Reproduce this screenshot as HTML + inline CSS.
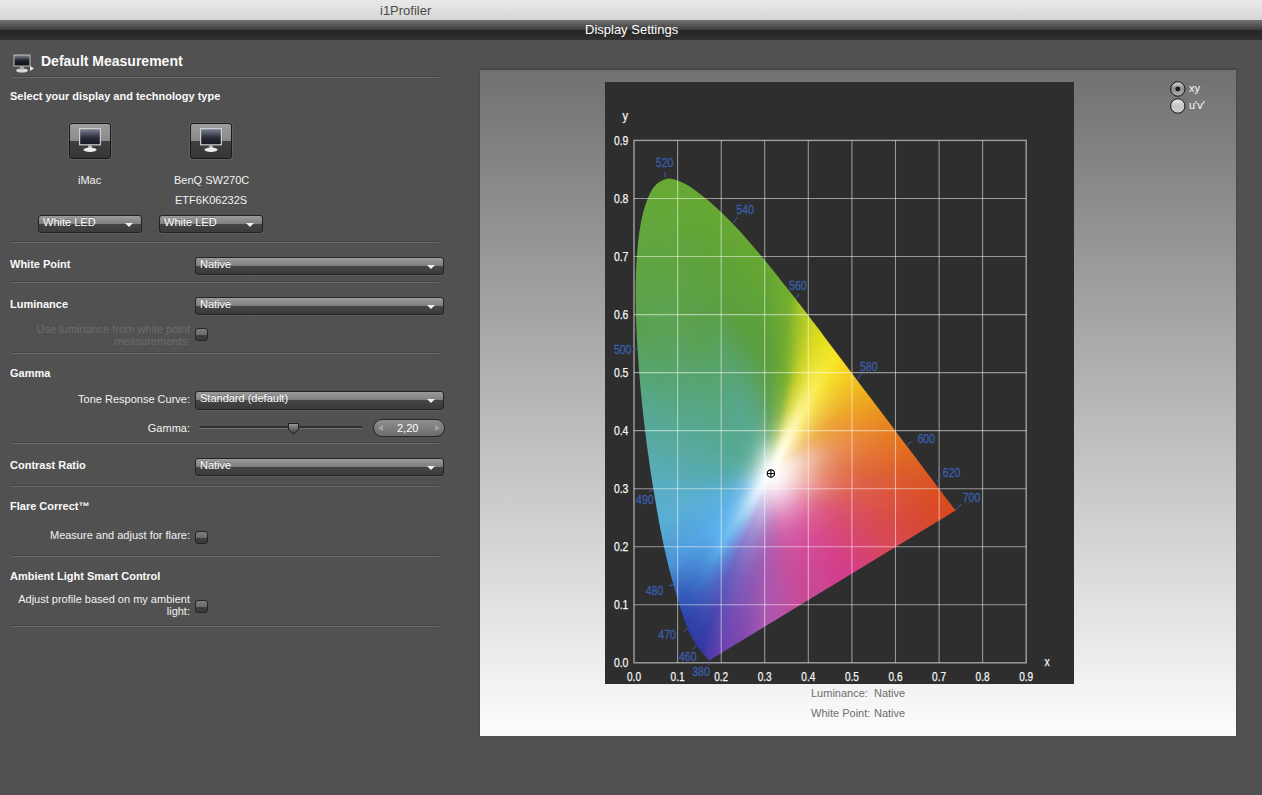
<!DOCTYPE html>
<html><head><meta charset="utf-8"><style>
*{margin:0;padding:0;box-sizing:border-box}
html,body{width:1262px;height:795px;overflow:hidden;background:#515151;font-family:"Liberation Sans",sans-serif;}
.abs{position:absolute}
#tb{position:absolute;left:0;top:0;width:1262px;height:20px;background:linear-gradient(#e9e9e9 0,#e6e6e6 20%,#d5d5d5 100%);}
#tb span{position:absolute;left:380px;top:3px;font-size:13px;line-height:15px;color:#4b4b4b}
#db{position:absolute;left:0;top:20px;width:1262px;height:20px;background:linear-gradient(#727272 0,#3e3e3e 48%,#262626 50%,#2a2a2a 75%,#323232 100%);}
#db span{position:absolute;left:585px;top:2px;font-size:13px;line-height:15px;color:#fff}
.lb,.bl,.dl{position:absolute;font-size:11px;line-height:12px;color:#f2f2f2;white-space:nowrap}
.bl{font-weight:bold;color:#fafafa}
.dl{color:#6c6c6c;text-align:right}
.r{text-align:right}
.sep{position:absolute;left:11px;width:428px;height:2px;margin-top:-1px;border-top:1px solid #444;border-bottom:1px solid #6a6a6a}
.dd{position:absolute;border:1px solid #232323;border-radius:3px;background:linear-gradient(#9c9c9c 0,#7e7e7e 48%,#454545 50%,#3b3b3b 100%);box-shadow:0 1px 0 rgba(255,255,255,0.08)}
.dd span{position:absolute;left:4px;top:0px;font-size:11px;line-height:12px;color:#fff;text-shadow:0 -1px 0 rgba(0,0,0,0.25)}
.dd i{position:absolute;right:8px;top:7px;width:0;height:0;border-left:4px solid transparent;border-right:4px solid transparent;border-top:4px solid #f0f0f0}
.cb{position:absolute;width:13px;height:13px;border:1px solid #242424;border-radius:3px;background:linear-gradient(#7e7e7e 0,#6a6a6a 50%,#404040 52%,#3a3a3a 100%)}
.mb{position:absolute;width:42px;height:36px;border:1px solid #1a1a1a;border-radius:3px;background:linear-gradient(#9c9c9c 0,#8a8a8a 49%,#404040 50%,#363636 100%);box-shadow:0 0 0 1px rgba(120,120,120,0.35)}
.mb svg{position:absolute;left:-1px;top:-1px}
</style></head>
<body>
<div id="tb"><span>i1Profiler</span></div>
<div id="db"><span>Display Settings</span></div>
<svg class="abs" style="left:12px;top:52px" width="24" height="22" viewBox="0 0 24 22">
<defs><linearGradient id="hs" x1="0" y1="0" x2="0" y2="1"><stop offset="0" stop-color="#7b8090"/><stop offset="0.5" stop-color="#22252e"/><stop offset="1" stop-color="#101116"/></linearGradient></defs>
<rect x="1.5" y="2.5" width="17" height="12" fill="#bdbdbd"/><rect x="2.5" y="3.5" width="15" height="10" fill="url(#hs)"/>
<ellipse cx="10" cy="18.5" rx="6" ry="2" fill="#d8d8d8"/><rect x="8" y="14.5" width="4" height="3" fill="#aaa"/>
<path d="M18 14 L22 16.5 L18 19 Z" fill="#e8e8e8"/></svg>
<div class="bl" style="left:41px;top:53px;font-size:14px;line-height:16px">Default Measurement</div>
<div class="sep" style="top:77px"></div>
<div class="bl" style="left:10px;top:90px">Select your display and technology type</div>
<div class="mb" style="left:69px;top:123px"><svg width="42" height="36" viewBox="0 0 42 36">
<defs><linearGradient id="scr69" x1="0" y1="0" x2="0" y2="1"><stop offset="0" stop-color="#7c8294"/><stop offset="0.55" stop-color="#2a2d3a"/><stop offset="1" stop-color="#161822"/></linearGradient></defs>
<rect x="10" y="5" width="22" height="17.4" fill="#cfcfcf"/>
<rect x="11.2" y="6.2" width="19.6" height="15" fill="url(#scr69)"/>
<rect x="19.2" y="22.4" width="3.6" height="3" fill="#c4c4c4"/>
<ellipse cx="21" cy="26.8" rx="6.6" ry="2.2" fill="#ececec"/>
</svg></div>
<div class="mb" style="left:190px;top:123px"><svg width="42" height="36" viewBox="0 0 42 36">
<defs><linearGradient id="scr190" x1="0" y1="0" x2="0" y2="1"><stop offset="0" stop-color="#7c8294"/><stop offset="0.55" stop-color="#2a2d3a"/><stop offset="1" stop-color="#161822"/></linearGradient></defs>
<rect x="10" y="5" width="22" height="17.4" fill="#cfcfcf"/>
<rect x="11.2" y="6.2" width="19.6" height="15" fill="url(#scr190)"/>
<rect x="19.2" y="22.4" width="3.6" height="3" fill="#c4c4c4"/>
<ellipse cx="21" cy="26.8" rx="6.6" ry="2.2" fill="#ececec"/>
</svg></div>
<div class="lb" style="left:78px;top:174px">iMac</div>
<div class="lb" style="left:174px;top:174px">BenQ SW270C</div>
<div class="lb" style="left:175px;top:194px">ETF6K06232S</div>
<div class="dd" style="left:38px;top:215px;width:104px;height:18px"><span>White LED</span><i></i></div>
<div class="dd" style="left:159px;top:215px;width:104px;height:18px"><span>White LED</span><i></i></div>
<div class="sep" style="top:242px"></div>
<div class="bl" style="left:10px;top:258px">White Point</div>
<div class="dd" style="left:195px;top:257px;width:249px;height:18px"><span>Native</span><i></i></div>
<div class="sep" style="top:282px"></div>
<div class="bl" style="left:10px;top:298px">Luminance</div>
<div class="dd" style="left:195px;top:297px;width:249px;height:18px"><span>Native</span><i></i></div>
<div class="dl" style="right:1072px;top:323px">Use luminance from white point<br>measurements:</div>
<div class="cb" style="left:195px;top:328px"></div>
<div class="sep" style="top:353px"></div>
<div class="bl" style="left:10px;top:367px">Gamma</div>
<div class="lb r" style="right:1072px;top:393px">Tone Response Curve:</div>
<div class="dd" style="left:195px;top:391px;width:249px;height:19px"><span>Standard (default)</span><i></i></div>
<div class="lb r" style="right:1072px;top:422px">Gamma:</div>
<div class="abs" style="left:199px;top:426px;width:164px;height:3px;border-radius:2px;background:#303030;border-bottom:1px solid #727272"></div>
<svg class="abs" style="left:287px;top:422px" width="13" height="13" viewBox="0 0 13 13"><defs><linearGradient id="th" x1="0" y1="0" x2="0" y2="1"><stop offset="0" stop-color="#9a9a9a"/><stop offset="1" stop-color="#3a3a3a"/></linearGradient></defs>
<path d="M1.5 1.5 H11.5 V7.5 L6.5 12 L1.5 7.5 Z" fill="url(#th)" stroke="#1f1f1f" stroke-width="1"/></svg>
<div class="abs" style="left:373px;top:419px;width:72px;height:18px;border:1px solid #262626;border-radius:9px;background:linear-gradient(#8f8f8f,#6c6c6c)"></div>
<div class="lb" style="left:397px;top:422px;color:#fff">2,20</div>
<div class="abs" style="left:378px;top:425px;width:0;height:0;border-top:3px solid transparent;border-bottom:3px solid transparent;border-right:5px solid #a4a4a4"></div>
<div class="abs" style="left:435px;top:425px;width:0;height:0;border-top:3px solid transparent;border-bottom:3px solid transparent;border-left:5px solid #a4a4a4"></div>
<div class="sep" style="top:443px"></div>
<div class="bl" style="left:10px;top:459px">Contrast Ratio</div>
<div class="dd" style="left:195px;top:458px;width:249px;height:18px"><span>Native</span><i></i></div>
<div class="sep" style="top:486px"></div>
<div class="bl" style="left:10px;top:500px">Flare Correct™</div>
<div class="lb r" style="right:1072px;top:529px">Measure and adjust for flare:</div>
<div class="cb" style="left:195px;top:531px"></div>
<div class="sep" style="top:556px"></div>
<div class="bl" style="left:10px;top:570px">Ambient Light Smart Control</div>
<div class="lb r" style="right:1072px;top:593px">Adjust profile based on my ambient<br>light:</div>
<div class="cb" style="left:195px;top:600px"></div>
<div class="sep" style="top:626px"></div>
<div class="abs" style="left:480px;top:70px;width:756px;height:666px;background:linear-gradient(#717171,#fdfdfd);box-shadow:0 -1px 2px rgba(0,0,0,0.25)"></div>
<div class="abs" style="left:605px;top:82px;width:469px;height:602px;background:#2e2e2e"></div>
<svg class="abs" style="left:605px;top:82px" width="469" height="602" viewBox="0 0 469 602"><defs><clipPath id="loc"><path d="M104.9 577.9 C104.9 577.9 104.9 577.9 104.8 577.9 C104.8 577.9 104.8 577.9 104.7 578.0 C104.7 578.0 104.7 577.9 104.7 578.0 C104.6 578.0 104.6 578.0 104.5 578.0 C104.5 578.0 104.4 578.0 104.4 578.0 C104.3 578.0 104.3 578.0 104.2 578.0 C104.2 578.0 104.1 578.0 104.0 578.0 C103.9 578.0 103.8 577.9 103.7 577.8 C103.6 577.7 103.4 577.6 103.2 577.4 C103.0 577.3 102.9 577.1 102.6 576.8 C102.4 576.5 102.1 576.2 101.7 575.8 C101.4 575.4 101.1 575.0 100.6 574.5 C100.2 574.0 99.8 573.4 99.2 572.8 C98.6 572.1 98.0 571.4 97.2 570.5 C96.5 569.7 95.7 568.8 94.8 567.6 C93.9 566.5 92.9 565.2 91.8 563.6 C90.6 561.9 89.5 560.4 88.1 557.6 C86.6 554.9 85.0 551.8 83.1 547.3 C81.2 542.7 79.1 537.7 76.8 530.4 C74.4 523.2 71.8 514.8 68.8 503.8 C65.8 492.8 62.3 480.0 58.9 464.3 C55.6 448.6 52.1 430.1 48.8 409.6 C45.5 389.1 41.9 364.8 39.2 341.3 C36.5 317.7 34.0 291.7 32.6 268.3 C31.1 244.9 30.3 221.2 30.7 200.8 C31.1 180.3 32.5 160.6 35.1 145.4 C37.6 130.2 41.6 117.6 46.0 109.5 C50.3 101.4 55.9 98.2 61.4 96.9 C66.8 95.5 72.9 98.6 78.8 101.3 C84.6 104.0 90.7 108.7 96.4 113.1 C102.1 117.4 107.6 122.2 113.1 127.2 C118.5 132.2 123.8 137.5 129.1 143.0 C134.4 148.5 139.6 154.4 144.8 160.4 C150.1 166.4 155.2 172.7 160.4 179.0 C165.6 185.3 170.8 191.8 176.0 198.4 C181.2 204.9 186.4 211.6 191.6 218.3 C196.8 225.0 202.0 231.8 207.1 238.6 C212.3 245.3 217.4 252.1 222.5 258.9 C227.6 265.6 232.7 272.3 237.7 278.9 C242.6 285.5 247.6 292.0 252.3 298.4 C257.1 304.7 261.9 311.0 266.4 317.1 C271.0 323.1 275.5 329.0 279.7 334.6 C283.9 340.2 288.0 345.7 291.7 350.7 C295.5 355.7 299.0 360.2 302.2 364.6 C305.5 369.0 308.7 373.1 311.5 376.8 C314.3 380.6 316.8 383.9 319.2 386.9 C321.5 390.0 323.5 392.8 325.4 395.2 C327.3 397.7 328.9 399.9 330.4 401.9 C331.8 403.8 333.1 405.5 334.3 407.1 C335.5 408.7 336.5 410.0 337.5 411.3 C338.5 412.6 339.4 413.8 340.2 414.9 C341.0 415.9 341.7 416.9 342.3 417.8 C343.0 418.6 343.6 419.4 344.1 420.0 C344.6 420.7 345.0 421.3 345.4 421.8 C345.8 422.3 346.1 422.7 346.4 423.1 C346.7 423.5 346.9 423.7 347.1 424.1 C347.4 424.4 347.8 424.9 348.0 425.3 C348.3 425.6 348.1 425.6 348.6 426.1 C349.1 426.6 350.6 428.0 351.0 428.3 Z"/></clipPath><filter id="bl" x="-5%" y="-5%" width="110%" height="110%"><feGaussianBlur stdDeviation="1.6"/></filter><linearGradient id="w0" gradientUnits="userSpaceOnUse" x1="165.4" y1="391.5" x2="165.4" y2="177.3"><stop offset="0.000" stop-color="#ffffff"/><stop offset="0.014" stop-color="#fefefe"/><stop offset="0.028" stop-color="#fafcf9"/><stop offset="0.047" stop-color="#f0f7ef"/><stop offset="0.070" stop-color="#e0edde"/><stop offset="0.098" stop-color="#c8dfc5"/><stop offset="0.131" stop-color="#abcea6"/><stop offset="0.168" stop-color="#8ebe87"/><stop offset="0.210" stop-color="#78b16f"/><stop offset="0.257" stop-color="#6aa85f"/><stop offset="0.308" stop-color="#62a454"/><stop offset="0.364" stop-color="#5fa24c"/><stop offset="0.430" stop-color="#5da046"/><stop offset="0.504" stop-color="#5b9f3e"/><stop offset="0.588" stop-color="#5c9f3b"/><stop offset="0.682" stop-color="#5ea238"/><stop offset="0.794" stop-color="#61a436"/><stop offset="0.934" stop-color="#65a733"/><stop offset="1.000" stop-color="#66a832"/></linearGradient><linearGradient id="w1" gradientUnits="userSpaceOnUse" x1="165.4" y1="391.5" x2="170.8" y2="183.7"><stop offset="0.000" stop-color="#ffffff"/><stop offset="0.014" stop-color="#fefefe"/><stop offset="0.029" stop-color="#fafcf9"/><stop offset="0.048" stop-color="#f2f7f0"/><stop offset="0.072" stop-color="#e2eedf"/><stop offset="0.101" stop-color="#cce1c6"/><stop offset="0.135" stop-color="#b1d1a7"/><stop offset="0.173" stop-color="#95c188"/><stop offset="0.216" stop-color="#7fb470"/><stop offset="0.265" stop-color="#71ac5e"/><stop offset="0.317" stop-color="#69a752"/><stop offset="0.375" stop-color="#65a44a"/><stop offset="0.442" stop-color="#62a343"/><stop offset="0.519" stop-color="#5fa13b"/><stop offset="0.606" stop-color="#60a239"/><stop offset="0.702" stop-color="#63a436"/><stop offset="0.818" stop-color="#66a634"/><stop offset="0.962" stop-color="#69a931"/><stop offset="1.000" stop-color="#69a931"/></linearGradient><linearGradient id="w2" gradientUnits="userSpaceOnUse" x1="165.4" y1="391.5" x2="176.0" y2="190.0"><stop offset="0.000" stop-color="#ffffff"/><stop offset="0.015" stop-color="#fefefe"/><stop offset="0.030" stop-color="#fafcfa"/><stop offset="0.050" stop-color="#f3f8f0"/><stop offset="0.074" stop-color="#e5efe0"/><stop offset="0.104" stop-color="#d0e3c7"/><stop offset="0.139" stop-color="#b6d4a9"/><stop offset="0.178" stop-color="#9cc48a"/><stop offset="0.223" stop-color="#87b871"/><stop offset="0.273" stop-color="#78af5d"/><stop offset="0.327" stop-color="#6faa50"/><stop offset="0.387" stop-color="#6aa747"/><stop offset="0.456" stop-color="#66a540"/><stop offset="0.535" stop-color="#63a438"/><stop offset="0.624" stop-color="#65a536"/><stop offset="0.724" stop-color="#67a734"/><stop offset="0.842" stop-color="#6aa932"/><stop offset="0.991" stop-color="#6cab2f"/><stop offset="1.000" stop-color="#6cab2f"/></linearGradient><linearGradient id="w3" gradientUnits="userSpaceOnUse" x1="165.4" y1="391.5" x2="180.8" y2="195.6"><stop offset="0.000" stop-color="#ffffff"/><stop offset="0.015" stop-color="#fefefe"/><stop offset="0.031" stop-color="#fbfcfa"/><stop offset="0.051" stop-color="#f4f8f1"/><stop offset="0.076" stop-color="#e7f0e1"/><stop offset="0.107" stop-color="#d3e5c8"/><stop offset="0.142" stop-color="#bbd6aa"/><stop offset="0.183" stop-color="#a3c78b"/><stop offset="0.229" stop-color="#8ebb71"/><stop offset="0.280" stop-color="#7eb25d"/><stop offset="0.336" stop-color="#75ad4e"/><stop offset="0.397" stop-color="#6faa45"/><stop offset="0.468" stop-color="#6ba83d"/><stop offset="0.550" stop-color="#68a636"/><stop offset="0.641" stop-color="#69a834"/><stop offset="0.743" stop-color="#6ba932"/><stop offset="0.865" stop-color="#6dab30"/><stop offset="1.000" stop-color="#6fac2e"/></linearGradient><linearGradient id="w4" gradientUnits="userSpaceOnUse" x1="165.4" y1="391.5" x2="185.4" y2="201.2"><stop offset="0.000" stop-color="#ffffff"/><stop offset="0.016" stop-color="#fefefe"/><stop offset="0.031" stop-color="#fbfdfa"/><stop offset="0.052" stop-color="#f5f9f1"/><stop offset="0.078" stop-color="#e9f1e1"/><stop offset="0.110" stop-color="#d7e6ca"/><stop offset="0.146" stop-color="#c0d9ac"/><stop offset="0.188" stop-color="#a9ca8d"/><stop offset="0.235" stop-color="#95be72"/><stop offset="0.287" stop-color="#85b55c"/><stop offset="0.345" stop-color="#7baf4d"/><stop offset="0.408" stop-color="#74ac43"/><stop offset="0.481" stop-color="#6faa3a"/><stop offset="0.564" stop-color="#6da934"/><stop offset="0.659" stop-color="#6eaa32"/><stop offset="0.763" stop-color="#6fab30"/><stop offset="0.889" stop-color="#71ac2e"/><stop offset="1.000" stop-color="#72ad2d"/></linearGradient><linearGradient id="w5" gradientUnits="userSpaceOnUse" x1="165.4" y1="391.5" x2="189.7" y2="206.8"><stop offset="0.000" stop-color="#ffffff"/><stop offset="0.016" stop-color="#fefefe"/><stop offset="0.032" stop-color="#fbfdfa"/><stop offset="0.054" stop-color="#f5f9f1"/><stop offset="0.081" stop-color="#eaf2e2"/><stop offset="0.113" stop-color="#dae8cb"/><stop offset="0.150" stop-color="#c5dbad"/><stop offset="0.193" stop-color="#afcd8e"/><stop offset="0.242" stop-color="#9cc273"/><stop offset="0.295" stop-color="#8bb85b"/><stop offset="0.354" stop-color="#80b24b"/><stop offset="0.419" stop-color="#79af40"/><stop offset="0.494" stop-color="#73ac37"/><stop offset="0.580" stop-color="#72ac32"/><stop offset="0.676" stop-color="#74ae30"/><stop offset="0.784" stop-color="#77af2f"/><stop offset="0.913" stop-color="#7ab12c"/><stop offset="1.000" stop-color="#7bb22c"/></linearGradient><linearGradient id="w6" gradientUnits="userSpaceOnUse" x1="165.4" y1="391.5" x2="193.9" y2="211.6"><stop offset="0.000" stop-color="#ffffff"/><stop offset="0.016" stop-color="#fefefe"/><stop offset="0.033" stop-color="#fcfdfa"/><stop offset="0.055" stop-color="#f6f9f2"/><stop offset="0.082" stop-color="#ecf3e3"/><stop offset="0.115" stop-color="#ddeacc"/><stop offset="0.154" stop-color="#caddaf"/><stop offset="0.198" stop-color="#b5d08f"/><stop offset="0.247" stop-color="#a2c573"/><stop offset="0.302" stop-color="#92bb5b"/><stop offset="0.362" stop-color="#86b549"/><stop offset="0.428" stop-color="#7eb13e"/><stop offset="0.505" stop-color="#77af34"/><stop offset="0.593" stop-color="#79b030"/><stop offset="0.692" stop-color="#80b42f"/><stop offset="0.802" stop-color="#87b72d"/><stop offset="0.934" stop-color="#90bc2b"/><stop offset="1.000" stop-color="#91bd2b"/></linearGradient><linearGradient id="w7" gradientUnits="userSpaceOnUse" x1="165.4" y1="391.5" x2="197.8" y2="216.8"><stop offset="0.000" stop-color="#ffffff"/><stop offset="0.017" stop-color="#fefffe"/><stop offset="0.034" stop-color="#fcfdfa"/><stop offset="0.056" stop-color="#f7faf2"/><stop offset="0.084" stop-color="#eef4e4"/><stop offset="0.118" stop-color="#e1ebcd"/><stop offset="0.158" stop-color="#cfe0b1"/><stop offset="0.203" stop-color="#bdd492"/><stop offset="0.253" stop-color="#abc975"/><stop offset="0.310" stop-color="#9bbf5b"/><stop offset="0.371" stop-color="#8fb949"/><stop offset="0.439" stop-color="#87b63c"/><stop offset="0.518" stop-color="#7fb331"/><stop offset="0.608" stop-color="#86b62f"/><stop offset="0.709" stop-color="#8ebb2d"/><stop offset="0.822" stop-color="#98c02b"/><stop offset="0.957" stop-color="#a3c529"/><stop offset="1.000" stop-color="#a3c529"/></linearGradient><linearGradient id="w8" gradientUnits="userSpaceOnUse" x1="165.4" y1="391.5" x2="201.6" y2="221.3"><stop offset="0.000" stop-color="#ffffff"/><stop offset="0.017" stop-color="#fefffe"/><stop offset="0.034" stop-color="#fdfdfb"/><stop offset="0.057" stop-color="#f9fbf3"/><stop offset="0.086" stop-color="#f1f6e5"/><stop offset="0.121" stop-color="#e6eed0"/><stop offset="0.161" stop-color="#d8e4b4"/><stop offset="0.207" stop-color="#c8d996"/><stop offset="0.259" stop-color="#b8cf79"/><stop offset="0.316" stop-color="#aac65e"/><stop offset="0.379" stop-color="#a0c14b"/><stop offset="0.448" stop-color="#99bd3c"/><stop offset="0.529" stop-color="#93bb30"/><stop offset="0.621" stop-color="#99be2e"/><stop offset="0.724" stop-color="#9fc12c"/><stop offset="0.839" stop-color="#a6c529"/><stop offset="0.977" stop-color="#adc926"/><stop offset="1.000" stop-color="#adc926"/></linearGradient><linearGradient id="w9" gradientUnits="userSpaceOnUse" x1="165.4" y1="391.5" x2="205.2" y2="225.7"><stop offset="0.000" stop-color="#ffffff"/><stop offset="0.018" stop-color="#fffffe"/><stop offset="0.035" stop-color="#fdfefb"/><stop offset="0.059" stop-color="#fafbf4"/><stop offset="0.088" stop-color="#f4f7e6"/><stop offset="0.123" stop-color="#ebf0d2"/><stop offset="0.164" stop-color="#dfe8b8"/><stop offset="0.211" stop-color="#d2de9b"/><stop offset="0.264" stop-color="#c6d57d"/><stop offset="0.323" stop-color="#bacd62"/><stop offset="0.387" stop-color="#b1c84c"/><stop offset="0.457" stop-color="#abc53c"/><stop offset="0.540" stop-color="#a7c330"/><stop offset="0.633" stop-color="#abc52d"/><stop offset="0.739" stop-color="#afc82a"/><stop offset="0.856" stop-color="#b4cb27"/><stop offset="0.997" stop-color="#b7cd24"/><stop offset="1.000" stop-color="#b7cd24"/></linearGradient><linearGradient id="w10" gradientUnits="userSpaceOnUse" x1="165.4" y1="391.5" x2="208.6" y2="230.1"><stop offset="0.000" stop-color="#ffffff"/><stop offset="0.018" stop-color="#fffffe"/><stop offset="0.036" stop-color="#fefefb"/><stop offset="0.060" stop-color="#fbfcf4"/><stop offset="0.090" stop-color="#f7f8e8"/><stop offset="0.126" stop-color="#f0f2d4"/><stop offset="0.168" stop-color="#e7ebbb"/><stop offset="0.215" stop-color="#dde39f"/><stop offset="0.269" stop-color="#d3db81"/><stop offset="0.329" stop-color="#c9d465"/><stop offset="0.395" stop-color="#c3cf4e"/><stop offset="0.467" stop-color="#becc3c"/><stop offset="0.551" stop-color="#bbcb30"/><stop offset="0.646" stop-color="#bdcd2c"/><stop offset="0.754" stop-color="#bece28"/><stop offset="0.874" stop-color="#c0d024"/><stop offset="1.000" stop-color="#c1d121"/></linearGradient><linearGradient id="w11" gradientUnits="userSpaceOnUse" x1="165.4" y1="391.5" x2="212.0" y2="234.2"><stop offset="0.000" stop-color="#ffffff"/><stop offset="0.018" stop-color="#fffffe"/><stop offset="0.037" stop-color="#fefefc"/><stop offset="0.061" stop-color="#fdfdf6"/><stop offset="0.091" stop-color="#fafaec"/><stop offset="0.128" stop-color="#f5f6dc"/><stop offset="0.171" stop-color="#eff0c6"/><stop offset="0.219" stop-color="#e8e9ac"/><stop offset="0.274" stop-color="#e0e28e"/><stop offset="0.335" stop-color="#d8dc6f"/><stop offset="0.402" stop-color="#d2d755"/><stop offset="0.475" stop-color="#ced440"/><stop offset="0.561" stop-color="#cbd232"/><stop offset="0.658" stop-color="#cbd32c"/><stop offset="0.768" stop-color="#cbd427"/><stop offset="0.890" stop-color="#cbd521"/><stop offset="1.000" stop-color="#cbd51e"/></linearGradient><linearGradient id="w12" gradientUnits="userSpaceOnUse" x1="165.4" y1="391.5" x2="215.2" y2="238.3"><stop offset="0.000" stop-color="#ffffff"/><stop offset="0.019" stop-color="#fffffe"/><stop offset="0.037" stop-color="#fefefc"/><stop offset="0.062" stop-color="#fdfdf7"/><stop offset="0.093" stop-color="#fbfbef"/><stop offset="0.130" stop-color="#f8f8e0"/><stop offset="0.174" stop-color="#f3f3cd"/><stop offset="0.223" stop-color="#eeeeb4"/><stop offset="0.279" stop-color="#e7e797"/><stop offset="0.341" stop-color="#e1e179"/><stop offset="0.410" stop-color="#dbdc5e"/><stop offset="0.484" stop-color="#d7d948"/><stop offset="0.571" stop-color="#d5d739"/><stop offset="0.670" stop-color="#d4d72f"/><stop offset="0.782" stop-color="#d5d827"/><stop offset="0.906" stop-color="#d5d91f"/><stop offset="1.000" stop-color="#d5d91c"/></linearGradient><linearGradient id="w13" gradientUnits="userSpaceOnUse" x1="165.4" y1="391.5" x2="218.2" y2="242.3"><stop offset="0.000" stop-color="#ffffff"/><stop offset="0.019" stop-color="#fffffe"/><stop offset="0.038" stop-color="#fffffd"/><stop offset="0.063" stop-color="#fefef8"/><stop offset="0.095" stop-color="#fcfcf1"/><stop offset="0.133" stop-color="#faf9e4"/><stop offset="0.177" stop-color="#f7f6d2"/><stop offset="0.227" stop-color="#f3f1bc"/><stop offset="0.284" stop-color="#eeeca0"/><stop offset="0.348" stop-color="#e8e683"/><stop offset="0.417" stop-color="#e4e268"/><stop offset="0.493" stop-color="#e0de51"/><stop offset="0.581" stop-color="#dddc40"/><stop offset="0.682" stop-color="#dddc32"/><stop offset="0.796" stop-color="#dddc27"/><stop offset="0.923" stop-color="#dddc1c"/><stop offset="1.000" stop-color="#dddc1a"/></linearGradient><linearGradient id="w14" gradientUnits="userSpaceOnUse" x1="165.4" y1="391.5" x2="221.2" y2="246.1"><stop offset="0.000" stop-color="#ffffff"/><stop offset="0.019" stop-color="#fffffe"/><stop offset="0.039" stop-color="#fffffd"/><stop offset="0.064" stop-color="#fefef9"/><stop offset="0.096" stop-color="#fdfdf2"/><stop offset="0.135" stop-color="#fcfbe7"/><stop offset="0.180" stop-color="#faf8d7"/><stop offset="0.231" stop-color="#f7f4c2"/><stop offset="0.289" stop-color="#f3f0a9"/><stop offset="0.353" stop-color="#efeb8d"/><stop offset="0.424" stop-color="#ebe773"/><stop offset="0.501" stop-color="#e8e35c"/><stop offset="0.591" stop-color="#e6e148"/><stop offset="0.693" stop-color="#e4df37"/><stop offset="0.809" stop-color="#e2de29"/><stop offset="0.937" stop-color="#e1de1c"/><stop offset="1.000" stop-color="#e1de1a"/></linearGradient><linearGradient id="w15" gradientUnits="userSpaceOnUse" x1="165.4" y1="391.5" x2="224.2" y2="249.5"><stop offset="0.000" stop-color="#ffffff"/><stop offset="0.020" stop-color="#ffffff"/><stop offset="0.039" stop-color="#fffffd"/><stop offset="0.065" stop-color="#fffefa"/><stop offset="0.098" stop-color="#fefdf4"/><stop offset="0.137" stop-color="#fdfcea"/><stop offset="0.182" stop-color="#fcf9db"/><stop offset="0.234" stop-color="#faf6c8"/><stop offset="0.293" stop-color="#f8f3b0"/><stop offset="0.358" stop-color="#f5ef97"/><stop offset="0.429" stop-color="#f3eb7e"/><stop offset="0.507" stop-color="#f0e868"/><stop offset="0.599" stop-color="#ede551"/><stop offset="0.703" stop-color="#eae33c"/><stop offset="0.820" stop-color="#e7e12b"/><stop offset="0.950" stop-color="#e4df1b"/><stop offset="1.000" stop-color="#e4df1b"/></linearGradient><linearGradient id="w16" gradientUnits="userSpaceOnUse" x1="165.4" y1="391.5" x2="227.0" y2="253.1"><stop offset="0.000" stop-color="#ffffff"/><stop offset="0.020" stop-color="#ffffff"/><stop offset="0.040" stop-color="#fffffd"/><stop offset="0.066" stop-color="#fffefb"/><stop offset="0.099" stop-color="#fefef5"/><stop offset="0.139" stop-color="#fefdec"/><stop offset="0.185" stop-color="#fdfbdf"/><stop offset="0.238" stop-color="#fcf8cd"/><stop offset="0.297" stop-color="#fbf6b7"/><stop offset="0.363" stop-color="#faf2a0"/><stop offset="0.436" stop-color="#f9ef88"/><stop offset="0.515" stop-color="#f8ed74"/><stop offset="0.607" stop-color="#f4e95a"/><stop offset="0.713" stop-color="#f0e642"/><stop offset="0.832" stop-color="#ece32d"/><stop offset="0.964" stop-color="#e8e11c"/><stop offset="1.000" stop-color="#e8e11b"/></linearGradient><linearGradient id="w17" gradientUnits="userSpaceOnUse" x1="165.4" y1="391.5" x2="229.8" y2="256.5"><stop offset="0.000" stop-color="#ffffff"/><stop offset="0.020" stop-color="#ffffff"/><stop offset="0.040" stop-color="#fffffe"/><stop offset="0.067" stop-color="#fffefb"/><stop offset="0.100" stop-color="#fffef6"/><stop offset="0.140" stop-color="#fefdee"/><stop offset="0.187" stop-color="#fefbe2"/><stop offset="0.241" stop-color="#fdf9d1"/><stop offset="0.301" stop-color="#fcf7bd"/><stop offset="0.368" stop-color="#fbf4a6"/><stop offset="0.441" stop-color="#faf08e"/><stop offset="0.522" stop-color="#f9ee78"/><stop offset="0.615" stop-color="#f6ea5c"/><stop offset="0.722" stop-color="#f2e742"/><stop offset="0.843" stop-color="#efe42d"/><stop offset="0.976" stop-color="#ece21d"/><stop offset="1.000" stop-color="#ece21d"/></linearGradient><linearGradient id="w18" gradientUnits="userSpaceOnUse" x1="165.4" y1="391.5" x2="232.4" y2="260.1"><stop offset="0.000" stop-color="#ffffff"/><stop offset="0.020" stop-color="#ffffff"/><stop offset="0.041" stop-color="#fffffe"/><stop offset="0.068" stop-color="#fffffb"/><stop offset="0.102" stop-color="#fffef7"/><stop offset="0.142" stop-color="#fefdf0"/><stop offset="0.190" stop-color="#fefce5"/><stop offset="0.244" stop-color="#fdfad5"/><stop offset="0.305" stop-color="#fcf7c2"/><stop offset="0.373" stop-color="#fbf4ab"/><stop offset="0.447" stop-color="#faf193"/><stop offset="0.529" stop-color="#f9ee7c"/><stop offset="0.624" stop-color="#f7eb5f"/><stop offset="0.732" stop-color="#f4e845"/><stop offset="0.854" stop-color="#f1e52e"/><stop offset="0.990" stop-color="#efe41f"/><stop offset="1.000" stop-color="#efe41f"/></linearGradient><linearGradient id="w19" gradientUnits="userSpaceOnUse" x1="165.4" y1="391.5" x2="235.0" y2="263.4"><stop offset="0.000" stop-color="#ffffff"/><stop offset="0.021" stop-color="#ffffff"/><stop offset="0.041" stop-color="#fffffe"/><stop offset="0.069" stop-color="#fffffb"/><stop offset="0.103" stop-color="#fffef7"/><stop offset="0.144" stop-color="#fefdf0"/><stop offset="0.192" stop-color="#fefce5"/><stop offset="0.247" stop-color="#fdfad5"/><stop offset="0.309" stop-color="#fdf7c2"/><stop offset="0.377" stop-color="#fcf5ab"/><stop offset="0.453" stop-color="#fbf292"/><stop offset="0.535" stop-color="#faef79"/><stop offset="0.631" stop-color="#f8eb5d"/><stop offset="0.741" stop-color="#f6e943"/><stop offset="0.864" stop-color="#f4e62e"/><stop offset="1.000" stop-color="#f3e521"/></linearGradient><linearGradient id="w20" gradientUnits="userSpaceOnUse" x1="165.4" y1="391.5" x2="237.6" y2="266.4"><stop offset="0.000" stop-color="#ffffff"/><stop offset="0.021" stop-color="#ffffff"/><stop offset="0.042" stop-color="#fffffd"/><stop offset="0.069" stop-color="#fffefb"/><stop offset="0.104" stop-color="#fffef5"/><stop offset="0.145" stop-color="#fefded"/><stop offset="0.194" stop-color="#fefbe0"/><stop offset="0.249" stop-color="#fdf9ce"/><stop offset="0.312" stop-color="#fdf6b7"/><stop offset="0.381" stop-color="#fcf39e"/><stop offset="0.457" stop-color="#fbf083"/><stop offset="0.540" stop-color="#faed69"/><stop offset="0.637" stop-color="#f9ea4e"/><stop offset="0.748" stop-color="#f8e838"/><stop offset="0.873" stop-color="#f7e727"/><stop offset="1.000" stop-color="#f6e61f"/></linearGradient><linearGradient id="w21" gradientUnits="userSpaceOnUse" x1="165.4" y1="391.5" x2="240.1" y2="269.7"><stop offset="0.000" stop-color="#ffffff"/><stop offset="0.021" stop-color="#ffffff"/><stop offset="0.042" stop-color="#fffffd"/><stop offset="0.070" stop-color="#fffefa"/><stop offset="0.105" stop-color="#fffdf4"/><stop offset="0.147" stop-color="#fefcea"/><stop offset="0.196" stop-color="#fefadb"/><stop offset="0.252" stop-color="#fdf7c7"/><stop offset="0.315" stop-color="#fcf3af"/><stop offset="0.385" stop-color="#fbf094"/><stop offset="0.462" stop-color="#faec78"/><stop offset="0.546" stop-color="#f9e85f"/><stop offset="0.644" stop-color="#f7e546"/><stop offset="0.756" stop-color="#f7e332"/><stop offset="0.882" stop-color="#f6e224"/><stop offset="1.000" stop-color="#f6e21e"/></linearGradient><linearGradient id="w22" gradientUnits="userSpaceOnUse" x1="165.4" y1="391.5" x2="242.4" y2="272.9"><stop offset="0.000" stop-color="#ffffff"/><stop offset="0.021" stop-color="#fffffe"/><stop offset="0.042" stop-color="#fffffd"/><stop offset="0.071" stop-color="#fffef9"/><stop offset="0.106" stop-color="#fefdf3"/><stop offset="0.148" stop-color="#fefbe8"/><stop offset="0.198" stop-color="#fdf8d7"/><stop offset="0.254" stop-color="#fcf5c1"/><stop offset="0.318" stop-color="#fbf0a7"/><stop offset="0.389" stop-color="#faec8b"/><stop offset="0.467" stop-color="#f8e770"/><stop offset="0.551" stop-color="#f7e358"/><stop offset="0.650" stop-color="#f6e041"/><stop offset="0.763" stop-color="#f6df2f"/><stop offset="0.891" stop-color="#f5de22"/><stop offset="1.000" stop-color="#f5de1d"/></linearGradient><linearGradient id="w23" gradientUnits="userSpaceOnUse" x1="165.4" y1="391.5" x2="244.9" y2="275.9"><stop offset="0.000" stop-color="#ffffff"/><stop offset="0.021" stop-color="#fffffe"/><stop offset="0.043" stop-color="#fffffd"/><stop offset="0.071" stop-color="#fffef9"/><stop offset="0.107" stop-color="#fefcf1"/><stop offset="0.150" stop-color="#fefae5"/><stop offset="0.200" stop-color="#fdf7d3"/><stop offset="0.257" stop-color="#fbf2bc"/><stop offset="0.321" stop-color="#faeda1"/><stop offset="0.392" stop-color="#f8e784"/><stop offset="0.470" stop-color="#f7e26a"/><stop offset="0.556" stop-color="#f6de53"/><stop offset="0.656" stop-color="#f5db3d"/><stop offset="0.770" stop-color="#f5da2d"/><stop offset="0.898" stop-color="#f5da21"/><stop offset="1.000" stop-color="#f5da1d"/></linearGradient><linearGradient id="w24" gradientUnits="userSpaceOnUse" x1="165.4" y1="391.5" x2="247.2" y2="278.9"><stop offset="0.000" stop-color="#ffffff"/><stop offset="0.022" stop-color="#fffffe"/><stop offset="0.043" stop-color="#fffefc"/><stop offset="0.072" stop-color="#fffdf8"/><stop offset="0.108" stop-color="#fefcf0"/><stop offset="0.151" stop-color="#fdf9e2"/><stop offset="0.201" stop-color="#fcf5cf"/><stop offset="0.259" stop-color="#fbefb6"/><stop offset="0.323" stop-color="#f9e99a"/><stop offset="0.395" stop-color="#f7e37d"/><stop offset="0.474" stop-color="#f6dd63"/><stop offset="0.560" stop-color="#f5d94e"/><stop offset="0.661" stop-color="#f4d73a"/><stop offset="0.776" stop-color="#f4d52b"/><stop offset="0.905" stop-color="#f4d520"/><stop offset="1.000" stop-color="#f4d51d"/></linearGradient><linearGradient id="w25" gradientUnits="userSpaceOnUse" x1="165.4" y1="391.5" x2="249.5" y2="281.8"><stop offset="0.000" stop-color="#ffffff"/><stop offset="0.022" stop-color="#fffffe"/><stop offset="0.043" stop-color="#fffefc"/><stop offset="0.072" stop-color="#fefdf7"/><stop offset="0.109" stop-color="#fefbee"/><stop offset="0.152" stop-color="#fdf7df"/><stop offset="0.203" stop-color="#fbf2ca"/><stop offset="0.260" stop-color="#faecaf"/><stop offset="0.326" stop-color="#f8e492"/><stop offset="0.398" stop-color="#f6dd75"/><stop offset="0.478" stop-color="#f4d85d"/><stop offset="0.564" stop-color="#f3d449"/><stop offset="0.666" stop-color="#f3d238"/><stop offset="0.781" stop-color="#f3d12b"/><stop offset="0.912" stop-color="#f3d11f"/><stop offset="1.000" stop-color="#f4d11d"/></linearGradient><linearGradient id="w26" gradientUnits="userSpaceOnUse" x1="165.4" y1="391.5" x2="251.8" y2="284.8"><stop offset="0.000" stop-color="#ffffff"/><stop offset="0.022" stop-color="#fffffe"/><stop offset="0.044" stop-color="#fffefc"/><stop offset="0.073" stop-color="#fefdf6"/><stop offset="0.109" stop-color="#fefaec"/><stop offset="0.153" stop-color="#fcf5db"/><stop offset="0.204" stop-color="#fbefc4"/><stop offset="0.262" stop-color="#f9e7a7"/><stop offset="0.328" stop-color="#f6df89"/><stop offset="0.401" stop-color="#f4d86d"/><stop offset="0.481" stop-color="#f3d258"/><stop offset="0.568" stop-color="#f2ce46"/><stop offset="0.670" stop-color="#f2cd36"/><stop offset="0.787" stop-color="#f2cc2a"/><stop offset="0.918" stop-color="#f3cd1f"/><stop offset="1.000" stop-color="#f3cd1d"/></linearGradient><linearGradient id="w27" gradientUnits="userSpaceOnUse" x1="165.4" y1="391.5" x2="254.0" y2="287.7"><stop offset="0.000" stop-color="#ffffff"/><stop offset="0.022" stop-color="#fffffe"/><stop offset="0.044" stop-color="#fffefb"/><stop offset="0.073" stop-color="#fefcf5"/><stop offset="0.110" stop-color="#fdf9ea"/><stop offset="0.154" stop-color="#fcf3d8"/><stop offset="0.205" stop-color="#faecbf"/><stop offset="0.264" stop-color="#f8e3a1"/><stop offset="0.330" stop-color="#f5da82"/><stop offset="0.403" stop-color="#f3d267"/><stop offset="0.484" stop-color="#f1cc53"/><stop offset="0.571" stop-color="#f1c943"/><stop offset="0.674" stop-color="#f1c835"/><stop offset="0.791" stop-color="#f2c82a"/><stop offset="0.923" stop-color="#f2c91f"/><stop offset="1.000" stop-color="#f3c91d"/></linearGradient><linearGradient id="w28" gradientUnits="userSpaceOnUse" x1="165.4" y1="391.5" x2="256.3" y2="290.5"><stop offset="0.000" stop-color="#ffffff"/><stop offset="0.022" stop-color="#fffffe"/><stop offset="0.044" stop-color="#fffefb"/><stop offset="0.074" stop-color="#fefcf5"/><stop offset="0.110" stop-color="#fdf8e9"/><stop offset="0.155" stop-color="#fcf2d7"/><stop offset="0.206" stop-color="#faeabe"/><stop offset="0.265" stop-color="#f7e0a0"/><stop offset="0.331" stop-color="#f5d680"/><stop offset="0.405" stop-color="#f2cd65"/><stop offset="0.486" stop-color="#f1c750"/><stop offset="0.574" stop-color="#f0c440"/><stop offset="0.677" stop-color="#f0c333"/><stop offset="0.795" stop-color="#f1c329"/><stop offset="0.927" stop-color="#f2c51e"/><stop offset="1.000" stop-color="#f2c51d"/></linearGradient><linearGradient id="w29" gradientUnits="userSpaceOnUse" x1="165.4" y1="391.5" x2="258.5" y2="293.4"><stop offset="0.000" stop-color="#ffffff"/><stop offset="0.022" stop-color="#fffffe"/><stop offset="0.044" stop-color="#fffefb"/><stop offset="0.074" stop-color="#fefbf5"/><stop offset="0.111" stop-color="#fdf7e9"/><stop offset="0.155" stop-color="#fbf1d6"/><stop offset="0.207" stop-color="#f9e8bd"/><stop offset="0.266" stop-color="#f7dd9e"/><stop offset="0.333" stop-color="#f4d27e"/><stop offset="0.407" stop-color="#f2c962"/><stop offset="0.488" stop-color="#f0c24d"/><stop offset="0.577" stop-color="#f0be3e"/><stop offset="0.680" stop-color="#f0be32"/><stop offset="0.799" stop-color="#f1bf28"/><stop offset="0.932" stop-color="#f1c01e"/><stop offset="1.000" stop-color="#f2c11e"/></linearGradient><linearGradient id="w30" gradientUnits="userSpaceOnUse" x1="165.4" y1="391.5" x2="260.6" y2="296.3"><stop offset="0.000" stop-color="#ffffff"/><stop offset="0.022" stop-color="#fffffe"/><stop offset="0.045" stop-color="#fffefb"/><stop offset="0.074" stop-color="#fefbf5"/><stop offset="0.111" stop-color="#fdf7e8"/><stop offset="0.156" stop-color="#fbefd5"/><stop offset="0.208" stop-color="#f9e6bb"/><stop offset="0.267" stop-color="#f6da9c"/><stop offset="0.334" stop-color="#f4ce7c"/><stop offset="0.408" stop-color="#f1c460"/><stop offset="0.490" stop-color="#f0bc4a"/><stop offset="0.579" stop-color="#efb93b"/><stop offset="0.683" stop-color="#efb930"/><stop offset="0.802" stop-color="#f0ba27"/><stop offset="0.935" stop-color="#f1bc1e"/><stop offset="1.000" stop-color="#f1bc1e"/></linearGradient><linearGradient id="w31" gradientUnits="userSpaceOnUse" x1="165.4" y1="391.5" x2="262.8" y2="299.1"><stop offset="0.000" stop-color="#ffffff"/><stop offset="0.022" stop-color="#fffffe"/><stop offset="0.045" stop-color="#fffdfb"/><stop offset="0.074" stop-color="#fefbf4"/><stop offset="0.112" stop-color="#fdf6e8"/><stop offset="0.156" stop-color="#fbeed4"/><stop offset="0.208" stop-color="#f9e3ba"/><stop offset="0.268" stop-color="#f6d79b"/><stop offset="0.335" stop-color="#f3ca7a"/><stop offset="0.410" stop-color="#f1bf5d"/><stop offset="0.491" stop-color="#efb747"/><stop offset="0.581" stop-color="#efb439"/><stop offset="0.685" stop-color="#efb42e"/><stop offset="0.804" stop-color="#f0b626"/><stop offset="0.938" stop-color="#f0b81e"/><stop offset="1.000" stop-color="#f1b81e"/></linearGradient><linearGradient id="w32" gradientUnits="userSpaceOnUse" x1="165.4" y1="391.5" x2="264.9" y2="301.9"><stop offset="0.000" stop-color="#ffffff"/><stop offset="0.022" stop-color="#fffffe"/><stop offset="0.045" stop-color="#fffdfb"/><stop offset="0.075" stop-color="#fefaf4"/><stop offset="0.112" stop-color="#fdf5e7"/><stop offset="0.157" stop-color="#fbecd4"/><stop offset="0.209" stop-color="#f8e1b9"/><stop offset="0.269" stop-color="#f5d499"/><stop offset="0.336" stop-color="#f2c678"/><stop offset="0.411" stop-color="#f0ba5a"/><stop offset="0.493" stop-color="#eeb144"/><stop offset="0.582" stop-color="#eeae36"/><stop offset="0.687" stop-color="#eeaf2d"/><stop offset="0.806" stop-color="#efb125"/><stop offset="0.941" stop-color="#f0b41e"/><stop offset="1.000" stop-color="#f0b41e"/></linearGradient><linearGradient id="w33" gradientUnits="userSpaceOnUse" x1="165.4" y1="391.5" x2="267.1" y2="304.7"><stop offset="0.000" stop-color="#ffffff"/><stop offset="0.022" stop-color="#fffffe"/><stop offset="0.045" stop-color="#fffdfb"/><stop offset="0.075" stop-color="#fefaf4"/><stop offset="0.112" stop-color="#fdf4e7"/><stop offset="0.157" stop-color="#fbebd3"/><stop offset="0.209" stop-color="#f8dfb8"/><stop offset="0.269" stop-color="#f5d097"/><stop offset="0.337" stop-color="#f2c175"/><stop offset="0.411" stop-color="#efb558"/><stop offset="0.494" stop-color="#eeac41"/><stop offset="0.583" stop-color="#eda934"/><stop offset="0.688" stop-color="#eeaa2b"/><stop offset="0.808" stop-color="#eead24"/><stop offset="0.942" stop-color="#efb01e"/><stop offset="1.000" stop-color="#efb01e"/></linearGradient><linearGradient id="w34" gradientUnits="userSpaceOnUse" x1="165.4" y1="391.5" x2="269.2" y2="307.5"><stop offset="0.000" stop-color="#ffffff"/><stop offset="0.022" stop-color="#fffffe"/><stop offset="0.045" stop-color="#fffdfb"/><stop offset="0.075" stop-color="#fefaf4"/><stop offset="0.112" stop-color="#fdf3e7"/><stop offset="0.157" stop-color="#faead3"/><stop offset="0.210" stop-color="#f8ddb8"/><stop offset="0.270" stop-color="#f5cd97"/><stop offset="0.337" stop-color="#f1be75"/><stop offset="0.412" stop-color="#efb057"/><stop offset="0.494" stop-color="#eda740"/><stop offset="0.584" stop-color="#eda432"/><stop offset="0.689" stop-color="#eda62a"/><stop offset="0.809" stop-color="#eea924"/><stop offset="0.943" stop-color="#efad1e"/><stop offset="1.000" stop-color="#efad1e"/></linearGradient><linearGradient id="w35" gradientUnits="userSpaceOnUse" x1="165.4" y1="391.5" x2="271.3" y2="310.2"><stop offset="0.000" stop-color="#ffffff"/><stop offset="0.022" stop-color="#fffffe"/><stop offset="0.045" stop-color="#fffdfb"/><stop offset="0.075" stop-color="#fefaf4"/><stop offset="0.112" stop-color="#fcf3e8"/><stop offset="0.157" stop-color="#faead4"/><stop offset="0.210" stop-color="#f8ddba"/><stop offset="0.270" stop-color="#f4cd9a"/><stop offset="0.337" stop-color="#f1bd78"/><stop offset="0.412" stop-color="#efaf5a"/><stop offset="0.494" stop-color="#eda542"/><stop offset="0.584" stop-color="#eca234"/><stop offset="0.689" stop-color="#eda32b"/><stop offset="0.809" stop-color="#eda624"/><stop offset="0.944" stop-color="#eea91e"/><stop offset="1.000" stop-color="#eea91e"/></linearGradient><linearGradient id="w36" gradientUnits="userSpaceOnUse" x1="165.4" y1="391.5" x2="273.4" y2="313.0"><stop offset="0.000" stop-color="#ffffff"/><stop offset="0.022" stop-color="#fffffe"/><stop offset="0.045" stop-color="#fffdfb"/><stop offset="0.075" stop-color="#fefaf5"/><stop offset="0.112" stop-color="#fcf3e9"/><stop offset="0.157" stop-color="#faead6"/><stop offset="0.210" stop-color="#f7ddbc"/><stop offset="0.270" stop-color="#f4cd9d"/><stop offset="0.337" stop-color="#f1bd7c"/><stop offset="0.412" stop-color="#eeae5d"/><stop offset="0.494" stop-color="#eda445"/><stop offset="0.584" stop-color="#eca036"/><stop offset="0.689" stop-color="#eca12c"/><stop offset="0.809" stop-color="#eda325"/><stop offset="0.944" stop-color="#eda51e"/><stop offset="1.000" stop-color="#eda51e"/></linearGradient><linearGradient id="w37" gradientUnits="userSpaceOnUse" x1="165.4" y1="391.5" x2="275.5" y2="315.8"><stop offset="0.000" stop-color="#ffffff"/><stop offset="0.022" stop-color="#fffffe"/><stop offset="0.045" stop-color="#fffdfb"/><stop offset="0.075" stop-color="#fefaf5"/><stop offset="0.112" stop-color="#fcf3e9"/><stop offset="0.157" stop-color="#faead7"/><stop offset="0.210" stop-color="#f7dcbe"/><stop offset="0.269" stop-color="#f4cda0"/><stop offset="0.337" stop-color="#f1bc7f"/><stop offset="0.412" stop-color="#eead60"/><stop offset="0.494" stop-color="#eca347"/><stop offset="0.584" stop-color="#ec9e38"/><stop offset="0.689" stop-color="#ec9e2e"/><stop offset="0.808" stop-color="#eca026"/><stop offset="0.943" stop-color="#eda21e"/><stop offset="1.000" stop-color="#eda21e"/></linearGradient><linearGradient id="w38" gradientUnits="userSpaceOnUse" x1="165.4" y1="391.5" x2="277.6" y2="318.6"><stop offset="0.000" stop-color="#ffffff"/><stop offset="0.022" stop-color="#fffffe"/><stop offset="0.045" stop-color="#fffdfb"/><stop offset="0.075" stop-color="#fefaf5"/><stop offset="0.112" stop-color="#fcf3ea"/><stop offset="0.157" stop-color="#faead8"/><stop offset="0.209" stop-color="#f7dcc1"/><stop offset="0.269" stop-color="#f4cca3"/><stop offset="0.336" stop-color="#f1bc82"/><stop offset="0.411" stop-color="#eead63"/><stop offset="0.493" stop-color="#eca14a"/><stop offset="0.583" stop-color="#eb9c3a"/><stop offset="0.688" stop-color="#eb9b2f"/><stop offset="0.807" stop-color="#ec9c26"/><stop offset="0.942" stop-color="#ec9e1e"/><stop offset="1.000" stop-color="#ec9e1e"/></linearGradient><linearGradient id="w39" gradientUnits="userSpaceOnUse" x1="165.4" y1="391.5" x2="279.7" y2="321.4"><stop offset="0.000" stop-color="#ffffff"/><stop offset="0.022" stop-color="#fffffe"/><stop offset="0.045" stop-color="#fffdfc"/><stop offset="0.075" stop-color="#fefaf6"/><stop offset="0.112" stop-color="#fcf3eb"/><stop offset="0.157" stop-color="#faeada"/><stop offset="0.209" stop-color="#f7dcc3"/><stop offset="0.269" stop-color="#f4cca6"/><stop offset="0.336" stop-color="#f0bb85"/><stop offset="0.410" stop-color="#eeac66"/><stop offset="0.492" stop-color="#eca04c"/><stop offset="0.582" stop-color="#eb9a3c"/><stop offset="0.686" stop-color="#eb9930"/><stop offset="0.806" stop-color="#eb9927"/><stop offset="0.940" stop-color="#eb9a1e"/><stop offset="1.000" stop-color="#eb9a1e"/></linearGradient><linearGradient id="w40" gradientUnits="userSpaceOnUse" x1="165.4" y1="391.5" x2="281.9" y2="324.3"><stop offset="0.000" stop-color="#ffffff"/><stop offset="0.022" stop-color="#fffffe"/><stop offset="0.045" stop-color="#fffdfc"/><stop offset="0.074" stop-color="#fefaf6"/><stop offset="0.112" stop-color="#fcf3ec"/><stop offset="0.156" stop-color="#fae9db"/><stop offset="0.208" stop-color="#f7dcc5"/><stop offset="0.268" stop-color="#f3cca9"/><stop offset="0.335" stop-color="#f0ba88"/><stop offset="0.409" stop-color="#edab69"/><stop offset="0.491" stop-color="#ec9e4f"/><stop offset="0.580" stop-color="#eb983e"/><stop offset="0.684" stop-color="#ea9632"/><stop offset="0.803" stop-color="#ea9628"/><stop offset="0.937" stop-color="#eb971e"/><stop offset="1.000" stop-color="#eb971e"/></linearGradient><linearGradient id="w41" gradientUnits="userSpaceOnUse" x1="165.4" y1="391.5" x2="283.9" y2="327.1"><stop offset="0.000" stop-color="#ffffff"/><stop offset="0.022" stop-color="#fffffe"/><stop offset="0.044" stop-color="#fffdfc"/><stop offset="0.074" stop-color="#fefaf6"/><stop offset="0.111" stop-color="#fcf3ec"/><stop offset="0.156" stop-color="#fae9dc"/><stop offset="0.208" stop-color="#f7dcc7"/><stop offset="0.267" stop-color="#f3ccac"/><stop offset="0.334" stop-color="#f0ba8c"/><stop offset="0.408" stop-color="#edaa6c"/><stop offset="0.489" stop-color="#eb9d52"/><stop offset="0.578" stop-color="#ea9740"/><stop offset="0.682" stop-color="#ea9433"/><stop offset="0.801" stop-color="#ea9329"/><stop offset="0.934" stop-color="#ea931f"/><stop offset="1.000" stop-color="#ea931e"/></linearGradient><linearGradient id="w42" gradientUnits="userSpaceOnUse" x1="165.4" y1="391.5" x2="286.1" y2="330.0"><stop offset="0.000" stop-color="#ffffff"/><stop offset="0.022" stop-color="#fffffe"/><stop offset="0.044" stop-color="#fffdfc"/><stop offset="0.074" stop-color="#fefaf7"/><stop offset="0.111" stop-color="#fcf3ed"/><stop offset="0.155" stop-color="#fae9de"/><stop offset="0.207" stop-color="#f7dcc9"/><stop offset="0.266" stop-color="#f3cbae"/><stop offset="0.332" stop-color="#f0b98f"/><stop offset="0.406" stop-color="#eda96f"/><stop offset="0.487" stop-color="#eb9c54"/><stop offset="0.576" stop-color="#ea9542"/><stop offset="0.679" stop-color="#ea9235"/><stop offset="0.797" stop-color="#e9902a"/><stop offset="0.930" stop-color="#e98f1f"/><stop offset="1.000" stop-color="#e98f1e"/></linearGradient><linearGradient id="w43" gradientUnits="userSpaceOnUse" x1="165.4" y1="391.5" x2="288.2" y2="332.9"><stop offset="0.000" stop-color="#ffffff"/><stop offset="0.022" stop-color="#fffffe"/><stop offset="0.044" stop-color="#fffdfc"/><stop offset="0.074" stop-color="#fefaf7"/><stop offset="0.110" stop-color="#fcf3ee"/><stop offset="0.154" stop-color="#fae9df"/><stop offset="0.206" stop-color="#f7dccb"/><stop offset="0.265" stop-color="#f3cbb1"/><stop offset="0.331" stop-color="#efb992"/><stop offset="0.404" stop-color="#eda873"/><stop offset="0.485" stop-color="#eb9b57"/><stop offset="0.573" stop-color="#ea9344"/><stop offset="0.676" stop-color="#e98f36"/><stop offset="0.794" stop-color="#e98d2b"/><stop offset="0.926" stop-color="#e98c1f"/><stop offset="1.000" stop-color="#e98c1e"/></linearGradient><linearGradient id="w44" gradientUnits="userSpaceOnUse" x1="165.4" y1="391.5" x2="290.3" y2="335.9"><stop offset="0.000" stop-color="#ffffff"/><stop offset="0.022" stop-color="#fffffe"/><stop offset="0.044" stop-color="#fffdfc"/><stop offset="0.073" stop-color="#fefaf7"/><stop offset="0.110" stop-color="#fcf3ee"/><stop offset="0.154" stop-color="#fae9e0"/><stop offset="0.205" stop-color="#f7dccd"/><stop offset="0.263" stop-color="#f3cbb4"/><stop offset="0.329" stop-color="#efb895"/><stop offset="0.402" stop-color="#eca776"/><stop offset="0.483" stop-color="#ea995a"/><stop offset="0.570" stop-color="#e99146"/><stop offset="0.673" stop-color="#e98d38"/><stop offset="0.790" stop-color="#e88a2c"/><stop offset="0.921" stop-color="#e88820"/><stop offset="1.000" stop-color="#e8881e"/></linearGradient><linearGradient id="w45" gradientUnits="userSpaceOnUse" x1="165.4" y1="391.5" x2="292.5" y2="338.8"><stop offset="0.000" stop-color="#ffffff"/><stop offset="0.022" stop-color="#fffffe"/><stop offset="0.044" stop-color="#fffdfc"/><stop offset="0.073" stop-color="#fefaf8"/><stop offset="0.109" stop-color="#fcf3ef"/><stop offset="0.153" stop-color="#fae9e1"/><stop offset="0.203" stop-color="#f6dccf"/><stop offset="0.262" stop-color="#f3cbb6"/><stop offset="0.327" stop-color="#efb898"/><stop offset="0.400" stop-color="#eca679"/><stop offset="0.480" stop-color="#ea985d"/><stop offset="0.567" stop-color="#e98f48"/><stop offset="0.669" stop-color="#e88b3a"/><stop offset="0.785" stop-color="#e8882d"/><stop offset="0.916" stop-color="#e78621"/><stop offset="1.000" stop-color="#e7851e"/></linearGradient><linearGradient id="w46" gradientUnits="userSpaceOnUse" x1="165.4" y1="391.5" x2="294.7" y2="341.9"><stop offset="0.000" stop-color="#ffffff"/><stop offset="0.022" stop-color="#fffefe"/><stop offset="0.043" stop-color="#fffdfc"/><stop offset="0.072" stop-color="#fefaf8"/><stop offset="0.108" stop-color="#fcf3f0"/><stop offset="0.152" stop-color="#fae9e2"/><stop offset="0.202" stop-color="#f6dbd0"/><stop offset="0.260" stop-color="#f2cab9"/><stop offset="0.325" stop-color="#efb89b"/><stop offset="0.397" stop-color="#eca67c"/><stop offset="0.476" stop-color="#ea9760"/><stop offset="0.563" stop-color="#e98e4b"/><stop offset="0.664" stop-color="#e8893c"/><stop offset="0.780" stop-color="#e7862e"/><stop offset="0.910" stop-color="#e78321"/><stop offset="1.000" stop-color="#e7821e"/></linearGradient><linearGradient id="w47" gradientUnits="userSpaceOnUse" x1="165.4" y1="391.5" x2="296.9" y2="344.9"><stop offset="0.000" stop-color="#ffffff"/><stop offset="0.022" stop-color="#fffefe"/><stop offset="0.043" stop-color="#fffdfc"/><stop offset="0.072" stop-color="#fef9f8"/><stop offset="0.108" stop-color="#fcf3ef"/><stop offset="0.151" stop-color="#fae9e2"/><stop offset="0.201" stop-color="#f6dbd0"/><stop offset="0.258" stop-color="#f2c9b8"/><stop offset="0.323" stop-color="#efb69a"/><stop offset="0.394" stop-color="#eba47c"/><stop offset="0.473" stop-color="#e99560"/><stop offset="0.559" stop-color="#e88b4b"/><stop offset="0.659" stop-color="#e7863c"/><stop offset="0.774" stop-color="#e7832f"/><stop offset="0.903" stop-color="#e68022"/><stop offset="1.000" stop-color="#e6801e"/></linearGradient><linearGradient id="w48" gradientUnits="userSpaceOnUse" x1="165.4" y1="391.5" x2="299.3" y2="348.0"><stop offset="0.000" stop-color="#ffffff"/><stop offset="0.021" stop-color="#fffefe"/><stop offset="0.043" stop-color="#fffdfc"/><stop offset="0.071" stop-color="#fef9f8"/><stop offset="0.107" stop-color="#fcf3ef"/><stop offset="0.149" stop-color="#fae8e2"/><stop offset="0.199" stop-color="#f6dacf"/><stop offset="0.256" stop-color="#f2c9b7"/><stop offset="0.320" stop-color="#eeb59a"/><stop offset="0.391" stop-color="#eba27b"/><stop offset="0.469" stop-color="#e99360"/><stop offset="0.554" stop-color="#e8894b"/><stop offset="0.654" stop-color="#e7843c"/><stop offset="0.767" stop-color="#e6802f"/><stop offset="0.895" stop-color="#e67e23"/><stop offset="1.000" stop-color="#e67d1e"/></linearGradient><linearGradient id="w49" gradientUnits="userSpaceOnUse" x1="165.4" y1="391.5" x2="301.5" y2="351.2"><stop offset="0.000" stop-color="#ffffff"/><stop offset="0.021" stop-color="#fffefe"/><stop offset="0.042" stop-color="#fffdfc"/><stop offset="0.070" stop-color="#fef9f8"/><stop offset="0.106" stop-color="#fcf3ef"/><stop offset="0.148" stop-color="#fae8e1"/><stop offset="0.197" stop-color="#f6d9ce"/><stop offset="0.254" stop-color="#f2c8b6"/><stop offset="0.317" stop-color="#eeb499"/><stop offset="0.387" stop-color="#eba17b"/><stop offset="0.465" stop-color="#e89160"/><stop offset="0.549" stop-color="#e7874b"/><stop offset="0.648" stop-color="#e6813c"/><stop offset="0.761" stop-color="#e67e30"/><stop offset="0.887" stop-color="#e57b23"/><stop offset="1.000" stop-color="#e57a1e"/></linearGradient><linearGradient id="w50" gradientUnits="userSpaceOnUse" x1="165.4" y1="391.5" x2="303.8" y2="354.4"><stop offset="0.000" stop-color="#ffffff"/><stop offset="0.021" stop-color="#fffefe"/><stop offset="0.042" stop-color="#fffdfc"/><stop offset="0.070" stop-color="#fef9f8"/><stop offset="0.105" stop-color="#fcf2ef"/><stop offset="0.147" stop-color="#f9e8e1"/><stop offset="0.195" stop-color="#f6d9ce"/><stop offset="0.251" stop-color="#f2c7b6"/><stop offset="0.314" stop-color="#eeb298"/><stop offset="0.384" stop-color="#ea9f7a"/><stop offset="0.461" stop-color="#e88f60"/><stop offset="0.544" stop-color="#e7854b"/><stop offset="0.642" stop-color="#e67f3c"/><stop offset="0.754" stop-color="#e57b30"/><stop offset="0.879" stop-color="#e57824"/><stop offset="1.000" stop-color="#e5771e"/></linearGradient><linearGradient id="w51" gradientUnits="userSpaceOnUse" x1="165.4" y1="391.5" x2="306.3" y2="357.7"><stop offset="0.000" stop-color="#ffffff"/><stop offset="0.021" stop-color="#fffefe"/><stop offset="0.041" stop-color="#fefdfc"/><stop offset="0.069" stop-color="#fef9f7"/><stop offset="0.104" stop-color="#fcf2ee"/><stop offset="0.145" stop-color="#f9e7e0"/><stop offset="0.193" stop-color="#f6d8cd"/><stop offset="0.248" stop-color="#f2c6b5"/><stop offset="0.311" stop-color="#edb197"/><stop offset="0.380" stop-color="#ea9d7a"/><stop offset="0.456" stop-color="#e78e60"/><stop offset="0.538" stop-color="#e6834b"/><stop offset="0.635" stop-color="#e57d3d"/><stop offset="0.745" stop-color="#e47931"/><stop offset="0.870" stop-color="#e47625"/><stop offset="1.000" stop-color="#e4741e"/></linearGradient><linearGradient id="w52" gradientUnits="userSpaceOnUse" x1="165.4" y1="391.5" x2="308.6" y2="361.1"><stop offset="0.000" stop-color="#ffffff"/><stop offset="0.020" stop-color="#fffefe"/><stop offset="0.041" stop-color="#fefdfc"/><stop offset="0.068" stop-color="#fef9f7"/><stop offset="0.102" stop-color="#fcf2ee"/><stop offset="0.143" stop-color="#f9e7e0"/><stop offset="0.191" stop-color="#f6d7cc"/><stop offset="0.246" stop-color="#f1c4b3"/><stop offset="0.307" stop-color="#edaf96"/><stop offset="0.376" stop-color="#e99b79"/><stop offset="0.451" stop-color="#e78b5f"/><stop offset="0.533" stop-color="#e5804b"/><stop offset="0.629" stop-color="#e47a3d"/><stop offset="0.738" stop-color="#e47631"/><stop offset="0.861" stop-color="#e47326"/><stop offset="0.998" stop-color="#e4721e"/><stop offset="1.000" stop-color="#e4721e"/></linearGradient><linearGradient id="w53" gradientUnits="userSpaceOnUse" x1="165.4" y1="391.5" x2="311.1" y2="364.5"><stop offset="0.000" stop-color="#ffffff"/><stop offset="0.020" stop-color="#fffefe"/><stop offset="0.041" stop-color="#fefdfc"/><stop offset="0.068" stop-color="#fef9f7"/><stop offset="0.101" stop-color="#fcf2ee"/><stop offset="0.142" stop-color="#f9e6df"/><stop offset="0.189" stop-color="#f6d6cb"/><stop offset="0.243" stop-color="#f1c3b2"/><stop offset="0.304" stop-color="#edad94"/><stop offset="0.371" stop-color="#e99977"/><stop offset="0.446" stop-color="#e6895e"/><stop offset="0.527" stop-color="#e57e4b"/><stop offset="0.621" stop-color="#e4783d"/><stop offset="0.729" stop-color="#e37432"/><stop offset="0.851" stop-color="#e37126"/><stop offset="0.986" stop-color="#e36f1e"/><stop offset="1.000" stop-color="#e36f1e"/></linearGradient><linearGradient id="w54" gradientUnits="userSpaceOnUse" x1="165.4" y1="391.5" x2="313.6" y2="368.0"><stop offset="0.000" stop-color="#ffffff"/><stop offset="0.020" stop-color="#fffefe"/><stop offset="0.040" stop-color="#fefdfc"/><stop offset="0.067" stop-color="#fef9f7"/><stop offset="0.100" stop-color="#fcf1ed"/><stop offset="0.140" stop-color="#f9e5de"/><stop offset="0.187" stop-color="#f5d5ca"/><stop offset="0.240" stop-color="#f1c2b1"/><stop offset="0.300" stop-color="#ecac93"/><stop offset="0.367" stop-color="#e99776"/><stop offset="0.440" stop-color="#e6875e"/><stop offset="0.520" stop-color="#e47c4b"/><stop offset="0.613" stop-color="#e3753d"/><stop offset="0.720" stop-color="#e37132"/><stop offset="0.840" stop-color="#e36e27"/><stop offset="0.973" stop-color="#e26c1e"/><stop offset="1.000" stop-color="#e26c1e"/></linearGradient><linearGradient id="w55" gradientUnits="userSpaceOnUse" x1="165.4" y1="391.5" x2="316.3" y2="371.6"><stop offset="0.000" stop-color="#ffffff"/><stop offset="0.020" stop-color="#fffefe"/><stop offset="0.039" stop-color="#fefdfc"/><stop offset="0.066" stop-color="#fef9f7"/><stop offset="0.099" stop-color="#fcf1ed"/><stop offset="0.138" stop-color="#f9e5de"/><stop offset="0.184" stop-color="#f5d4c9"/><stop offset="0.236" stop-color="#f1c0af"/><stop offset="0.296" stop-color="#ecaa92"/><stop offset="0.361" stop-color="#e89675"/><stop offset="0.434" stop-color="#e5855d"/><stop offset="0.512" stop-color="#e47a4b"/><stop offset="0.604" stop-color="#e3733e"/><stop offset="0.709" stop-color="#e26f33"/><stop offset="0.828" stop-color="#e26c28"/><stop offset="0.959" stop-color="#e2691e"/><stop offset="1.000" stop-color="#e2691e"/></linearGradient><linearGradient id="w56" gradientUnits="userSpaceOnUse" x1="165.4" y1="391.5" x2="318.8" y2="375.4"><stop offset="0.000" stop-color="#ffffff"/><stop offset="0.019" stop-color="#fffefe"/><stop offset="0.039" stop-color="#fefdfc"/><stop offset="0.065" stop-color="#fef8f7"/><stop offset="0.097" stop-color="#fcf1ed"/><stop offset="0.136" stop-color="#f9e4dd"/><stop offset="0.181" stop-color="#f5d3c8"/><stop offset="0.233" stop-color="#f0bfae"/><stop offset="0.292" stop-color="#eca890"/><stop offset="0.356" stop-color="#e89474"/><stop offset="0.428" stop-color="#e5835c"/><stop offset="0.506" stop-color="#e3774b"/><stop offset="0.596" stop-color="#e2713e"/><stop offset="0.700" stop-color="#e16d33"/><stop offset="0.817" stop-color="#e16929"/><stop offset="0.946" stop-color="#e0661e"/><stop offset="1.000" stop-color="#e0661e"/></linearGradient><linearGradient id="w57" gradientUnits="userSpaceOnUse" x1="165.4" y1="391.5" x2="321.6" y2="379.2"><stop offset="0.000" stop-color="#ffffff"/><stop offset="0.019" stop-color="#fffefe"/><stop offset="0.038" stop-color="#fefdfc"/><stop offset="0.064" stop-color="#fdf8f6"/><stop offset="0.096" stop-color="#fcf0ec"/><stop offset="0.134" stop-color="#f9e4dc"/><stop offset="0.179" stop-color="#f5d2c6"/><stop offset="0.230" stop-color="#f0bdac"/><stop offset="0.287" stop-color="#eba78f"/><stop offset="0.351" stop-color="#e79272"/><stop offset="0.421" stop-color="#e4815b"/><stop offset="0.498" stop-color="#e2754b"/><stop offset="0.587" stop-color="#e16e3e"/><stop offset="0.689" stop-color="#e06a34"/><stop offset="0.804" stop-color="#e0672a"/><stop offset="0.932" stop-color="#df6320"/><stop offset="1.000" stop-color="#df631f"/></linearGradient><linearGradient id="w58" gradientUnits="userSpaceOnUse" x1="165.4" y1="391.5" x2="324.7" y2="383.2"><stop offset="0.000" stop-color="#ffffff"/><stop offset="0.019" stop-color="#fffefe"/><stop offset="0.038" stop-color="#fefcfc"/><stop offset="0.063" stop-color="#fdf8f6"/><stop offset="0.094" stop-color="#fcf0ec"/><stop offset="0.132" stop-color="#f9e3dc"/><stop offset="0.176" stop-color="#f5d1c5"/><stop offset="0.226" stop-color="#f0bcab"/><stop offset="0.282" stop-color="#eba58d"/><stop offset="0.345" stop-color="#e79071"/><stop offset="0.414" stop-color="#e47f5b"/><stop offset="0.489" stop-color="#e2734b"/><stop offset="0.577" stop-color="#e16c3f"/><stop offset="0.677" stop-color="#e06835"/><stop offset="0.790" stop-color="#df642b"/><stop offset="0.915" stop-color="#de6121"/><stop offset="1.000" stop-color="#de601f"/></linearGradient><linearGradient id="w59" gradientUnits="userSpaceOnUse" x1="165.4" y1="391.5" x2="327.5" y2="387.3"><stop offset="0.000" stop-color="#ffffff"/><stop offset="0.019" stop-color="#fffefe"/><stop offset="0.037" stop-color="#fefcfc"/><stop offset="0.062" stop-color="#fdf8f6"/><stop offset="0.093" stop-color="#fcf0ec"/><stop offset="0.130" stop-color="#f9e3db"/><stop offset="0.173" stop-color="#f5d1c5"/><stop offset="0.222" stop-color="#f0bbaa"/><stop offset="0.278" stop-color="#eba48c"/><stop offset="0.339" stop-color="#e68e70"/><stop offset="0.407" stop-color="#e37d5a"/><stop offset="0.481" stop-color="#e1714b"/><stop offset="0.567" stop-color="#e06a3f"/><stop offset="0.666" stop-color="#df6636"/><stop offset="0.777" stop-color="#de622d"/><stop offset="0.901" stop-color="#dd5e23"/><stop offset="1.000" stop-color="#dd5d1f"/></linearGradient><linearGradient id="w60" gradientUnits="userSpaceOnUse" x1="165.4" y1="391.5" x2="330.6" y2="391.5"><stop offset="0.000" stop-color="#ffffff"/><stop offset="0.018" stop-color="#fffefe"/><stop offset="0.036" stop-color="#fefcfc"/><stop offset="0.061" stop-color="#fdf8f6"/><stop offset="0.091" stop-color="#fcf0ec"/><stop offset="0.127" stop-color="#f9e2dc"/><stop offset="0.170" stop-color="#f5d0c5"/><stop offset="0.218" stop-color="#f0baaa"/><stop offset="0.272" stop-color="#eba38d"/><stop offset="0.333" stop-color="#e68d71"/><stop offset="0.400" stop-color="#e37c5b"/><stop offset="0.472" stop-color="#e1704c"/><stop offset="0.557" stop-color="#e06841"/><stop offset="0.654" stop-color="#de6437"/><stop offset="0.763" stop-color="#dd602e"/><stop offset="0.884" stop-color="#dc5c25"/><stop offset="1.000" stop-color="#dc5a1f"/></linearGradient><linearGradient id="w61" gradientUnits="userSpaceOnUse" x1="165.4" y1="391.5" x2="333.7" y2="395.9"><stop offset="0.000" stop-color="#ffffff"/><stop offset="0.018" stop-color="#fffefe"/><stop offset="0.036" stop-color="#fefcfc"/><stop offset="0.059" stop-color="#fdf8f6"/><stop offset="0.089" stop-color="#fcefec"/><stop offset="0.125" stop-color="#f9e2dc"/><stop offset="0.166" stop-color="#f5d0c5"/><stop offset="0.214" stop-color="#f0baab"/><stop offset="0.267" stop-color="#eba28e"/><stop offset="0.327" stop-color="#e68c72"/><stop offset="0.392" stop-color="#e37a5d"/><stop offset="0.463" stop-color="#e16e4d"/><stop offset="0.546" stop-color="#df6743"/><stop offset="0.642" stop-color="#de6239"/><stop offset="0.748" stop-color="#dd5e30"/><stop offset="0.867" stop-color="#dc5a26"/><stop offset="1.000" stop-color="#db571f"/></linearGradient><linearGradient id="w62" gradientUnits="userSpaceOnUse" x1="165.4" y1="391.5" x2="337.1" y2="400.5"><stop offset="0.000" stop-color="#ffffff"/><stop offset="0.017" stop-color="#fffefe"/><stop offset="0.035" stop-color="#fefcfc"/><stop offset="0.058" stop-color="#fdf8f6"/><stop offset="0.087" stop-color="#fcefec"/><stop offset="0.122" stop-color="#f9e2dc"/><stop offset="0.163" stop-color="#f5cfc6"/><stop offset="0.209" stop-color="#f0b9ab"/><stop offset="0.262" stop-color="#eba18e"/><stop offset="0.320" stop-color="#e68b73"/><stop offset="0.384" stop-color="#e3795e"/><stop offset="0.454" stop-color="#e06d4f"/><stop offset="0.535" stop-color="#df6544"/><stop offset="0.628" stop-color="#dd603b"/><stop offset="0.733" stop-color="#dc5c32"/><stop offset="0.849" stop-color="#db5828"/><stop offset="0.989" stop-color="#da5420"/><stop offset="1.000" stop-color="#da5420"/></linearGradient><linearGradient id="w63" gradientUnits="userSpaceOnUse" x1="165.4" y1="391.5" x2="340.5" y2="405.3"><stop offset="0.000" stop-color="#ffffff"/><stop offset="0.017" stop-color="#fffefe"/><stop offset="0.034" stop-color="#fefcfc"/><stop offset="0.057" stop-color="#fdf8f6"/><stop offset="0.085" stop-color="#fcefec"/><stop offset="0.120" stop-color="#f9e2dc"/><stop offset="0.159" stop-color="#f5cfc6"/><stop offset="0.205" stop-color="#f0b8ab"/><stop offset="0.256" stop-color="#eba18f"/><stop offset="0.313" stop-color="#e68a74"/><stop offset="0.376" stop-color="#e2785f"/><stop offset="0.444" stop-color="#e06c50"/><stop offset="0.524" stop-color="#df6446"/><stop offset="0.615" stop-color="#dd5f3d"/><stop offset="0.717" stop-color="#dc5a34"/><stop offset="0.831" stop-color="#da562a"/><stop offset="0.968" stop-color="#d85120"/><stop offset="1.000" stop-color="#d85120"/></linearGradient><linearGradient id="w64" gradientUnits="userSpaceOnUse" x1="165.4" y1="391.5" x2="344.2" y2="410.3"><stop offset="0.000" stop-color="#ffffff"/><stop offset="0.017" stop-color="#fffefe"/><stop offset="0.033" stop-color="#fefcfc"/><stop offset="0.056" stop-color="#fdf8f6"/><stop offset="0.083" stop-color="#fcefec"/><stop offset="0.117" stop-color="#f9e1dc"/><stop offset="0.156" stop-color="#f5cec6"/><stop offset="0.200" stop-color="#f0b8ac"/><stop offset="0.250" stop-color="#eba090"/><stop offset="0.306" stop-color="#e68975"/><stop offset="0.367" stop-color="#e27760"/><stop offset="0.434" stop-color="#e06b52"/><stop offset="0.512" stop-color="#de6248"/><stop offset="0.601" stop-color="#dd5d3e"/><stop offset="0.701" stop-color="#db5935"/><stop offset="0.812" stop-color="#da542b"/><stop offset="0.946" stop-color="#d84f20"/><stop offset="1.000" stop-color="#d84f1f"/></linearGradient><linearGradient id="w65" gradientUnits="userSpaceOnUse" x1="165.4" y1="391.5" x2="347.8" y2="415.5"><stop offset="0.000" stop-color="#ffffff"/><stop offset="0.016" stop-color="#fffefe"/><stop offset="0.033" stop-color="#fefcfc"/><stop offset="0.054" stop-color="#fdf8f6"/><stop offset="0.082" stop-color="#fcefec"/><stop offset="0.114" stop-color="#f9e1dc"/><stop offset="0.152" stop-color="#f5cec7"/><stop offset="0.196" stop-color="#f0b7ac"/><stop offset="0.245" stop-color="#eb9f91"/><stop offset="0.299" stop-color="#e68876"/><stop offset="0.359" stop-color="#e27661"/><stop offset="0.424" stop-color="#e06a53"/><stop offset="0.500" stop-color="#de6149"/><stop offset="0.587" stop-color="#dd5c40"/><stop offset="0.685" stop-color="#db5836"/><stop offset="0.794" stop-color="#da532c"/><stop offset="0.924" stop-color="#d84e20"/><stop offset="1.000" stop-color="#d84d1d"/></linearGradient><linearGradient id="w66" gradientUnits="userSpaceOnUse" x1="165.4" y1="391.5" x2="351.6" y2="421.0"><stop offset="0.000" stop-color="#ffffff"/><stop offset="0.016" stop-color="#fffefe"/><stop offset="0.032" stop-color="#fefcfc"/><stop offset="0.053" stop-color="#fdf8f7"/><stop offset="0.080" stop-color="#fcefec"/><stop offset="0.111" stop-color="#f9e1dd"/><stop offset="0.149" stop-color="#f5cec7"/><stop offset="0.191" stop-color="#f0b7ad"/><stop offset="0.239" stop-color="#eb9f92"/><stop offset="0.292" stop-color="#e68877"/><stop offset="0.350" stop-color="#e27563"/><stop offset="0.414" stop-color="#e06854"/><stop offset="0.488" stop-color="#de604b"/><stop offset="0.573" stop-color="#dc5a42"/><stop offset="0.668" stop-color="#db5638"/><stop offset="0.774" stop-color="#da522d"/><stop offset="0.902" stop-color="#d94d20"/><stop offset="1.000" stop-color="#d84b1b"/></linearGradient><linearGradient id="w67" gradientUnits="userSpaceOnUse" x1="165.4" y1="391.5" x2="355.9" y2="426.8"><stop offset="0.000" stop-color="#ffffff"/><stop offset="0.015" stop-color="#fffefe"/><stop offset="0.031" stop-color="#fefcfc"/><stop offset="0.052" stop-color="#fdf7f7"/><stop offset="0.077" stop-color="#fcefed"/><stop offset="0.108" stop-color="#f9e1dd"/><stop offset="0.145" stop-color="#f5cdc7"/><stop offset="0.186" stop-color="#f0b6ad"/><stop offset="0.232" stop-color="#eb9e92"/><stop offset="0.284" stop-color="#e68778"/><stop offset="0.341" stop-color="#e27464"/><stop offset="0.403" stop-color="#df6756"/><stop offset="0.475" stop-color="#de5f4c"/><stop offset="0.558" stop-color="#dc5944"/><stop offset="0.650" stop-color="#db553a"/><stop offset="0.754" stop-color="#da512f"/><stop offset="0.878" stop-color="#d94c21"/><stop offset="1.000" stop-color="#d84919"/></linearGradient><linearGradient id="w68" gradientUnits="userSpaceOnUse" x1="165.4" y1="391.5" x2="355.8" y2="432.0"><stop offset="0.000" stop-color="#ffffff"/><stop offset="0.015" stop-color="#fffefe"/><stop offset="0.031" stop-color="#fefcfc"/><stop offset="0.051" stop-color="#fdf7f7"/><stop offset="0.077" stop-color="#fceeed"/><stop offset="0.108" stop-color="#f9e0dd"/><stop offset="0.144" stop-color="#f5cdc7"/><stop offset="0.185" stop-color="#f0b5ae"/><stop offset="0.231" stop-color="#eb9d93"/><stop offset="0.283" stop-color="#e68679"/><stop offset="0.339" stop-color="#e27365"/><stop offset="0.401" stop-color="#df6657"/><stop offset="0.473" stop-color="#dd5d4d"/><stop offset="0.555" stop-color="#dc5746"/><stop offset="0.647" stop-color="#db543c"/><stop offset="0.750" stop-color="#da5031"/><stop offset="0.873" stop-color="#d94b24"/><stop offset="1.000" stop-color="#d8481b"/></linearGradient><linearGradient id="w69" gradientUnits="userSpaceOnUse" x1="165.4" y1="391.5" x2="349.8" y2="435.8"><stop offset="0.000" stop-color="#ffffff"/><stop offset="0.016" stop-color="#fffefe"/><stop offset="0.032" stop-color="#fefcfc"/><stop offset="0.053" stop-color="#fdf7f7"/><stop offset="0.079" stop-color="#fceeed"/><stop offset="0.111" stop-color="#f9e0dd"/><stop offset="0.148" stop-color="#f4ccc8"/><stop offset="0.190" stop-color="#f0b4ae"/><stop offset="0.237" stop-color="#ea9c94"/><stop offset="0.290" stop-color="#e5847a"/><stop offset="0.348" stop-color="#e17166"/><stop offset="0.411" stop-color="#df6458"/><stop offset="0.485" stop-color="#dd5b4f"/><stop offset="0.570" stop-color="#db5647"/><stop offset="0.664" stop-color="#db523d"/><stop offset="0.770" stop-color="#da4f32"/><stop offset="0.896" stop-color="#d94a26"/><stop offset="1.000" stop-color="#d8481f"/></linearGradient><linearGradient id="w70" gradientUnits="userSpaceOnUse" x1="165.4" y1="391.5" x2="344.2" y2="439.4"><stop offset="0.000" stop-color="#ffffff"/><stop offset="0.016" stop-color="#fffefe"/><stop offset="0.032" stop-color="#fefcfc"/><stop offset="0.054" stop-color="#fdf7f7"/><stop offset="0.081" stop-color="#fbeeed"/><stop offset="0.113" stop-color="#f8dfde"/><stop offset="0.151" stop-color="#f4cbc8"/><stop offset="0.195" stop-color="#efb3af"/><stop offset="0.243" stop-color="#ea9a95"/><stop offset="0.297" stop-color="#e5827b"/><stop offset="0.357" stop-color="#e16f67"/><stop offset="0.421" stop-color="#de625a"/><stop offset="0.497" stop-color="#dc5a51"/><stop offset="0.584" stop-color="#db5549"/><stop offset="0.681" stop-color="#da513f"/><stop offset="0.789" stop-color="#d94e34"/><stop offset="0.919" stop-color="#d84928"/><stop offset="1.000" stop-color="#d84824"/></linearGradient><linearGradient id="w71" gradientUnits="userSpaceOnUse" x1="165.4" y1="391.5" x2="338.6" y2="442.8"><stop offset="0.000" stop-color="#ffffff"/><stop offset="0.017" stop-color="#fffefe"/><stop offset="0.033" stop-color="#fefcfc"/><stop offset="0.055" stop-color="#fdf7f7"/><stop offset="0.083" stop-color="#fbeeed"/><stop offset="0.116" stop-color="#f8dfde"/><stop offset="0.155" stop-color="#f4cbc9"/><stop offset="0.199" stop-color="#efb2b0"/><stop offset="0.249" stop-color="#ea9895"/><stop offset="0.304" stop-color="#e4807d"/><stop offset="0.365" stop-color="#e06d69"/><stop offset="0.432" stop-color="#de605c"/><stop offset="0.509" stop-color="#dc5853"/><stop offset="0.598" stop-color="#db534a"/><stop offset="0.698" stop-color="#da5040"/><stop offset="0.808" stop-color="#d94d36"/><stop offset="0.941" stop-color="#d8482a"/><stop offset="1.000" stop-color="#d84828"/></linearGradient><linearGradient id="w72" gradientUnits="userSpaceOnUse" x1="165.4" y1="391.5" x2="333.4" y2="446.1"><stop offset="0.000" stop-color="#ffffff"/><stop offset="0.017" stop-color="#fffefe"/><stop offset="0.034" stop-color="#fefcfc"/><stop offset="0.057" stop-color="#fdf7f7"/><stop offset="0.085" stop-color="#fbeded"/><stop offset="0.119" stop-color="#f8dede"/><stop offset="0.158" stop-color="#f4cac9"/><stop offset="0.204" stop-color="#efb1b1"/><stop offset="0.255" stop-color="#e99796"/><stop offset="0.311" stop-color="#e47e7e"/><stop offset="0.374" stop-color="#e06b6b"/><stop offset="0.442" stop-color="#dd5f5e"/><stop offset="0.521" stop-color="#db5756"/><stop offset="0.611" stop-color="#da524c"/><stop offset="0.713" stop-color="#da4f42"/><stop offset="0.826" stop-color="#d94c38"/><stop offset="0.962" stop-color="#d8482d"/><stop offset="1.000" stop-color="#d8482d"/></linearGradient><linearGradient id="w73" gradientUnits="userSpaceOnUse" x1="165.4" y1="391.5" x2="328.6" y2="449.3"><stop offset="0.000" stop-color="#ffffff"/><stop offset="0.017" stop-color="#fffefe"/><stop offset="0.035" stop-color="#fefcfc"/><stop offset="0.058" stop-color="#fdf7f7"/><stop offset="0.087" stop-color="#fbedee"/><stop offset="0.121" stop-color="#f8dedf"/><stop offset="0.162" stop-color="#f4c9ca"/><stop offset="0.208" stop-color="#eeb0b1"/><stop offset="0.260" stop-color="#e99597"/><stop offset="0.318" stop-color="#e37d7f"/><stop offset="0.381" stop-color="#df6a6c"/><stop offset="0.451" stop-color="#dd5d60"/><stop offset="0.531" stop-color="#db5558"/><stop offset="0.624" stop-color="#da514e"/><stop offset="0.728" stop-color="#d94e45"/><stop offset="0.843" stop-color="#d94b3b"/><stop offset="0.982" stop-color="#d84831"/><stop offset="1.000" stop-color="#d84831"/></linearGradient><linearGradient id="w74" gradientUnits="userSpaceOnUse" x1="165.4" y1="391.5" x2="323.8" y2="452.3"><stop offset="0.000" stop-color="#ffffff"/><stop offset="0.018" stop-color="#fffefe"/><stop offset="0.035" stop-color="#fefcfc"/><stop offset="0.059" stop-color="#fdf7f7"/><stop offset="0.088" stop-color="#fbedee"/><stop offset="0.124" stop-color="#f8dddf"/><stop offset="0.165" stop-color="#f3c8ca"/><stop offset="0.212" stop-color="#eeaeb2"/><stop offset="0.265" stop-color="#e89498"/><stop offset="0.324" stop-color="#e37b80"/><stop offset="0.389" stop-color="#df686e"/><stop offset="0.460" stop-color="#dc5b62"/><stop offset="0.542" stop-color="#da545a"/><stop offset="0.636" stop-color="#da5050"/><stop offset="0.742" stop-color="#d94d47"/><stop offset="0.860" stop-color="#d84a3d"/><stop offset="1.000" stop-color="#d84835"/></linearGradient><linearGradient id="w75" gradientUnits="userSpaceOnUse" x1="165.4" y1="391.5" x2="319.1" y2="455.2"><stop offset="0.000" stop-color="#ffffff"/><stop offset="0.018" stop-color="#fffefe"/><stop offset="0.036" stop-color="#fefcfc"/><stop offset="0.060" stop-color="#fdf6f7"/><stop offset="0.090" stop-color="#fbecee"/><stop offset="0.126" stop-color="#f8dddf"/><stop offset="0.168" stop-color="#f3c7ca"/><stop offset="0.216" stop-color="#eeadb2"/><stop offset="0.270" stop-color="#e89298"/><stop offset="0.331" stop-color="#e27981"/><stop offset="0.397" stop-color="#de666f"/><stop offset="0.469" stop-color="#dc5a64"/><stop offset="0.553" stop-color="#da535c"/><stop offset="0.649" stop-color="#d94f52"/><stop offset="0.757" stop-color="#d94c49"/><stop offset="0.877" stop-color="#d84a40"/><stop offset="1.000" stop-color="#d8483a"/></linearGradient><linearGradient id="w76" gradientUnits="userSpaceOnUse" x1="165.4" y1="391.5" x2="314.8" y2="458.0"><stop offset="0.000" stop-color="#ffffff"/><stop offset="0.018" stop-color="#fffefe"/><stop offset="0.037" stop-color="#fefcfc"/><stop offset="0.061" stop-color="#fdf6f7"/><stop offset="0.092" stop-color="#fbecee"/><stop offset="0.128" stop-color="#f7dcdf"/><stop offset="0.171" stop-color="#f3c6cb"/><stop offset="0.220" stop-color="#edabb2"/><stop offset="0.275" stop-color="#e79099"/><stop offset="0.336" stop-color="#e27782"/><stop offset="0.404" stop-color="#de6471"/><stop offset="0.477" stop-color="#db5866"/><stop offset="0.563" stop-color="#da525e"/><stop offset="0.661" stop-color="#d94e55"/><stop offset="0.771" stop-color="#d94c4c"/><stop offset="0.893" stop-color="#d84943"/><stop offset="1.000" stop-color="#d8483e"/></linearGradient><linearGradient id="w77" gradientUnits="userSpaceOnUse" x1="165.4" y1="391.5" x2="310.5" y2="460.7"><stop offset="0.000" stop-color="#ffffff"/><stop offset="0.019" stop-color="#fffefe"/><stop offset="0.037" stop-color="#fefcfc"/><stop offset="0.062" stop-color="#fdf6f7"/><stop offset="0.093" stop-color="#fbecee"/><stop offset="0.131" stop-color="#f7dbdf"/><stop offset="0.174" stop-color="#f2c5cb"/><stop offset="0.224" stop-color="#edaab3"/><stop offset="0.280" stop-color="#e78e9a"/><stop offset="0.342" stop-color="#e17583"/><stop offset="0.411" stop-color="#dd6273"/><stop offset="0.485" stop-color="#db5768"/><stop offset="0.572" stop-color="#d95160"/><stop offset="0.672" stop-color="#d94d57"/><stop offset="0.784" stop-color="#d84b4f"/><stop offset="0.908" stop-color="#d84946"/><stop offset="1.000" stop-color="#d84843"/></linearGradient><linearGradient id="w78" gradientUnits="userSpaceOnUse" x1="165.4" y1="391.5" x2="306.4" y2="463.4"><stop offset="0.000" stop-color="#ffffff"/><stop offset="0.019" stop-color="#fffefe"/><stop offset="0.038" stop-color="#fefcfc"/><stop offset="0.063" stop-color="#fdf6f7"/><stop offset="0.095" stop-color="#fbebee"/><stop offset="0.133" stop-color="#f7dadf"/><stop offset="0.177" stop-color="#f2c3cb"/><stop offset="0.227" stop-color="#eca8b3"/><stop offset="0.284" stop-color="#e68c9a"/><stop offset="0.347" stop-color="#e17384"/><stop offset="0.417" stop-color="#dd6174"/><stop offset="0.493" stop-color="#da566b"/><stop offset="0.581" stop-color="#d94f62"/><stop offset="0.682" stop-color="#d94c5a"/><stop offset="0.796" stop-color="#d84a52"/><stop offset="0.922" stop-color="#d84849"/><stop offset="1.000" stop-color="#d84847"/></linearGradient><linearGradient id="w79" gradientUnits="userSpaceOnUse" x1="165.4" y1="391.5" x2="302.5" y2="465.9"><stop offset="0.000" stop-color="#ffffff"/><stop offset="0.019" stop-color="#fffefe"/><stop offset="0.038" stop-color="#fefcfc"/><stop offset="0.064" stop-color="#fdf6f7"/><stop offset="0.096" stop-color="#fbebee"/><stop offset="0.135" stop-color="#f7dadf"/><stop offset="0.180" stop-color="#f2c2cb"/><stop offset="0.231" stop-color="#eca6b3"/><stop offset="0.288" stop-color="#e68a9b"/><stop offset="0.353" stop-color="#e07186"/><stop offset="0.423" stop-color="#dc5f76"/><stop offset="0.500" stop-color="#da546d"/><stop offset="0.590" stop-color="#d94e64"/><stop offset="0.692" stop-color="#d84c5c"/><stop offset="0.808" stop-color="#d84a55"/><stop offset="0.936" stop-color="#d8484c"/><stop offset="1.000" stop-color="#d8484c"/></linearGradient><linearGradient id="w80" gradientUnits="userSpaceOnUse" x1="165.4" y1="391.5" x2="298.6" y2="468.4"><stop offset="0.000" stop-color="#ffffff"/><stop offset="0.020" stop-color="#fffefe"/><stop offset="0.039" stop-color="#fefcfc"/><stop offset="0.065" stop-color="#fdf6f7"/><stop offset="0.098" stop-color="#fbeaee"/><stop offset="0.137" stop-color="#f7d9df"/><stop offset="0.182" stop-color="#f2c1cb"/><stop offset="0.234" stop-color="#eba5b4"/><stop offset="0.293" stop-color="#e5889c"/><stop offset="0.358" stop-color="#e06f87"/><stop offset="0.429" stop-color="#dc5d78"/><stop offset="0.507" stop-color="#da536f"/><stop offset="0.598" stop-color="#d94e67"/><stop offset="0.702" stop-color="#d84b5f"/><stop offset="0.819" stop-color="#d84958"/><stop offset="0.949" stop-color="#d84850"/><stop offset="1.000" stop-color="#d84850"/></linearGradient><linearGradient id="w81" gradientUnits="userSpaceOnUse" x1="165.4" y1="391.5" x2="294.9" y2="470.9"><stop offset="0.000" stop-color="#ffffff"/><stop offset="0.020" stop-color="#fffefe"/><stop offset="0.040" stop-color="#fefbfc"/><stop offset="0.066" stop-color="#fdf5f7"/><stop offset="0.099" stop-color="#faeaee"/><stop offset="0.138" stop-color="#f7d8df"/><stop offset="0.184" stop-color="#f1c0cb"/><stop offset="0.237" stop-color="#eba3b4"/><stop offset="0.296" stop-color="#e5869c"/><stop offset="0.362" stop-color="#df6d88"/><stop offset="0.435" stop-color="#db5c7a"/><stop offset="0.514" stop-color="#d95272"/><stop offset="0.606" stop-color="#d84d69"/><stop offset="0.711" stop-color="#d84a62"/><stop offset="0.830" stop-color="#d8485b"/><stop offset="0.961" stop-color="#d84754"/><stop offset="1.000" stop-color="#d84754"/></linearGradient><linearGradient id="w82" gradientUnits="userSpaceOnUse" x1="165.4" y1="391.5" x2="291.1" y2="473.1"><stop offset="0.000" stop-color="#ffffff"/><stop offset="0.020" stop-color="#fffefe"/><stop offset="0.040" stop-color="#fefbfc"/><stop offset="0.067" stop-color="#fdf5f7"/><stop offset="0.100" stop-color="#faeaee"/><stop offset="0.140" stop-color="#f6d8df"/><stop offset="0.187" stop-color="#f1bfcc"/><stop offset="0.240" stop-color="#eba2b5"/><stop offset="0.300" stop-color="#e4859d"/><stop offset="0.367" stop-color="#df6c89"/><stop offset="0.440" stop-color="#db5b7c"/><stop offset="0.520" stop-color="#d95174"/><stop offset="0.614" stop-color="#d84c6b"/><stop offset="0.721" stop-color="#d84964"/><stop offset="0.841" stop-color="#d8485e"/><stop offset="0.974" stop-color="#d74658"/><stop offset="1.000" stop-color="#d74658"/></linearGradient><linearGradient id="w83" gradientUnits="userSpaceOnUse" x1="165.4" y1="391.5" x2="287.5" y2="475.4"><stop offset="0.000" stop-color="#ffffff"/><stop offset="0.020" stop-color="#fffefe"/><stop offset="0.040" stop-color="#fefbfc"/><stop offset="0.067" stop-color="#fdf5f7"/><stop offset="0.101" stop-color="#fae9ee"/><stop offset="0.142" stop-color="#f6d7e0"/><stop offset="0.189" stop-color="#f1bfcc"/><stop offset="0.243" stop-color="#eba1b5"/><stop offset="0.304" stop-color="#e4849e"/><stop offset="0.371" stop-color="#df6b8b"/><stop offset="0.445" stop-color="#db5a7d"/><stop offset="0.526" stop-color="#d95175"/><stop offset="0.621" stop-color="#d84b6d"/><stop offset="0.729" stop-color="#d74867"/><stop offset="0.850" stop-color="#d74761"/><stop offset="0.985" stop-color="#d7455c"/><stop offset="1.000" stop-color="#d7455c"/></linearGradient><linearGradient id="w84" gradientUnits="userSpaceOnUse" x1="165.4" y1="391.5" x2="284.0" y2="477.7"><stop offset="0.000" stop-color="#ffffff"/><stop offset="0.020" stop-color="#fffefe"/><stop offset="0.041" stop-color="#fefbfc"/><stop offset="0.068" stop-color="#fdf5f7"/><stop offset="0.102" stop-color="#fae9ee"/><stop offset="0.143" stop-color="#f6d7e0"/><stop offset="0.191" stop-color="#f1becd"/><stop offset="0.246" stop-color="#eaa1b6"/><stop offset="0.307" stop-color="#e484a0"/><stop offset="0.375" stop-color="#df6b8d"/><stop offset="0.450" stop-color="#db5a7f"/><stop offset="0.532" stop-color="#d95077"/><stop offset="0.628" stop-color="#d84a70"/><stop offset="0.737" stop-color="#d7486a"/><stop offset="0.859" stop-color="#d74664"/><stop offset="0.996" stop-color="#d74560"/><stop offset="1.000" stop-color="#d74560"/></linearGradient><linearGradient id="w85" gradientUnits="userSpaceOnUse" x1="165.4" y1="391.5" x2="280.5" y2="479.8"><stop offset="0.000" stop-color="#ffffff"/><stop offset="0.021" stop-color="#fffefe"/><stop offset="0.041" stop-color="#fefbfc"/><stop offset="0.069" stop-color="#fdf5f7"/><stop offset="0.103" stop-color="#fae9ef"/><stop offset="0.145" stop-color="#f6d7e1"/><stop offset="0.193" stop-color="#f1bece"/><stop offset="0.248" stop-color="#eaa1b7"/><stop offset="0.310" stop-color="#e483a1"/><stop offset="0.379" stop-color="#de6b8e"/><stop offset="0.455" stop-color="#db5981"/><stop offset="0.538" stop-color="#d94f79"/><stop offset="0.634" stop-color="#d74a72"/><stop offset="0.744" stop-color="#d7476c"/><stop offset="0.868" stop-color="#d74567"/><stop offset="1.000" stop-color="#d74464"/></linearGradient><linearGradient id="w86" gradientUnits="userSpaceOnUse" x1="165.4" y1="391.5" x2="277.2" y2="482.0"><stop offset="0.000" stop-color="#ffffff"/><stop offset="0.021" stop-color="#fffefe"/><stop offset="0.042" stop-color="#fefbfc"/><stop offset="0.070" stop-color="#fdf5f8"/><stop offset="0.104" stop-color="#fae9ef"/><stop offset="0.146" stop-color="#f6d7e1"/><stop offset="0.195" stop-color="#f1bece"/><stop offset="0.250" stop-color="#eaa1b9"/><stop offset="0.313" stop-color="#e483a3"/><stop offset="0.382" stop-color="#de6a90"/><stop offset="0.459" stop-color="#db5983"/><stop offset="0.542" stop-color="#d84f7b"/><stop offset="0.639" stop-color="#d74974"/><stop offset="0.751" stop-color="#d7466f"/><stop offset="0.876" stop-color="#d6446b"/><stop offset="1.000" stop-color="#d64368"/></linearGradient><linearGradient id="w87" gradientUnits="userSpaceOnUse" x1="165.4" y1="391.5" x2="273.8" y2="484.1"><stop offset="0.000" stop-color="#ffffff"/><stop offset="0.021" stop-color="#fffefe"/><stop offset="0.042" stop-color="#fefbfc"/><stop offset="0.070" stop-color="#fdf5f8"/><stop offset="0.105" stop-color="#fae9ef"/><stop offset="0.147" stop-color="#f6d7e2"/><stop offset="0.196" stop-color="#f1becf"/><stop offset="0.252" stop-color="#eaa0ba"/><stop offset="0.316" stop-color="#e483a4"/><stop offset="0.386" stop-color="#de6a92"/><stop offset="0.463" stop-color="#da5885"/><stop offset="0.547" stop-color="#d84e7d"/><stop offset="0.645" stop-color="#d74877"/><stop offset="0.757" stop-color="#d64572"/><stop offset="0.884" stop-color="#d6436e"/><stop offset="1.000" stop-color="#d6426c"/></linearGradient><linearGradient id="w88" gradientUnits="userSpaceOnUse" x1="165.4" y1="391.5" x2="270.6" y2="486.2"><stop offset="0.000" stop-color="#ffffff"/><stop offset="0.021" stop-color="#fffefe"/><stop offset="0.042" stop-color="#fefbfc"/><stop offset="0.071" stop-color="#fdf5f8"/><stop offset="0.106" stop-color="#fae9ef"/><stop offset="0.148" stop-color="#f6d7e2"/><stop offset="0.198" stop-color="#f1bed0"/><stop offset="0.254" stop-color="#eaa0bb"/><stop offset="0.318" stop-color="#e482a6"/><stop offset="0.389" stop-color="#de6994"/><stop offset="0.466" stop-color="#da5887"/><stop offset="0.551" stop-color="#d84e7f"/><stop offset="0.650" stop-color="#d7487a"/><stop offset="0.763" stop-color="#d64575"/><stop offset="0.890" stop-color="#d64272"/><stop offset="1.000" stop-color="#d64170"/></linearGradient><linearGradient id="w89" gradientUnits="userSpaceOnUse" x1="165.4" y1="391.5" x2="267.4" y2="488.3"><stop offset="0.000" stop-color="#ffffff"/><stop offset="0.021" stop-color="#fffefe"/><stop offset="0.043" stop-color="#fefbfc"/><stop offset="0.071" stop-color="#fdf5f8"/><stop offset="0.107" stop-color="#fae9f0"/><stop offset="0.149" stop-color="#f6d7e3"/><stop offset="0.199" stop-color="#f1bdd1"/><stop offset="0.256" stop-color="#eaa0bc"/><stop offset="0.320" stop-color="#e382a7"/><stop offset="0.391" stop-color="#de6996"/><stop offset="0.470" stop-color="#da5889"/><stop offset="0.555" stop-color="#d84d82"/><stop offset="0.655" stop-color="#d7477c"/><stop offset="0.768" stop-color="#d64478"/><stop offset="0.896" stop-color="#d64175"/><stop offset="1.000" stop-color="#d54074"/></linearGradient><linearGradient id="w90" gradientUnits="userSpaceOnUse" x1="165.4" y1="391.5" x2="264.1" y2="490.2"><stop offset="0.000" stop-color="#ffffff"/><stop offset="0.021" stop-color="#fffefe"/><stop offset="0.043" stop-color="#fefbfc"/><stop offset="0.072" stop-color="#fdf5f8"/><stop offset="0.107" stop-color="#fae9f0"/><stop offset="0.150" stop-color="#f6d6e3"/><stop offset="0.201" stop-color="#f0bdd2"/><stop offset="0.258" stop-color="#eaa0bd"/><stop offset="0.322" stop-color="#e382a9"/><stop offset="0.394" stop-color="#de6997"/><stop offset="0.473" stop-color="#da578b"/><stop offset="0.559" stop-color="#d84d84"/><stop offset="0.659" stop-color="#d6467f"/><stop offset="0.774" stop-color="#d6437c"/><stop offset="0.903" stop-color="#d54079"/><stop offset="1.000" stop-color="#d53f78"/></linearGradient><linearGradient id="w91" gradientUnits="userSpaceOnUse" x1="165.4" y1="391.5" x2="260.9" y2="492.2"><stop offset="0.000" stop-color="#ffffff"/><stop offset="0.022" stop-color="#fffefe"/><stop offset="0.043" stop-color="#fefbfc"/><stop offset="0.072" stop-color="#fdf5f8"/><stop offset="0.108" stop-color="#fae9f0"/><stop offset="0.151" stop-color="#f6d6e4"/><stop offset="0.202" stop-color="#f0bdd2"/><stop offset="0.259" stop-color="#ea9fbe"/><stop offset="0.324" stop-color="#e381aa"/><stop offset="0.396" stop-color="#de6899"/><stop offset="0.476" stop-color="#da578d"/><stop offset="0.562" stop-color="#d84c86"/><stop offset="0.663" stop-color="#d64682"/><stop offset="0.778" stop-color="#d5427f"/><stop offset="0.908" stop-color="#d53f7d"/><stop offset="1.000" stop-color="#d53f7c"/></linearGradient><linearGradient id="w92" gradientUnits="userSpaceOnUse" x1="165.4" y1="391.5" x2="257.8" y2="494.1"><stop offset="0.000" stop-color="#ffffff"/><stop offset="0.022" stop-color="#fffefe"/><stop offset="0.043" stop-color="#fefbfd"/><stop offset="0.072" stop-color="#fdf5f8"/><stop offset="0.109" stop-color="#fae9f0"/><stop offset="0.152" stop-color="#f6d6e4"/><stop offset="0.203" stop-color="#f0bdd3"/><stop offset="0.261" stop-color="#ea9fc0"/><stop offset="0.326" stop-color="#e381ac"/><stop offset="0.398" stop-color="#de689b"/><stop offset="0.478" stop-color="#da568f"/><stop offset="0.565" stop-color="#d74c88"/><stop offset="0.666" stop-color="#d64584"/><stop offset="0.782" stop-color="#d54182"/><stop offset="0.912" stop-color="#d53e80"/><stop offset="1.000" stop-color="#d53e80"/></linearGradient><linearGradient id="w93" gradientUnits="userSpaceOnUse" x1="165.4" y1="391.5" x2="254.7" y2="496.1"><stop offset="0.000" stop-color="#ffffff"/><stop offset="0.022" stop-color="#fffefe"/><stop offset="0.044" stop-color="#fefbfd"/><stop offset="0.073" stop-color="#fdf5f8"/><stop offset="0.109" stop-color="#fae9f1"/><stop offset="0.153" stop-color="#f6d6e5"/><stop offset="0.204" stop-color="#f0bdd4"/><stop offset="0.262" stop-color="#ea9fc1"/><stop offset="0.327" stop-color="#e381ad"/><stop offset="0.400" stop-color="#dd679d"/><stop offset="0.480" stop-color="#da5691"/><stop offset="0.567" stop-color="#d74b8b"/><stop offset="0.669" stop-color="#d64487"/><stop offset="0.785" stop-color="#d54185"/><stop offset="0.916" stop-color="#d43d84"/><stop offset="1.000" stop-color="#d43d84"/></linearGradient><linearGradient id="w94" gradientUnits="userSpaceOnUse" x1="165.4" y1="391.5" x2="251.7" y2="498.0"><stop offset="0.000" stop-color="#ffffff"/><stop offset="0.022" stop-color="#fffefe"/><stop offset="0.044" stop-color="#fefbfd"/><stop offset="0.073" stop-color="#fdf5f9"/><stop offset="0.109" stop-color="#fae9f1"/><stop offset="0.153" stop-color="#f6d6e5"/><stop offset="0.204" stop-color="#f0bdd5"/><stop offset="0.263" stop-color="#ea9fc2"/><stop offset="0.328" stop-color="#e381af"/><stop offset="0.401" stop-color="#dd679e"/><stop offset="0.482" stop-color="#d95693"/><stop offset="0.569" stop-color="#d74b8d"/><stop offset="0.671" stop-color="#d6448a"/><stop offset="0.788" stop-color="#d54089"/><stop offset="0.919" stop-color="#d43d88"/><stop offset="1.000" stop-color="#d43c88"/></linearGradient><linearGradient id="w95" gradientUnits="userSpaceOnUse" x1="165.4" y1="391.5" x2="248.6" y2="499.9"><stop offset="0.000" stop-color="#ffffff"/><stop offset="0.022" stop-color="#fffefe"/><stop offset="0.044" stop-color="#fefbfd"/><stop offset="0.073" stop-color="#fdf5f9"/><stop offset="0.110" stop-color="#fae9f1"/><stop offset="0.154" stop-color="#f6d6e5"/><stop offset="0.205" stop-color="#f0bdd5"/><stop offset="0.263" stop-color="#e99fc3"/><stop offset="0.329" stop-color="#e381b0"/><stop offset="0.403" stop-color="#dd68a0"/><stop offset="0.483" stop-color="#d95695"/><stop offset="0.571" stop-color="#d74b8e"/><stop offset="0.673" stop-color="#d5448b"/><stop offset="0.790" stop-color="#d4418a"/><stop offset="0.922" stop-color="#d33d89"/><stop offset="1.000" stop-color="#d33d89"/></linearGradient><linearGradient id="w96" gradientUnits="userSpaceOnUse" x1="165.4" y1="391.5" x2="245.5" y2="501.8"><stop offset="0.000" stop-color="#ffffff"/><stop offset="0.022" stop-color="#fffefe"/><stop offset="0.044" stop-color="#fefbfd"/><stop offset="0.073" stop-color="#fdf5f9"/><stop offset="0.110" stop-color="#fae9f1"/><stop offset="0.154" stop-color="#f6d6e6"/><stop offset="0.205" stop-color="#f0bdd6"/><stop offset="0.264" stop-color="#e99fc4"/><stop offset="0.330" stop-color="#e381b1"/><stop offset="0.404" stop-color="#dd68a1"/><stop offset="0.484" stop-color="#d95697"/><stop offset="0.572" stop-color="#d64b90"/><stop offset="0.675" stop-color="#d5458d"/><stop offset="0.792" stop-color="#d3418b"/><stop offset="0.924" stop-color="#d23e8a"/><stop offset="1.000" stop-color="#d23e8a"/></linearGradient><linearGradient id="w97" gradientUnits="userSpaceOnUse" x1="165.4" y1="391.5" x2="242.5" y2="503.6"><stop offset="0.000" stop-color="#ffffff"/><stop offset="0.022" stop-color="#fffefe"/><stop offset="0.044" stop-color="#fefbfd"/><stop offset="0.074" stop-color="#fdf5f9"/><stop offset="0.110" stop-color="#fae9f2"/><stop offset="0.154" stop-color="#f6d6e6"/><stop offset="0.206" stop-color="#f0bdd7"/><stop offset="0.265" stop-color="#e99fc5"/><stop offset="0.331" stop-color="#e281b2"/><stop offset="0.404" stop-color="#dd68a3"/><stop offset="0.485" stop-color="#d95698"/><stop offset="0.573" stop-color="#d64c92"/><stop offset="0.676" stop-color="#d4458e"/><stop offset="0.794" stop-color="#d3428c"/><stop offset="0.926" stop-color="#d23f8b"/><stop offset="1.000" stop-color="#d13f8b"/></linearGradient><linearGradient id="w98" gradientUnits="userSpaceOnUse" x1="165.4" y1="391.5" x2="239.4" y2="505.5"><stop offset="0.000" stop-color="#ffffff"/><stop offset="0.022" stop-color="#fffefe"/><stop offset="0.044" stop-color="#fefbfd"/><stop offset="0.074" stop-color="#fdf5f9"/><stop offset="0.110" stop-color="#fae9f2"/><stop offset="0.154" stop-color="#f6d6e7"/><stop offset="0.206" stop-color="#f0bdd7"/><stop offset="0.265" stop-color="#e99fc6"/><stop offset="0.331" stop-color="#e281b4"/><stop offset="0.405" stop-color="#dc68a4"/><stop offset="0.486" stop-color="#d8579a"/><stop offset="0.574" stop-color="#d64c93"/><stop offset="0.677" stop-color="#d44690"/><stop offset="0.795" stop-color="#d2428d"/><stop offset="0.927" stop-color="#d1408c"/><stop offset="1.000" stop-color="#d13f8b"/></linearGradient><linearGradient id="w99" gradientUnits="userSpaceOnUse" x1="165.4" y1="391.5" x2="236.4" y2="507.3"><stop offset="0.000" stop-color="#ffffff"/><stop offset="0.022" stop-color="#fffefe"/><stop offset="0.044" stop-color="#fefbfd"/><stop offset="0.074" stop-color="#fdf5f9"/><stop offset="0.110" stop-color="#fae9f2"/><stop offset="0.155" stop-color="#f6d6e7"/><stop offset="0.206" stop-color="#f0bdd8"/><stop offset="0.265" stop-color="#e99fc7"/><stop offset="0.331" stop-color="#e282b5"/><stop offset="0.405" stop-color="#dc68a6"/><stop offset="0.486" stop-color="#d8579c"/><stop offset="0.574" stop-color="#d54c95"/><stop offset="0.677" stop-color="#d34691"/><stop offset="0.795" stop-color="#d1438f"/><stop offset="0.927" stop-color="#d0418c"/><stop offset="1.000" stop-color="#d0408c"/></linearGradient><linearGradient id="w100" gradientUnits="userSpaceOnUse" x1="165.4" y1="391.5" x2="233.3" y2="509.2"><stop offset="0.000" stop-color="#ffffff"/><stop offset="0.022" stop-color="#fffefe"/><stop offset="0.044" stop-color="#fefbfd"/><stop offset="0.074" stop-color="#fdf5f9"/><stop offset="0.110" stop-color="#fae9f2"/><stop offset="0.155" stop-color="#f6d6e7"/><stop offset="0.206" stop-color="#f0bdd9"/><stop offset="0.265" stop-color="#e9a0c7"/><stop offset="0.331" stop-color="#e282b6"/><stop offset="0.405" stop-color="#dc69a8"/><stop offset="0.486" stop-color="#d8579d"/><stop offset="0.574" stop-color="#d54d97"/><stop offset="0.677" stop-color="#d34793"/><stop offset="0.795" stop-color="#d14490"/><stop offset="0.927" stop-color="#cf418d"/><stop offset="1.000" stop-color="#cf418d"/></linearGradient><linearGradient id="w101" gradientUnits="userSpaceOnUse" x1="165.4" y1="391.5" x2="230.3" y2="511.0"><stop offset="0.000" stop-color="#ffffff"/><stop offset="0.022" stop-color="#fffefe"/><stop offset="0.044" stop-color="#fefbfd"/><stop offset="0.074" stop-color="#fdf5f9"/><stop offset="0.110" stop-color="#fae9f2"/><stop offset="0.154" stop-color="#f6d6e8"/><stop offset="0.206" stop-color="#f0bdd9"/><stop offset="0.265" stop-color="#e9a0c8"/><stop offset="0.331" stop-color="#e282b7"/><stop offset="0.404" stop-color="#dc69a9"/><stop offset="0.485" stop-color="#d8579f"/><stop offset="0.574" stop-color="#d54d98"/><stop offset="0.676" stop-color="#d24794"/><stop offset="0.794" stop-color="#d04491"/><stop offset="0.926" stop-color="#ce428e"/><stop offset="1.000" stop-color="#ce428e"/></linearGradient><linearGradient id="w102" gradientUnits="userSpaceOnUse" x1="165.4" y1="391.5" x2="227.2" y2="512.9"><stop offset="0.000" stop-color="#ffffff"/><stop offset="0.022" stop-color="#fffefe"/><stop offset="0.044" stop-color="#fefbfd"/><stop offset="0.073" stop-color="#fdf5f9"/><stop offset="0.110" stop-color="#fae9f3"/><stop offset="0.154" stop-color="#f5d7e8"/><stop offset="0.206" stop-color="#f0bdda"/><stop offset="0.264" stop-color="#e9a0c9"/><stop offset="0.330" stop-color="#e282b9"/><stop offset="0.404" stop-color="#dc69ab"/><stop offset="0.485" stop-color="#d857a1"/><stop offset="0.573" stop-color="#d54d9a"/><stop offset="0.675" stop-color="#d24895"/><stop offset="0.793" stop-color="#d04592"/><stop offset="0.925" stop-color="#cd438f"/><stop offset="1.000" stop-color="#cd438f"/></linearGradient><linearGradient id="w103" gradientUnits="userSpaceOnUse" x1="165.4" y1="391.5" x2="224.2" y2="514.7"><stop offset="0.000" stop-color="#ffffff"/><stop offset="0.022" stop-color="#fffefe"/><stop offset="0.044" stop-color="#fefbfd"/><stop offset="0.073" stop-color="#fdf5f9"/><stop offset="0.110" stop-color="#fae9f3"/><stop offset="0.154" stop-color="#f5d7e8"/><stop offset="0.205" stop-color="#efbeda"/><stop offset="0.264" stop-color="#e8a0ca"/><stop offset="0.330" stop-color="#e183b9"/><stop offset="0.403" stop-color="#db6aab"/><stop offset="0.483" stop-color="#d758a1"/><stop offset="0.571" stop-color="#d44e9b"/><stop offset="0.674" stop-color="#d14896"/><stop offset="0.791" stop-color="#cf4693"/><stop offset="0.923" stop-color="#cd4490"/><stop offset="1.000" stop-color="#cc4490"/></linearGradient><linearGradient id="w104" gradientUnits="userSpaceOnUse" x1="165.4" y1="391.5" x2="221.1" y2="516.6"><stop offset="0.000" stop-color="#ffffff"/><stop offset="0.022" stop-color="#fffefe"/><stop offset="0.044" stop-color="#fefbfd"/><stop offset="0.073" stop-color="#fdf5f9"/><stop offset="0.110" stop-color="#fae9f3"/><stop offset="0.153" stop-color="#f5d7e9"/><stop offset="0.204" stop-color="#efbedb"/><stop offset="0.263" stop-color="#e8a1ca"/><stop offset="0.329" stop-color="#e083ba"/><stop offset="0.402" stop-color="#da6aac"/><stop offset="0.482" stop-color="#d659a2"/><stop offset="0.570" stop-color="#d34f9c"/><stop offset="0.672" stop-color="#d04997"/><stop offset="0.789" stop-color="#ce4794"/><stop offset="0.920" stop-color="#cc4591"/><stop offset="1.000" stop-color="#cb4591"/></linearGradient><linearGradient id="w105" gradientUnits="userSpaceOnUse" x1="165.4" y1="391.5" x2="218.0" y2="518.4"><stop offset="0.000" stop-color="#ffffff"/><stop offset="0.022" stop-color="#fffefe"/><stop offset="0.044" stop-color="#fefbfd"/><stop offset="0.073" stop-color="#fcf5f9"/><stop offset="0.109" stop-color="#f9e9f3"/><stop offset="0.153" stop-color="#f5d7e9"/><stop offset="0.204" stop-color="#eebedb"/><stop offset="0.262" stop-color="#e7a1cb"/><stop offset="0.328" stop-color="#df84ba"/><stop offset="0.400" stop-color="#d96bac"/><stop offset="0.481" stop-color="#d559a3"/><stop offset="0.568" stop-color="#d24f9c"/><stop offset="0.670" stop-color="#cf4a98"/><stop offset="0.786" stop-color="#cd4795"/><stop offset="0.917" stop-color="#cb4692"/><stop offset="1.000" stop-color="#cb4591"/></linearGradient><linearGradient id="w106" gradientUnits="userSpaceOnUse" x1="165.4" y1="391.5" x2="214.8" y2="520.3"><stop offset="0.000" stop-color="#ffffff"/><stop offset="0.022" stop-color="#fffefe"/><stop offset="0.044" stop-color="#fefbfd"/><stop offset="0.073" stop-color="#fcf5f9"/><stop offset="0.109" stop-color="#f9e9f3"/><stop offset="0.152" stop-color="#f5d7e9"/><stop offset="0.203" stop-color="#eebedb"/><stop offset="0.261" stop-color="#e6a1cb"/><stop offset="0.326" stop-color="#df84bb"/><stop offset="0.399" stop-color="#d86bad"/><stop offset="0.479" stop-color="#d45aa3"/><stop offset="0.566" stop-color="#d1509d"/><stop offset="0.667" stop-color="#ce4b99"/><stop offset="0.783" stop-color="#cc4896"/><stop offset="0.914" stop-color="#ca4793"/><stop offset="1.000" stop-color="#ca4692"/></linearGradient><linearGradient id="w107" gradientUnits="userSpaceOnUse" x1="165.4" y1="391.5" x2="211.7" y2="522.1"><stop offset="0.000" stop-color="#ffffff"/><stop offset="0.022" stop-color="#fffefe"/><stop offset="0.043" stop-color="#fefbfd"/><stop offset="0.072" stop-color="#fcf5fa"/><stop offset="0.108" stop-color="#f9eaf3"/><stop offset="0.152" stop-color="#f4d7e9"/><stop offset="0.202" stop-color="#eebfdb"/><stop offset="0.260" stop-color="#e6a2cb"/><stop offset="0.325" stop-color="#de84bb"/><stop offset="0.397" stop-color="#d76cad"/><stop offset="0.476" stop-color="#d35ba4"/><stop offset="0.563" stop-color="#d0519e"/><stop offset="0.664" stop-color="#cd4c99"/><stop offset="0.779" stop-color="#cb4997"/><stop offset="0.909" stop-color="#c94894"/><stop offset="1.000" stop-color="#c94793"/></linearGradient><linearGradient id="w108" gradientUnits="userSpaceOnUse" x1="165.4" y1="391.5" x2="208.5" y2="524.0"><stop offset="0.000" stop-color="#ffffff"/><stop offset="0.022" stop-color="#fffefe"/><stop offset="0.043" stop-color="#fefbfd"/><stop offset="0.072" stop-color="#fcf5fa"/><stop offset="0.108" stop-color="#f9eaf3"/><stop offset="0.151" stop-color="#f4d7e9"/><stop offset="0.201" stop-color="#edbfdc"/><stop offset="0.258" stop-color="#e5a2cc"/><stop offset="0.323" stop-color="#dd85bc"/><stop offset="0.395" stop-color="#d76cae"/><stop offset="0.474" stop-color="#d25ba5"/><stop offset="0.560" stop-color="#cf529f"/><stop offset="0.660" stop-color="#cc4c9a"/><stop offset="0.775" stop-color="#ca4a97"/><stop offset="0.904" stop-color="#c94895"/><stop offset="1.000" stop-color="#c84894"/></linearGradient><linearGradient id="w109" gradientUnits="userSpaceOnUse" x1="165.4" y1="391.5" x2="205.2" y2="525.9"><stop offset="0.000" stop-color="#ffffff"/><stop offset="0.021" stop-color="#fffeff"/><stop offset="0.043" stop-color="#fefbfd"/><stop offset="0.071" stop-color="#fcf5fa"/><stop offset="0.107" stop-color="#f9eaf3"/><stop offset="0.150" stop-color="#f4d8e9"/><stop offset="0.200" stop-color="#edbfdc"/><stop offset="0.257" stop-color="#e5a2cc"/><stop offset="0.321" stop-color="#dd85bc"/><stop offset="0.392" stop-color="#d66daf"/><stop offset="0.471" stop-color="#d15ca5"/><stop offset="0.556" stop-color="#ce529f"/><stop offset="0.656" stop-color="#cb4d9b"/><stop offset="0.770" stop-color="#c94b98"/><stop offset="0.899" stop-color="#c84996"/><stop offset="1.000" stop-color="#c74995"/></linearGradient><linearGradient id="w110" gradientUnits="userSpaceOnUse" x1="165.4" y1="391.5" x2="202.0" y2="527.9"><stop offset="0.000" stop-color="#ffffff"/><stop offset="0.021" stop-color="#fffeff"/><stop offset="0.042" stop-color="#fefbfd"/><stop offset="0.071" stop-color="#fcf5fa"/><stop offset="0.106" stop-color="#f9eaf3"/><stop offset="0.149" stop-color="#f4d8e9"/><stop offset="0.198" stop-color="#edbfdc"/><stop offset="0.255" stop-color="#e4a3cc"/><stop offset="0.319" stop-color="#dc86bd"/><stop offset="0.389" stop-color="#d56eaf"/><stop offset="0.467" stop-color="#d05da6"/><stop offset="0.552" stop-color="#cd53a0"/><stop offset="0.651" stop-color="#ca4e9c"/><stop offset="0.765" stop-color="#c94c99"/><stop offset="0.892" stop-color="#c74a97"/><stop offset="1.000" stop-color="#c64a96"/></linearGradient><linearGradient id="w111" gradientUnits="userSpaceOnUse" x1="165.4" y1="391.5" x2="198.6" y2="529.8"><stop offset="0.000" stop-color="#ffffff"/><stop offset="0.021" stop-color="#fffefe"/><stop offset="0.042" stop-color="#fefbfd"/><stop offset="0.070" stop-color="#fcf5fa"/><stop offset="0.105" stop-color="#f9e9f3"/><stop offset="0.148" stop-color="#f3d7e9"/><stop offset="0.197" stop-color="#ecbfdc"/><stop offset="0.253" stop-color="#e3a2cc"/><stop offset="0.316" stop-color="#db85bc"/><stop offset="0.387" stop-color="#d46daf"/><stop offset="0.464" stop-color="#cf5da6"/><stop offset="0.548" stop-color="#cc53a1"/><stop offset="0.647" stop-color="#c94f9d"/><stop offset="0.759" stop-color="#c84c9a"/><stop offset="0.886" stop-color="#c64b98"/><stop offset="1.000" stop-color="#c54b97"/></linearGradient><linearGradient id="w112" gradientUnits="userSpaceOnUse" x1="165.4" y1="391.5" x2="195.2" y2="531.8"><stop offset="0.000" stop-color="#ffffff"/><stop offset="0.021" stop-color="#fffefe"/><stop offset="0.042" stop-color="#fefbfd"/><stop offset="0.070" stop-color="#fcf5fa"/><stop offset="0.105" stop-color="#f8e9f3"/><stop offset="0.146" stop-color="#f3d7e9"/><stop offset="0.195" stop-color="#ebbedc"/><stop offset="0.251" stop-color="#e2a1cc"/><stop offset="0.314" stop-color="#da84bc"/><stop offset="0.384" stop-color="#d26daf"/><stop offset="0.460" stop-color="#ce5da6"/><stop offset="0.544" stop-color="#cb54a1"/><stop offset="0.642" stop-color="#c84f9e"/><stop offset="0.753" stop-color="#c74d9b"/><stop offset="0.879" stop-color="#c54c99"/><stop offset="1.000" stop-color="#c54b97"/></linearGradient><linearGradient id="w113" gradientUnits="userSpaceOnUse" x1="165.4" y1="391.5" x2="191.8" y2="533.8"><stop offset="0.000" stop-color="#ffffff"/><stop offset="0.021" stop-color="#fffefe"/><stop offset="0.041" stop-color="#fefbfd"/><stop offset="0.069" stop-color="#fcf5f9"/><stop offset="0.104" stop-color="#f8e9f3"/><stop offset="0.145" stop-color="#f2d6e9"/><stop offset="0.193" stop-color="#eabddb"/><stop offset="0.249" stop-color="#e1a0cb"/><stop offset="0.311" stop-color="#d984bc"/><stop offset="0.380" stop-color="#d16caf"/><stop offset="0.456" stop-color="#cc5da7"/><stop offset="0.539" stop-color="#ca54a2"/><stop offset="0.636" stop-color="#c7509e"/><stop offset="0.746" stop-color="#c64e9c"/><stop offset="0.870" stop-color="#c44d9a"/><stop offset="1.000" stop-color="#c34c99"/></linearGradient><linearGradient id="w114" gradientUnits="userSpaceOnUse" x1="165.4" y1="391.5" x2="188.3" y2="535.9"><stop offset="0.000" stop-color="#ffffff"/><stop offset="0.021" stop-color="#fffefe"/><stop offset="0.041" stop-color="#fefbfd"/><stop offset="0.068" stop-color="#fcf5f9"/><stop offset="0.103" stop-color="#f8e9f3"/><stop offset="0.144" stop-color="#f2d6e9"/><stop offset="0.191" stop-color="#e9bddb"/><stop offset="0.246" stop-color="#e0a0cc"/><stop offset="0.308" stop-color="#d684bd"/><stop offset="0.376" stop-color="#cf6db0"/><stop offset="0.451" stop-color="#ca5da8"/><stop offset="0.533" stop-color="#c755a3"/><stop offset="0.629" stop-color="#c451a0"/><stop offset="0.739" stop-color="#c34f9e"/><stop offset="0.862" stop-color="#c14e9d"/><stop offset="0.998" stop-color="#c04e9b"/><stop offset="1.000" stop-color="#c04e9b"/></linearGradient><linearGradient id="w115" gradientUnits="userSpaceOnUse" x1="165.4" y1="391.5" x2="184.7" y2="538.0"><stop offset="0.000" stop-color="#ffffff"/><stop offset="0.020" stop-color="#fffefe"/><stop offset="0.041" stop-color="#fefbfd"/><stop offset="0.068" stop-color="#fbf5fa"/><stop offset="0.101" stop-color="#f7e9f3"/><stop offset="0.142" stop-color="#f1d6e9"/><stop offset="0.189" stop-color="#e8bedc"/><stop offset="0.244" stop-color="#dea1cd"/><stop offset="0.304" stop-color="#d485be"/><stop offset="0.372" stop-color="#cc6eb2"/><stop offset="0.447" stop-color="#c65ea9"/><stop offset="0.528" stop-color="#c355a5"/><stop offset="0.622" stop-color="#c152a2"/><stop offset="0.731" stop-color="#bf50a1"/><stop offset="0.853" stop-color="#be509f"/><stop offset="0.988" stop-color="#bd4f9e"/><stop offset="1.000" stop-color="#bd4f9e"/></linearGradient><linearGradient id="w116" gradientUnits="userSpaceOnUse" x1="165.4" y1="391.5" x2="181.0" y2="540.1"><stop offset="0.000" stop-color="#ffffff"/><stop offset="0.020" stop-color="#fffefe"/><stop offset="0.040" stop-color="#fefbfd"/><stop offset="0.067" stop-color="#fbf5fa"/><stop offset="0.100" stop-color="#f7e9f3"/><stop offset="0.141" stop-color="#f0d7ea"/><stop offset="0.187" stop-color="#e6bedd"/><stop offset="0.241" stop-color="#dca2ce"/><stop offset="0.301" stop-color="#d186bf"/><stop offset="0.368" stop-color="#c96fb3"/><stop offset="0.442" stop-color="#c35fab"/><stop offset="0.522" stop-color="#bf56a7"/><stop offset="0.616" stop-color="#be53a4"/><stop offset="0.723" stop-color="#bc52a3"/><stop offset="0.843" stop-color="#bb51a2"/><stop offset="0.977" stop-color="#ba50a1"/><stop offset="1.000" stop-color="#ba50a1"/></linearGradient><linearGradient id="w117" gradientUnits="userSpaceOnUse" x1="165.4" y1="391.5" x2="177.3" y2="542.3"><stop offset="0.000" stop-color="#ffffff"/><stop offset="0.020" stop-color="#fffeff"/><stop offset="0.040" stop-color="#fdfbfd"/><stop offset="0.066" stop-color="#fbf5fa"/><stop offset="0.099" stop-color="#f6e9f3"/><stop offset="0.139" stop-color="#efd7ea"/><stop offset="0.185" stop-color="#e5bedd"/><stop offset="0.238" stop-color="#daa3cf"/><stop offset="0.298" stop-color="#cf87c0"/><stop offset="0.364" stop-color="#c670b5"/><stop offset="0.436" stop-color="#bf60ad"/><stop offset="0.516" stop-color="#bc57a9"/><stop offset="0.608" stop-color="#ba54a6"/><stop offset="0.714" stop-color="#b953a5"/><stop offset="0.833" stop-color="#b852a4"/><stop offset="0.965" stop-color="#b752a3"/><stop offset="1.000" stop-color="#b752a3"/></linearGradient><linearGradient id="w118" gradientUnits="userSpaceOnUse" x1="165.4" y1="391.5" x2="173.4" y2="544.6"><stop offset="0.000" stop-color="#ffffff"/><stop offset="0.020" stop-color="#fffeff"/><stop offset="0.039" stop-color="#fdfbfd"/><stop offset="0.065" stop-color="#fbf5fa"/><stop offset="0.098" stop-color="#f6e9f4"/><stop offset="0.137" stop-color="#eed7ea"/><stop offset="0.183" stop-color="#e3bfde"/><stop offset="0.235" stop-color="#d8a4d0"/><stop offset="0.294" stop-color="#cc88c2"/><stop offset="0.359" stop-color="#c372b6"/><stop offset="0.431" stop-color="#bc62af"/><stop offset="0.509" stop-color="#b858aa"/><stop offset="0.600" stop-color="#b755a8"/><stop offset="0.705" stop-color="#b654a7"/><stop offset="0.822" stop-color="#b553a7"/><stop offset="0.952" stop-color="#b453a6"/><stop offset="1.000" stop-color="#b453a6"/></linearGradient><linearGradient id="w119" gradientUnits="userSpaceOnUse" x1="165.4" y1="391.5" x2="169.5" y2="546.7"><stop offset="0.000" stop-color="#ffffff"/><stop offset="0.019" stop-color="#fffeff"/><stop offset="0.039" stop-color="#fdfbfd"/><stop offset="0.064" stop-color="#faf5fa"/><stop offset="0.097" stop-color="#f5e9f4"/><stop offset="0.135" stop-color="#edd7ea"/><stop offset="0.180" stop-color="#e2bfde"/><stop offset="0.232" stop-color="#d6a5d1"/><stop offset="0.290" stop-color="#c98ac3"/><stop offset="0.354" stop-color="#c073b8"/><stop offset="0.425" stop-color="#b963b1"/><stop offset="0.502" stop-color="#b559ac"/><stop offset="0.593" stop-color="#b356aa"/><stop offset="0.696" stop-color="#b255aa"/><stop offset="0.812" stop-color="#b254a9"/><stop offset="0.940" stop-color="#b154a8"/><stop offset="1.000" stop-color="#b154a8"/></linearGradient><linearGradient id="w120" gradientUnits="userSpaceOnUse" x1="165.4" y1="391.5" x2="165.4" y2="549.0"><stop offset="0.000" stop-color="#ffffff"/><stop offset="0.019" stop-color="#fffeff"/><stop offset="0.038" stop-color="#fdfbfd"/><stop offset="0.063" stop-color="#faf5fa"/><stop offset="0.095" stop-color="#f4e9f4"/><stop offset="0.133" stop-color="#ecd7eb"/><stop offset="0.178" stop-color="#e0c0df"/><stop offset="0.229" stop-color="#d3a6d2"/><stop offset="0.286" stop-color="#c78bc5"/><stop offset="0.349" stop-color="#bc75ba"/><stop offset="0.419" stop-color="#b565b2"/><stop offset="0.495" stop-color="#b15aae"/><stop offset="0.584" stop-color="#af57ac"/><stop offset="0.686" stop-color="#af56ac"/><stop offset="0.800" stop-color="#ae56ab"/><stop offset="0.927" stop-color="#ae55ab"/><stop offset="1.000" stop-color="#ae55ab"/></linearGradient><linearGradient id="w121" gradientUnits="userSpaceOnUse" x1="165.4" y1="391.5" x2="161.2" y2="551.6"><stop offset="0.000" stop-color="#ffffff"/><stop offset="0.019" stop-color="#fffeff"/><stop offset="0.037" stop-color="#fdfbfd"/><stop offset="0.062" stop-color="#faf5fa"/><stop offset="0.094" stop-color="#f4eaf4"/><stop offset="0.131" stop-color="#ebd8eb"/><stop offset="0.175" stop-color="#dfc1e0"/><stop offset="0.225" stop-color="#d2a8d3"/><stop offset="0.281" stop-color="#c48ec6"/><stop offset="0.343" stop-color="#ba77bc"/><stop offset="0.412" stop-color="#b267b5"/><stop offset="0.487" stop-color="#ae5cb0"/><stop offset="0.574" stop-color="#ac57ae"/><stop offset="0.674" stop-color="#ab57ae"/><stop offset="0.787" stop-color="#ab57ae"/><stop offset="0.911" stop-color="#ab57ad"/><stop offset="1.000" stop-color="#ab57ad"/></linearGradient><linearGradient id="w122" gradientUnits="userSpaceOnUse" x1="165.4" y1="391.5" x2="156.9" y2="553.9"><stop offset="0.000" stop-color="#ffffff"/><stop offset="0.018" stop-color="#fffeff"/><stop offset="0.037" stop-color="#fdfbfd"/><stop offset="0.061" stop-color="#faf5fa"/><stop offset="0.092" stop-color="#f3eaf5"/><stop offset="0.129" stop-color="#ead9ec"/><stop offset="0.172" stop-color="#dec2e1"/><stop offset="0.221" stop-color="#d0a9d5"/><stop offset="0.277" stop-color="#c290c8"/><stop offset="0.338" stop-color="#b77abe"/><stop offset="0.406" stop-color="#af69b7"/><stop offset="0.480" stop-color="#aa5eb2"/><stop offset="0.566" stop-color="#a858b0"/><stop offset="0.664" stop-color="#a858b0"/><stop offset="0.775" stop-color="#a858b0"/><stop offset="0.898" stop-color="#a858b0"/><stop offset="1.000" stop-color="#a858b0"/></linearGradient><linearGradient id="w123" gradientUnits="userSpaceOnUse" x1="165.4" y1="391.5" x2="152.4" y2="556.5"><stop offset="0.000" stop-color="#ffffff"/><stop offset="0.018" stop-color="#fefeff"/><stop offset="0.036" stop-color="#fdfcfd"/><stop offset="0.060" stop-color="#f9f6fa"/><stop offset="0.091" stop-color="#f3ebf5"/><stop offset="0.127" stop-color="#e9daed"/><stop offset="0.169" stop-color="#ddc4e2"/><stop offset="0.217" stop-color="#cfacd7"/><stop offset="0.272" stop-color="#c194cb"/><stop offset="0.332" stop-color="#b57dc1"/><stop offset="0.399" stop-color="#ac6db9"/><stop offset="0.471" stop-color="#a661b4"/><stop offset="0.556" stop-color="#a359b1"/><stop offset="0.652" stop-color="#a258b1"/><stop offset="0.761" stop-color="#a157b1"/><stop offset="0.882" stop-color="#a055b0"/><stop offset="1.000" stop-color="#9f55b0"/></linearGradient><linearGradient id="w124" gradientUnits="userSpaceOnUse" x1="165.4" y1="391.5" x2="147.8" y2="559.4"><stop offset="0.000" stop-color="#ffffff"/><stop offset="0.018" stop-color="#fefeff"/><stop offset="0.036" stop-color="#fdfcfd"/><stop offset="0.059" stop-color="#f9f6fb"/><stop offset="0.089" stop-color="#f3ebf6"/><stop offset="0.124" stop-color="#e9dbee"/><stop offset="0.166" stop-color="#dcc6e4"/><stop offset="0.213" stop-color="#ceafd9"/><stop offset="0.267" stop-color="#bf97ce"/><stop offset="0.326" stop-color="#b381c4"/><stop offset="0.391" stop-color="#a970bc"/><stop offset="0.462" stop-color="#a364b7"/><stop offset="0.545" stop-color="#9e5bb3"/><stop offset="0.640" stop-color="#9c58b2"/><stop offset="0.746" stop-color="#9a56b1"/><stop offset="0.865" stop-color="#9853b1"/><stop offset="1.000" stop-color="#9751b0"/></linearGradient><linearGradient id="w125" gradientUnits="userSpaceOnUse" x1="165.4" y1="391.5" x2="143.0" y2="561.9"><stop offset="0.000" stop-color="#ffffff"/><stop offset="0.017" stop-color="#fefeff"/><stop offset="0.035" stop-color="#fdfcfd"/><stop offset="0.058" stop-color="#f9f6fb"/><stop offset="0.087" stop-color="#f3ecf6"/><stop offset="0.122" stop-color="#e8dcef"/><stop offset="0.163" stop-color="#dbc8e6"/><stop offset="0.209" stop-color="#cdb2db"/><stop offset="0.262" stop-color="#be9bd1"/><stop offset="0.320" stop-color="#b185c7"/><stop offset="0.384" stop-color="#a674bf"/><stop offset="0.454" stop-color="#9f67b9"/><stop offset="0.535" stop-color="#995cb4"/><stop offset="0.628" stop-color="#9659b3"/><stop offset="0.733" stop-color="#9455b2"/><stop offset="0.849" stop-color="#9151b1"/><stop offset="0.989" stop-color="#8e4eb0"/><stop offset="1.000" stop-color="#8e4eb0"/></linearGradient><linearGradient id="w126" gradientUnits="userSpaceOnUse" x1="165.4" y1="391.5" x2="137.9" y2="565.0"><stop offset="0.000" stop-color="#ffffff"/><stop offset="0.017" stop-color="#fefeff"/><stop offset="0.034" stop-color="#fdfcfe"/><stop offset="0.057" stop-color="#f9f6fb"/><stop offset="0.085" stop-color="#f2edf7"/><stop offset="0.120" stop-color="#e8def0"/><stop offset="0.159" stop-color="#dacae7"/><stop offset="0.205" stop-color="#ccb5dd"/><stop offset="0.256" stop-color="#bd9fd4"/><stop offset="0.313" stop-color="#af8aca"/><stop offset="0.376" stop-color="#a478c2"/><stop offset="0.444" stop-color="#9c6abb"/><stop offset="0.524" stop-color="#945eb6"/><stop offset="0.615" stop-color="#9159b4"/><stop offset="0.717" stop-color="#8e55b3"/><stop offset="0.831" stop-color="#8a50b2"/><stop offset="0.968" stop-color="#864ab0"/><stop offset="1.000" stop-color="#864ab0"/></linearGradient><linearGradient id="w127" gradientUnits="userSpaceOnUse" x1="165.4" y1="391.5" x2="132.7" y2="567.8"><stop offset="0.000" stop-color="#ffffff"/><stop offset="0.017" stop-color="#fefeff"/><stop offset="0.033" stop-color="#fdfcfe"/><stop offset="0.056" stop-color="#f9f7fb"/><stop offset="0.084" stop-color="#f2edf7"/><stop offset="0.117" stop-color="#e7dff1"/><stop offset="0.156" stop-color="#dacce9"/><stop offset="0.201" stop-color="#cab8e0"/><stop offset="0.251" stop-color="#bca4d7"/><stop offset="0.307" stop-color="#ad8ecd"/><stop offset="0.368" stop-color="#a17cc5"/><stop offset="0.435" stop-color="#996ebe"/><stop offset="0.513" stop-color="#9061b8"/><stop offset="0.602" stop-color="#8c5ab5"/><stop offset="0.703" stop-color="#8855b4"/><stop offset="0.814" stop-color="#844fb2"/><stop offset="0.948" stop-color="#7e47b0"/><stop offset="1.000" stop-color="#7e47b0"/></linearGradient><linearGradient id="w128" gradientUnits="userSpaceOnUse" x1="165.4" y1="391.5" x2="127.2" y2="571.2"><stop offset="0.000" stop-color="#ffffff"/><stop offset="0.016" stop-color="#fefeff"/><stop offset="0.033" stop-color="#fdfcfe"/><stop offset="0.054" stop-color="#f9f7fc"/><stop offset="0.082" stop-color="#f2eef8"/><stop offset="0.114" stop-color="#e7e0f2"/><stop offset="0.152" stop-color="#d9ceea"/><stop offset="0.196" stop-color="#c9bbe2"/><stop offset="0.245" stop-color="#bba8da"/><stop offset="0.299" stop-color="#ac93d1"/><stop offset="0.359" stop-color="#9f81c8"/><stop offset="0.425" stop-color="#9673c1"/><stop offset="0.501" stop-color="#8d65ba"/><stop offset="0.588" stop-color="#885cb7"/><stop offset="0.686" stop-color="#8456b5"/><stop offset="0.795" stop-color="#7f4fb3"/><stop offset="0.925" stop-color="#7a46b1"/><stop offset="1.000" stop-color="#7944b0"/></linearGradient><linearGradient id="w129" gradientUnits="userSpaceOnUse" x1="165.4" y1="391.5" x2="121.5" y2="574.5"><stop offset="0.000" stop-color="#ffffff"/><stop offset="0.016" stop-color="#fefeff"/><stop offset="0.032" stop-color="#fdfcfe"/><stop offset="0.053" stop-color="#f9f7fc"/><stop offset="0.080" stop-color="#f1eef8"/><stop offset="0.112" stop-color="#e6e0f2"/><stop offset="0.149" stop-color="#d8ceeb"/><stop offset="0.191" stop-color="#c8bae3"/><stop offset="0.239" stop-color="#baa9db"/><stop offset="0.292" stop-color="#aa94d2"/><stop offset="0.351" stop-color="#9d82ca"/><stop offset="0.414" stop-color="#9374c3"/><stop offset="0.489" stop-color="#8a67bc"/><stop offset="0.574" stop-color="#845db8"/><stop offset="0.669" stop-color="#8056b6"/><stop offset="0.776" stop-color="#7b4eb4"/><stop offset="0.903" stop-color="#7545b1"/><stop offset="1.000" stop-color="#7341b0"/></linearGradient><linearGradient id="w130" gradientUnits="userSpaceOnUse" x1="165.4" y1="391.5" x2="115.5" y2="577.8"><stop offset="0.000" stop-color="#ffffff"/><stop offset="0.016" stop-color="#fefeff"/><stop offset="0.031" stop-color="#fdfcfe"/><stop offset="0.052" stop-color="#f8f7fc"/><stop offset="0.078" stop-color="#f1eef8"/><stop offset="0.109" stop-color="#e5e0f2"/><stop offset="0.145" stop-color="#d7ceeb"/><stop offset="0.187" stop-color="#c7bae3"/><stop offset="0.233" stop-color="#b8a8dc"/><stop offset="0.285" stop-color="#a995d3"/><stop offset="0.342" stop-color="#9c84cc"/><stop offset="0.404" stop-color="#9176c5"/><stop offset="0.477" stop-color="#8869be"/><stop offset="0.560" stop-color="#805db9"/><stop offset="0.653" stop-color="#7c56b7"/><stop offset="0.757" stop-color="#774eb5"/><stop offset="0.881" stop-color="#7144b2"/><stop offset="1.000" stop-color="#6e3eb0"/></linearGradient><linearGradient id="w131" gradientUnits="userSpaceOnUse" x1="165.4" y1="391.5" x2="109.1" y2="581.7"><stop offset="0.000" stop-color="#ffffff"/><stop offset="0.015" stop-color="#fefeff"/><stop offset="0.030" stop-color="#fdfcfe"/><stop offset="0.050" stop-color="#f8f7fc"/><stop offset="0.076" stop-color="#f0eef8"/><stop offset="0.106" stop-color="#e5e0f3"/><stop offset="0.141" stop-color="#d6cdeb"/><stop offset="0.181" stop-color="#c5bae4"/><stop offset="0.227" stop-color="#b6a8dd"/><stop offset="0.277" stop-color="#a796d5"/><stop offset="0.333" stop-color="#9a85cd"/><stop offset="0.393" stop-color="#9078c7"/><stop offset="0.464" stop-color="#856bc1"/><stop offset="0.544" stop-color="#7c5fbb"/><stop offset="0.635" stop-color="#7757b8"/><stop offset="0.736" stop-color="#714eb5"/><stop offset="0.857" stop-color="#6a44b2"/><stop offset="1.000" stop-color="#653baf"/></linearGradient><linearGradient id="w132" gradientUnits="userSpaceOnUse" x1="165.4" y1="391.5" x2="102.4" y2="585.5"><stop offset="0.000" stop-color="#ffffff"/><stop offset="0.015" stop-color="#fefeff"/><stop offset="0.029" stop-color="#fcfcfe"/><stop offset="0.049" stop-color="#f8f7fc"/><stop offset="0.074" stop-color="#f0edf8"/><stop offset="0.103" stop-color="#e4dff3"/><stop offset="0.137" stop-color="#d4cdec"/><stop offset="0.176" stop-color="#c4b9e4"/><stop offset="0.221" stop-color="#b5a8dd"/><stop offset="0.270" stop-color="#a697d6"/><stop offset="0.324" stop-color="#9987cf"/><stop offset="0.382" stop-color="#8e7ac9"/><stop offset="0.451" stop-color="#836dc3"/><stop offset="0.529" stop-color="#7860bc"/><stop offset="0.618" stop-color="#7158b9"/><stop offset="0.716" stop-color="#694fb5"/><stop offset="0.833" stop-color="#5f45b0"/><stop offset="0.980" stop-color="#5539ab"/><stop offset="1.000" stop-color="#5539ab"/></linearGradient><linearGradient id="w133" gradientUnits="userSpaceOnUse" x1="165.4" y1="391.5" x2="97.9" y2="582.0"><stop offset="0.000" stop-color="#ffffff"/><stop offset="0.015" stop-color="#fefeff"/><stop offset="0.030" stop-color="#fcfcfe"/><stop offset="0.049" stop-color="#f8f7fc"/><stop offset="0.074" stop-color="#f0edf8"/><stop offset="0.104" stop-color="#e3dff3"/><stop offset="0.139" stop-color="#d3cdec"/><stop offset="0.178" stop-color="#c2b9e5"/><stop offset="0.223" stop-color="#b3a7de"/><stop offset="0.272" stop-color="#a496d7"/><stop offset="0.327" stop-color="#9686d0"/><stop offset="0.386" stop-color="#8a79ca"/><stop offset="0.455" stop-color="#7f6cc4"/><stop offset="0.534" stop-color="#745fbd"/><stop offset="0.623" stop-color="#6a57b8"/><stop offset="0.722" stop-color="#5f4eb3"/><stop offset="0.841" stop-color="#5243ad"/><stop offset="0.990" stop-color="#4537a7"/><stop offset="1.000" stop-color="#4537a7"/></linearGradient><linearGradient id="w134" gradientUnits="userSpaceOnUse" x1="165.4" y1="391.5" x2="94.0" y2="577.6"><stop offset="0.000" stop-color="#ffffff"/><stop offset="0.015" stop-color="#fefeff"/><stop offset="0.030" stop-color="#fcfcfe"/><stop offset="0.050" stop-color="#f8f7fc"/><stop offset="0.075" stop-color="#f0eef9"/><stop offset="0.105" stop-color="#e4e1f4"/><stop offset="0.140" stop-color="#d4cfee"/><stop offset="0.181" stop-color="#c3bce6"/><stop offset="0.226" stop-color="#b3aae0"/><stop offset="0.276" stop-color="#a397d8"/><stop offset="0.331" stop-color="#9386d1"/><stop offset="0.391" stop-color="#8778cb"/><stop offset="0.462" stop-color="#7a6bc4"/><stop offset="0.542" stop-color="#6e5fbe"/><stop offset="0.632" stop-color="#6256b8"/><stop offset="0.733" stop-color="#544cb1"/><stop offset="0.853" stop-color="#4340aa"/><stop offset="1.000" stop-color="#3535a3"/></linearGradient><linearGradient id="w135" gradientUnits="userSpaceOnUse" x1="165.4" y1="391.5" x2="90.2" y2="573.0"><stop offset="0.000" stop-color="#ffffff"/><stop offset="0.015" stop-color="#fefeff"/><stop offset="0.031" stop-color="#fdfcfe"/><stop offset="0.051" stop-color="#f9f8fc"/><stop offset="0.076" stop-color="#f1f0fa"/><stop offset="0.107" stop-color="#e6e3f5"/><stop offset="0.143" stop-color="#d7d2ef"/><stop offset="0.183" stop-color="#c5bfe8"/><stop offset="0.229" stop-color="#b5ade2"/><stop offset="0.280" stop-color="#a399da"/><stop offset="0.336" stop-color="#9187d2"/><stop offset="0.397" stop-color="#8378cb"/><stop offset="0.468" stop-color="#766ac5"/><stop offset="0.550" stop-color="#685ebe"/><stop offset="0.641" stop-color="#5a55b7"/><stop offset="0.743" stop-color="#4b4ab0"/><stop offset="0.865" stop-color="#383ea7"/><stop offset="1.000" stop-color="#2a35a0"/></linearGradient><linearGradient id="w136" gradientUnits="userSpaceOnUse" x1="165.4" y1="391.5" x2="86.8" y2="568.1"><stop offset="0.000" stop-color="#ffffff"/><stop offset="0.016" stop-color="#fefeff"/><stop offset="0.031" stop-color="#fdfdfe"/><stop offset="0.052" stop-color="#f9f9fd"/><stop offset="0.078" stop-color="#f2f2fa"/><stop offset="0.109" stop-color="#e6e6f7"/><stop offset="0.145" stop-color="#d7d7f2"/><stop offset="0.186" stop-color="#c5c6ec"/><stop offset="0.233" stop-color="#b4b5e6"/><stop offset="0.284" stop-color="#a0a0de"/><stop offset="0.341" stop-color="#8d8ed6"/><stop offset="0.403" stop-color="#7e7ecf"/><stop offset="0.476" stop-color="#7070c9"/><stop offset="0.559" stop-color="#6363c2"/><stop offset="0.652" stop-color="#5659ba"/><stop offset="0.755" stop-color="#474db2"/><stop offset="0.879" stop-color="#363fa8"/><stop offset="1.000" stop-color="#2b36a1"/></linearGradient><linearGradient id="w137" gradientUnits="userSpaceOnUse" x1="165.4" y1="391.5" x2="83.6" y2="563.0"><stop offset="0.000" stop-color="#ffffff"/><stop offset="0.016" stop-color="#feffff"/><stop offset="0.032" stop-color="#fdfdfe"/><stop offset="0.053" stop-color="#f9fafd"/><stop offset="0.079" stop-color="#f2f4fb"/><stop offset="0.111" stop-color="#e6eaf8"/><stop offset="0.147" stop-color="#d7ddf4"/><stop offset="0.189" stop-color="#c4cdef"/><stop offset="0.237" stop-color="#b2bdea"/><stop offset="0.289" stop-color="#9ca9e3"/><stop offset="0.347" stop-color="#8897db"/><stop offset="0.411" stop-color="#7987d5"/><stop offset="0.484" stop-color="#6b79ce"/><stop offset="0.568" stop-color="#5e6bc6"/><stop offset="0.663" stop-color="#525fbd"/><stop offset="0.768" stop-color="#4451b4"/><stop offset="0.895" stop-color="#3340a8"/><stop offset="1.000" stop-color="#2b38a2"/></linearGradient><linearGradient id="w138" gradientUnits="userSpaceOnUse" x1="165.4" y1="391.5" x2="80.8" y2="557.5"><stop offset="0.000" stop-color="#ffffff"/><stop offset="0.016" stop-color="#feffff"/><stop offset="0.032" stop-color="#fdfdff"/><stop offset="0.054" stop-color="#f9fbfe"/><stop offset="0.081" stop-color="#f2f5fc"/><stop offset="0.113" stop-color="#e6edfa"/><stop offset="0.150" stop-color="#d6e2f7"/><stop offset="0.193" stop-color="#c3d4f3"/><stop offset="0.242" stop-color="#afc5ee"/><stop offset="0.295" stop-color="#98b2e8"/><stop offset="0.354" stop-color="#84a0e1"/><stop offset="0.419" stop-color="#7490da"/><stop offset="0.494" stop-color="#6681d3"/><stop offset="0.580" stop-color="#5973cb"/><stop offset="0.676" stop-color="#4d64c0"/><stop offset="0.784" stop-color="#4054b5"/><stop offset="0.913" stop-color="#3140a8"/><stop offset="1.000" stop-color="#2b3aa3"/></linearGradient><linearGradient id="w139" gradientUnits="userSpaceOnUse" x1="165.4" y1="391.5" x2="78.3" y2="551.9"><stop offset="0.000" stop-color="#ffffff"/><stop offset="0.016" stop-color="#feffff"/><stop offset="0.033" stop-color="#fdfeff"/><stop offset="0.055" stop-color="#f9fbfe"/><stop offset="0.082" stop-color="#f2f7fd"/><stop offset="0.115" stop-color="#e6f0fb"/><stop offset="0.153" stop-color="#d6e6f9"/><stop offset="0.197" stop-color="#c3daf6"/><stop offset="0.247" stop-color="#aeccf2"/><stop offset="0.301" stop-color="#96baec"/><stop offset="0.362" stop-color="#80a9e5"/><stop offset="0.427" stop-color="#6f99df"/><stop offset="0.504" stop-color="#618ad8"/><stop offset="0.592" stop-color="#557ace"/><stop offset="0.691" stop-color="#4969c3"/><stop offset="0.800" stop-color="#3d56b6"/><stop offset="0.932" stop-color="#2f40a7"/><stop offset="1.000" stop-color="#2c3ba4"/></linearGradient><linearGradient id="w140" gradientUnits="userSpaceOnUse" x1="165.4" y1="391.5" x2="76.2" y2="546.1"><stop offset="0.000" stop-color="#ffffff"/><stop offset="0.017" stop-color="#feffff"/><stop offset="0.034" stop-color="#fdfeff"/><stop offset="0.056" stop-color="#f9fcfe"/><stop offset="0.084" stop-color="#f2f8fd"/><stop offset="0.118" stop-color="#e6f1fc"/><stop offset="0.157" stop-color="#d6e8fa"/><stop offset="0.202" stop-color="#c2ddf7"/><stop offset="0.252" stop-color="#acd0f3"/><stop offset="0.308" stop-color="#93c0ee"/><stop offset="0.370" stop-color="#7eb0e9"/><stop offset="0.437" stop-color="#6ca1e3"/><stop offset="0.515" stop-color="#5f94dd"/><stop offset="0.605" stop-color="#5282d2"/><stop offset="0.706" stop-color="#476ec5"/><stop offset="0.818" stop-color="#3b58b7"/><stop offset="0.952" stop-color="#2d3fa6"/><stop offset="1.000" stop-color="#2c3ea6"/></linearGradient><linearGradient id="w141" gradientUnits="userSpaceOnUse" x1="165.4" y1="391.5" x2="74.0" y2="540.7"><stop offset="0.000" stop-color="#ffffff"/><stop offset="0.017" stop-color="#feffff"/><stop offset="0.034" stop-color="#fdfeff"/><stop offset="0.057" stop-color="#f9fcfe"/><stop offset="0.086" stop-color="#f2f8fd"/><stop offset="0.120" stop-color="#e6f2fc"/><stop offset="0.160" stop-color="#d6e9fa"/><stop offset="0.206" stop-color="#c1dff7"/><stop offset="0.257" stop-color="#aad2f4"/><stop offset="0.314" stop-color="#91c3f0"/><stop offset="0.377" stop-color="#7bb5eb"/><stop offset="0.446" stop-color="#6ba9e7"/><stop offset="0.526" stop-color="#5e9fe3"/><stop offset="0.617" stop-color="#5189d6"/><stop offset="0.720" stop-color="#4573c8"/><stop offset="0.834" stop-color="#395ab9"/><stop offset="0.972" stop-color="#2d41a9"/><stop offset="1.000" stop-color="#2d41a9"/></linearGradient><linearGradient id="w142" gradientUnits="userSpaceOnUse" x1="165.4" y1="391.5" x2="71.8" y2="535.6"><stop offset="0.000" stop-color="#ffffff"/><stop offset="0.017" stop-color="#feffff"/><stop offset="0.035" stop-color="#fdfeff"/><stop offset="0.058" stop-color="#f9fcfe"/><stop offset="0.087" stop-color="#f2f8fd"/><stop offset="0.122" stop-color="#e6f3fc"/><stop offset="0.163" stop-color="#d5eafa"/><stop offset="0.210" stop-color="#c0e0f8"/><stop offset="0.262" stop-color="#a8d4f5"/><stop offset="0.320" stop-color="#8fc7f1"/><stop offset="0.384" stop-color="#7abbee"/><stop offset="0.454" stop-color="#6ab2eb"/><stop offset="0.535" stop-color="#5ea9e7"/><stop offset="0.629" stop-color="#5091da"/><stop offset="0.733" stop-color="#4478cb"/><stop offset="0.850" stop-color="#385cbb"/><stop offset="0.990" stop-color="#2d44ac"/><stop offset="1.000" stop-color="#2d44ac"/></linearGradient><linearGradient id="w143" gradientUnits="userSpaceOnUse" x1="165.4" y1="391.5" x2="70.1" y2="530.2"><stop offset="0.000" stop-color="#ffffff"/><stop offset="0.018" stop-color="#feffff"/><stop offset="0.036" stop-color="#fdfeff"/><stop offset="0.059" stop-color="#f9fcfe"/><stop offset="0.089" stop-color="#f2f9fd"/><stop offset="0.125" stop-color="#e6f3fc"/><stop offset="0.166" stop-color="#d6ebfa"/><stop offset="0.214" stop-color="#c0e1f8"/><stop offset="0.267" stop-color="#a8d6f5"/><stop offset="0.327" stop-color="#90caf2"/><stop offset="0.392" stop-color="#7ac0f0"/><stop offset="0.464" stop-color="#6ab9ee"/><stop offset="0.547" stop-color="#5eaeea"/><stop offset="0.642" stop-color="#4f95dc"/><stop offset="0.749" stop-color="#4279cc"/><stop offset="0.868" stop-color="#365cbb"/><stop offset="1.000" stop-color="#2e47af"/></linearGradient><linearGradient id="w144" gradientUnits="userSpaceOnUse" x1="165.4" y1="391.5" x2="68.5" y2="524.8"><stop offset="0.000" stop-color="#ffffff"/><stop offset="0.018" stop-color="#feffff"/><stop offset="0.036" stop-color="#fdfeff"/><stop offset="0.061" stop-color="#f9fcfe"/><stop offset="0.091" stop-color="#f3f9fe"/><stop offset="0.127" stop-color="#e8f4fc"/><stop offset="0.170" stop-color="#d8ecfa"/><stop offset="0.218" stop-color="#c3e3f8"/><stop offset="0.273" stop-color="#abd7f5"/><stop offset="0.334" stop-color="#93ccf2"/><stop offset="0.400" stop-color="#7dc2f0"/><stop offset="0.473" stop-color="#6dbaee"/><stop offset="0.558" stop-color="#5eade9"/><stop offset="0.655" stop-color="#4f94db"/><stop offset="0.764" stop-color="#4279cc"/><stop offset="0.886" stop-color="#365dbc"/><stop offset="1.000" stop-color="#304eb3"/></linearGradient><linearGradient id="w145" gradientUnits="userSpaceOnUse" x1="165.4" y1="391.5" x2="66.9" y2="519.9"><stop offset="0.000" stop-color="#ffffff"/><stop offset="0.019" stop-color="#feffff"/><stop offset="0.037" stop-color="#fdfeff"/><stop offset="0.062" stop-color="#f9fcfe"/><stop offset="0.093" stop-color="#f1f9fd"/><stop offset="0.130" stop-color="#e5f3fc"/><stop offset="0.173" stop-color="#d4ebfa"/><stop offset="0.222" stop-color="#bee0f7"/><stop offset="0.278" stop-color="#a6d5f4"/><stop offset="0.340" stop-color="#8dc9f2"/><stop offset="0.408" stop-color="#78bfef"/><stop offset="0.482" stop-color="#69b8ee"/><stop offset="0.569" stop-color="#5baae7"/><stop offset="0.667" stop-color="#4e93db"/><stop offset="0.779" stop-color="#437bcd"/><stop offset="0.902" stop-color="#3860be"/><stop offset="1.000" stop-color="#3356b8"/></linearGradient><linearGradient id="w146" gradientUnits="userSpaceOnUse" x1="165.4" y1="391.5" x2="65.2" y2="515.2"><stop offset="0.000" stop-color="#ffffff"/><stop offset="0.019" stop-color="#feffff"/><stop offset="0.038" stop-color="#fdfeff"/><stop offset="0.063" stop-color="#f8fcfe"/><stop offset="0.094" stop-color="#f0f8fd"/><stop offset="0.132" stop-color="#e3f2fc"/><stop offset="0.176" stop-color="#d0e9f9"/><stop offset="0.226" stop-color="#b9def6"/><stop offset="0.283" stop-color="#a0d2f3"/><stop offset="0.345" stop-color="#87c6f1"/><stop offset="0.415" stop-color="#73bdef"/><stop offset="0.490" stop-color="#65b6ed"/><stop offset="0.578" stop-color="#59a8e7"/><stop offset="0.678" stop-color="#4d93db"/><stop offset="0.791" stop-color="#437dce"/><stop offset="0.917" stop-color="#3965c0"/><stop offset="1.000" stop-color="#375fbc"/></linearGradient><linearGradient id="w147" gradientUnits="userSpaceOnUse" x1="165.4" y1="391.5" x2="63.8" y2="510.4"><stop offset="0.000" stop-color="#ffffff"/><stop offset="0.019" stop-color="#feffff"/><stop offset="0.038" stop-color="#fcfeff"/><stop offset="0.064" stop-color="#f7fbfe"/><stop offset="0.096" stop-color="#eef7fd"/><stop offset="0.134" stop-color="#e0f0fb"/><stop offset="0.179" stop-color="#cce7f9"/><stop offset="0.230" stop-color="#b4dbf6"/><stop offset="0.288" stop-color="#99cff3"/><stop offset="0.352" stop-color="#81c4f0"/><stop offset="0.422" stop-color="#6ebbee"/><stop offset="0.499" stop-color="#62b5ed"/><stop offset="0.588" stop-color="#57a7e6"/><stop offset="0.691" stop-color="#4d94db"/><stop offset="0.806" stop-color="#4480cf"/><stop offset="0.934" stop-color="#3b6ac2"/><stop offset="1.000" stop-color="#3a67c1"/></linearGradient><linearGradient id="w148" gradientUnits="userSpaceOnUse" x1="165.4" y1="391.5" x2="62.5" y2="505.8"><stop offset="0.000" stop-color="#ffffff"/><stop offset="0.020" stop-color="#feffff"/><stop offset="0.039" stop-color="#fcfeff"/><stop offset="0.065" stop-color="#f7fbfe"/><stop offset="0.098" stop-color="#edf6fd"/><stop offset="0.137" stop-color="#ddeffb"/><stop offset="0.182" stop-color="#c7e5f8"/><stop offset="0.234" stop-color="#aed8f5"/><stop offset="0.293" stop-color="#93ccf1"/><stop offset="0.358" stop-color="#7bc1ef"/><stop offset="0.429" stop-color="#6ab8ed"/><stop offset="0.507" stop-color="#5fb3ed"/><stop offset="0.598" stop-color="#55a6e5"/><stop offset="0.702" stop-color="#4d95dc"/><stop offset="0.819" stop-color="#4583d1"/><stop offset="0.949" stop-color="#3d70c6"/><stop offset="1.000" stop-color="#3d70c6"/></linearGradient><linearGradient id="w149" gradientUnits="userSpaceOnUse" x1="165.4" y1="391.5" x2="61.2" y2="501.3"><stop offset="0.000" stop-color="#ffffff"/><stop offset="0.020" stop-color="#feffff"/><stop offset="0.040" stop-color="#fcfdff"/><stop offset="0.066" stop-color="#f6fbfe"/><stop offset="0.099" stop-color="#ebf6fc"/><stop offset="0.139" stop-color="#daeefa"/><stop offset="0.185" stop-color="#c3e3f7"/><stop offset="0.238" stop-color="#a9d6f4"/><stop offset="0.297" stop-color="#8dc9f1"/><stop offset="0.363" stop-color="#76beee"/><stop offset="0.436" stop-color="#66b7ed"/><stop offset="0.515" stop-color="#5db3ed"/><stop offset="0.608" stop-color="#55a5e5"/><stop offset="0.714" stop-color="#4e97dd"/><stop offset="0.832" stop-color="#4787d3"/><stop offset="0.965" stop-color="#4078ca"/><stop offset="1.000" stop-color="#4078ca"/></linearGradient><linearGradient id="w150" gradientUnits="userSpaceOnUse" x1="165.4" y1="391.5" x2="60.1" y2="496.8"><stop offset="0.000" stop-color="#ffffff"/><stop offset="0.020" stop-color="#feffff"/><stop offset="0.040" stop-color="#fbfdff"/><stop offset="0.067" stop-color="#f5fafe"/><stop offset="0.101" stop-color="#e9f5fc"/><stop offset="0.141" stop-color="#d7ecfa"/><stop offset="0.188" stop-color="#bfe1f7"/><stop offset="0.242" stop-color="#a3d4f3"/><stop offset="0.302" stop-color="#88c7f0"/><stop offset="0.369" stop-color="#72bcee"/><stop offset="0.443" stop-color="#63b5ed"/><stop offset="0.524" stop-color="#5cb2ec"/><stop offset="0.618" stop-color="#54a6e5"/><stop offset="0.725" stop-color="#4e99de"/><stop offset="0.846" stop-color="#488cd6"/><stop offset="0.980" stop-color="#4481cf"/><stop offset="1.000" stop-color="#4481cf"/></linearGradient><linearGradient id="w151" gradientUnits="userSpaceOnUse" x1="165.4" y1="391.5" x2="58.8" y2="492.7"><stop offset="0.000" stop-color="#ffffff"/><stop offset="0.020" stop-color="#feffff"/><stop offset="0.041" stop-color="#fbfdfe"/><stop offset="0.068" stop-color="#f4fafe"/><stop offset="0.102" stop-color="#e7f4fc"/><stop offset="0.143" stop-color="#d4ebf9"/><stop offset="0.191" stop-color="#badff6"/><stop offset="0.245" stop-color="#9ed1f2"/><stop offset="0.306" stop-color="#82c4ef"/><stop offset="0.374" stop-color="#6ebaed"/><stop offset="0.449" stop-color="#61b4ec"/><stop offset="0.531" stop-color="#5ab0ec"/><stop offset="0.626" stop-color="#54a7e6"/><stop offset="0.735" stop-color="#4f9de0"/><stop offset="0.857" stop-color="#4a91d8"/><stop offset="0.993" stop-color="#4789d3"/><stop offset="1.000" stop-color="#4789d3"/></linearGradient><linearGradient id="w152" gradientUnits="userSpaceOnUse" x1="165.4" y1="391.5" x2="57.6" y2="488.5"><stop offset="0.000" stop-color="#ffffff"/><stop offset="0.021" stop-color="#fefeff"/><stop offset="0.041" stop-color="#fbfdfe"/><stop offset="0.069" stop-color="#f3f9fd"/><stop offset="0.103" stop-color="#e5f3fb"/><stop offset="0.145" stop-color="#d0e9f9"/><stop offset="0.193" stop-color="#b5dcf5"/><stop offset="0.248" stop-color="#98cef1"/><stop offset="0.310" stop-color="#7dc1ee"/><stop offset="0.379" stop-color="#69b8ec"/><stop offset="0.455" stop-color="#5eb3ec"/><stop offset="0.538" stop-color="#59b0eb"/><stop offset="0.634" stop-color="#55a8e7"/><stop offset="0.745" stop-color="#51a0e1"/><stop offset="0.869" stop-color="#4d97dc"/><stop offset="1.000" stop-color="#4a92d8"/></linearGradient><linearGradient id="w153" gradientUnits="userSpaceOnUse" x1="165.4" y1="391.5" x2="56.5" y2="484.5"><stop offset="0.000" stop-color="#ffffff"/><stop offset="0.021" stop-color="#fefeff"/><stop offset="0.042" stop-color="#fafdfe"/><stop offset="0.070" stop-color="#f2f9fd"/><stop offset="0.105" stop-color="#e3f2fb"/><stop offset="0.147" stop-color="#cce7f8"/><stop offset="0.196" stop-color="#afd9f3"/><stop offset="0.251" stop-color="#91cbef"/><stop offset="0.314" stop-color="#77bfec"/><stop offset="0.384" stop-color="#66b6ea"/><stop offset="0.461" stop-color="#5db2ea"/><stop offset="0.545" stop-color="#58afe9"/><stop offset="0.643" stop-color="#55a8e5"/><stop offset="0.754" stop-color="#51a1e0"/><stop offset="0.880" stop-color="#4d98db"/><stop offset="1.000" stop-color="#4b94d8"/></linearGradient><linearGradient id="w154" gradientUnits="userSpaceOnUse" x1="165.4" y1="391.5" x2="55.5" y2="480.5"><stop offset="0.000" stop-color="#ffffff"/><stop offset="0.021" stop-color="#fefeff"/><stop offset="0.042" stop-color="#fafcfe"/><stop offset="0.071" stop-color="#f0f8fd"/><stop offset="0.106" stop-color="#e0f0fa"/><stop offset="0.148" stop-color="#c7e5f6"/><stop offset="0.198" stop-color="#a9d6f2"/><stop offset="0.255" stop-color="#8bc8ed"/><stop offset="0.318" stop-color="#72bcea"/><stop offset="0.389" stop-color="#63b5e9"/><stop offset="0.467" stop-color="#5bb1e9"/><stop offset="0.551" stop-color="#58aee7"/><stop offset="0.650" stop-color="#55a8e3"/><stop offset="0.764" stop-color="#52a1df"/><stop offset="0.891" stop-color="#4e9ada"/><stop offset="1.000" stop-color="#4d96d7"/></linearGradient><linearGradient id="w155" gradientUnits="userSpaceOnUse" x1="165.4" y1="391.5" x2="54.5" y2="476.6"><stop offset="0.000" stop-color="#ffffff"/><stop offset="0.021" stop-color="#fdfeff"/><stop offset="0.043" stop-color="#f9fcfe"/><stop offset="0.072" stop-color="#eff7fc"/><stop offset="0.107" stop-color="#dceef9"/><stop offset="0.150" stop-color="#c2e2f5"/><stop offset="0.200" stop-color="#a2d3f0"/><stop offset="0.258" stop-color="#84c4eb"/><stop offset="0.322" stop-color="#6db9e8"/><stop offset="0.393" stop-color="#60b3e7"/><stop offset="0.472" stop-color="#5ab0e7"/><stop offset="0.558" stop-color="#58aee6"/><stop offset="0.658" stop-color="#55a8e2"/><stop offset="0.773" stop-color="#52a2dd"/><stop offset="0.901" stop-color="#4f9bd9"/><stop offset="1.000" stop-color="#4e99d7"/></linearGradient><linearGradient id="w156" gradientUnits="userSpaceOnUse" x1="165.4" y1="391.5" x2="53.4" y2="472.9"><stop offset="0.000" stop-color="#ffffff"/><stop offset="0.022" stop-color="#fdfeff"/><stop offset="0.043" stop-color="#f8fcfe"/><stop offset="0.072" stop-color="#edf6fc"/><stop offset="0.108" stop-color="#d8edf8"/><stop offset="0.152" stop-color="#bcdff4"/><stop offset="0.202" stop-color="#9bcfee"/><stop offset="0.260" stop-color="#7dc1e9"/><stop offset="0.325" stop-color="#68b7e6"/><stop offset="0.397" stop-color="#5db2e5"/><stop offset="0.477" stop-color="#5ab0e5"/><stop offset="0.563" stop-color="#58ade4"/><stop offset="0.665" stop-color="#55a8e0"/><stop offset="0.780" stop-color="#53a3dc"/><stop offset="0.910" stop-color="#509cd8"/><stop offset="1.000" stop-color="#4f9bd7"/></linearGradient><linearGradient id="w157" gradientUnits="userSpaceOnUse" x1="165.4" y1="391.5" x2="52.4" y2="469.2"><stop offset="0.000" stop-color="#ffffff"/><stop offset="0.022" stop-color="#fdfeff"/><stop offset="0.044" stop-color="#f7fbfe"/><stop offset="0.073" stop-color="#ebf5fb"/><stop offset="0.109" stop-color="#d5ebf7"/><stop offset="0.153" stop-color="#b7dcf2"/><stop offset="0.204" stop-color="#95ccec"/><stop offset="0.262" stop-color="#78bee7"/><stop offset="0.328" stop-color="#65b5e4"/><stop offset="0.401" stop-color="#5cb1e3"/><stop offset="0.481" stop-color="#59b0e4"/><stop offset="0.569" stop-color="#58ade2"/><stop offset="0.671" stop-color="#56a9df"/><stop offset="0.787" stop-color="#53a4db"/><stop offset="0.919" stop-color="#519ed7"/><stop offset="1.000" stop-color="#509dd6"/></linearGradient><linearGradient id="w158" gradientUnits="userSpaceOnUse" x1="165.4" y1="391.5" x2="51.7" y2="465.4"><stop offset="0.000" stop-color="#ffffff"/><stop offset="0.022" stop-color="#fdfeff"/><stop offset="0.044" stop-color="#f7fbfe"/><stop offset="0.074" stop-color="#eaf5fb"/><stop offset="0.111" stop-color="#d4eaf7"/><stop offset="0.155" stop-color="#b5dcf1"/><stop offset="0.206" stop-color="#93cbeb"/><stop offset="0.265" stop-color="#76bde6"/><stop offset="0.332" stop-color="#64b5e3"/><stop offset="0.406" stop-color="#5cb1e2"/><stop offset="0.487" stop-color="#59afe2"/><stop offset="0.575" stop-color="#58ade1"/><stop offset="0.678" stop-color="#56a9de"/><stop offset="0.796" stop-color="#54a5da"/><stop offset="0.929" stop-color="#52a0d6"/><stop offset="1.000" stop-color="#529fd6"/></linearGradient><linearGradient id="w159" gradientUnits="userSpaceOnUse" x1="165.4" y1="391.5" x2="50.9" y2="461.7"><stop offset="0.000" stop-color="#ffffff"/><stop offset="0.022" stop-color="#fdfeff"/><stop offset="0.045" stop-color="#f7fbfd"/><stop offset="0.074" stop-color="#eaf5fb"/><stop offset="0.112" stop-color="#d3eaf6"/><stop offset="0.156" stop-color="#b3dbf0"/><stop offset="0.208" stop-color="#91caea"/><stop offset="0.268" stop-color="#75bce4"/><stop offset="0.335" stop-color="#63b4e1"/><stop offset="0.410" stop-color="#5cb0e0"/><stop offset="0.491" stop-color="#59afe0"/><stop offset="0.581" stop-color="#58addf"/><stop offset="0.685" stop-color="#57aadc"/><stop offset="0.804" stop-color="#55a6d9"/><stop offset="0.938" stop-color="#53a2d6"/><stop offset="1.000" stop-color="#53a1d6"/></linearGradient><linearGradient id="w160" gradientUnits="userSpaceOnUse" x1="165.4" y1="391.5" x2="50.1" y2="458.0"><stop offset="0.000" stop-color="#ffffff"/><stop offset="0.023" stop-color="#fdfeff"/><stop offset="0.045" stop-color="#f7fbfd"/><stop offset="0.075" stop-color="#e9f4fa"/><stop offset="0.113" stop-color="#d2e9f6"/><stop offset="0.158" stop-color="#b2daef"/><stop offset="0.210" stop-color="#8fc9e8"/><stop offset="0.270" stop-color="#73bce3"/><stop offset="0.338" stop-color="#62b3e0"/><stop offset="0.413" stop-color="#5bb0df"/><stop offset="0.496" stop-color="#59afdf"/><stop offset="0.586" stop-color="#58addd"/><stop offset="0.691" stop-color="#57aadb"/><stop offset="0.811" stop-color="#56a7d8"/><stop offset="0.947" stop-color="#54a4d5"/><stop offset="1.000" stop-color="#54a4d5"/></linearGradient><linearGradient id="w161" gradientUnits="userSpaceOnUse" x1="165.4" y1="391.5" x2="49.4" y2="454.5"><stop offset="0.000" stop-color="#ffffff"/><stop offset="0.023" stop-color="#fdfeff"/><stop offset="0.045" stop-color="#f6fbfd"/><stop offset="0.076" stop-color="#e8f4fa"/><stop offset="0.114" stop-color="#d0e8f5"/><stop offset="0.159" stop-color="#b0d9ee"/><stop offset="0.212" stop-color="#8dc8e7"/><stop offset="0.273" stop-color="#72bbe1"/><stop offset="0.341" stop-color="#62b3de"/><stop offset="0.417" stop-color="#5bb0dd"/><stop offset="0.500" stop-color="#59afdd"/><stop offset="0.591" stop-color="#59addc"/><stop offset="0.697" stop-color="#58abda"/><stop offset="0.818" stop-color="#56a8d7"/><stop offset="0.955" stop-color="#55a6d5"/><stop offset="1.000" stop-color="#55a6d5"/></linearGradient><linearGradient id="w162" gradientUnits="userSpaceOnUse" x1="165.4" y1="391.5" x2="48.6" y2="451.0"><stop offset="0.000" stop-color="#ffffff"/><stop offset="0.023" stop-color="#fdfeff"/><stop offset="0.046" stop-color="#f6fbfd"/><stop offset="0.076" stop-color="#e8f4fa"/><stop offset="0.114" stop-color="#cfe8f4"/><stop offset="0.160" stop-color="#aed8ed"/><stop offset="0.214" stop-color="#8bc7e5"/><stop offset="0.275" stop-color="#70bae0"/><stop offset="0.343" stop-color="#61b2dc"/><stop offset="0.420" stop-color="#5bafdc"/><stop offset="0.504" stop-color="#5aafdc"/><stop offset="0.595" stop-color="#59adda"/><stop offset="0.702" stop-color="#58acd9"/><stop offset="0.824" stop-color="#57aad7"/><stop offset="0.961" stop-color="#57a8d5"/><stop offset="1.000" stop-color="#57a8d5"/></linearGradient><linearGradient id="w163" gradientUnits="userSpaceOnUse" x1="165.4" y1="391.5" x2="48.0" y2="447.5"><stop offset="0.000" stop-color="#ffffff"/><stop offset="0.023" stop-color="#fdfefe"/><stop offset="0.046" stop-color="#f6fbfd"/><stop offset="0.077" stop-color="#e7f3f9"/><stop offset="0.115" stop-color="#cde7f4"/><stop offset="0.161" stop-color="#acd7ec"/><stop offset="0.215" stop-color="#89c6e4"/><stop offset="0.277" stop-color="#6fb9de"/><stop offset="0.346" stop-color="#60b2db"/><stop offset="0.423" stop-color="#5bafda"/><stop offset="0.507" stop-color="#5aafda"/><stop offset="0.599" stop-color="#59aed9"/><stop offset="0.707" stop-color="#59add8"/><stop offset="0.830" stop-color="#58abd6"/><stop offset="0.968" stop-color="#58aad5"/><stop offset="1.000" stop-color="#58aad5"/></linearGradient><linearGradient id="w164" gradientUnits="userSpaceOnUse" x1="165.4" y1="391.5" x2="47.3" y2="444.1"><stop offset="0.000" stop-color="#ffffff"/><stop offset="0.023" stop-color="#fdfefe"/><stop offset="0.046" stop-color="#f6fafd"/><stop offset="0.077" stop-color="#e6f3f9"/><stop offset="0.116" stop-color="#cce6f3"/><stop offset="0.162" stop-color="#aad6eb"/><stop offset="0.217" stop-color="#87c5e3"/><stop offset="0.279" stop-color="#6db8dc"/><stop offset="0.348" stop-color="#60b1d9"/><stop offset="0.426" stop-color="#5bafd8"/><stop offset="0.511" stop-color="#5aaed8"/><stop offset="0.603" stop-color="#5aaed8"/><stop offset="0.712" stop-color="#59aed6"/><stop offset="0.836" stop-color="#59add5"/><stop offset="0.975" stop-color="#59add4"/><stop offset="1.000" stop-color="#59add4"/></linearGradient><linearGradient id="w165" gradientUnits="userSpaceOnUse" x1="165.4" y1="391.5" x2="46.6" y2="440.7"><stop offset="0.000" stop-color="#ffffff"/><stop offset="0.023" stop-color="#fcfefe"/><stop offset="0.047" stop-color="#f5fafd"/><stop offset="0.078" stop-color="#e5f2f9"/><stop offset="0.117" stop-color="#cae5f2"/><stop offset="0.163" stop-color="#a8d4ea"/><stop offset="0.218" stop-color="#85c4e1"/><stop offset="0.280" stop-color="#6cb7db"/><stop offset="0.350" stop-color="#5fb1d8"/><stop offset="0.428" stop-color="#5bafd7"/><stop offset="0.513" stop-color="#5aaed7"/><stop offset="0.607" stop-color="#5aaed6"/><stop offset="0.715" stop-color="#5aaed5"/><stop offset="0.840" stop-color="#5aaed4"/><stop offset="0.980" stop-color="#5aaed4"/><stop offset="1.000" stop-color="#5aaed4"/></linearGradient><linearGradient id="w166" gradientUnits="userSpaceOnUse" x1="165.4" y1="391.5" x2="45.9" y2="437.4"><stop offset="0.000" stop-color="#ffffff"/><stop offset="0.023" stop-color="#fcfefe"/><stop offset="0.047" stop-color="#f5fafc"/><stop offset="0.078" stop-color="#e4f2f8"/><stop offset="0.117" stop-color="#c9e4f1"/><stop offset="0.164" stop-color="#a6d3e8"/><stop offset="0.219" stop-color="#83c2df"/><stop offset="0.281" stop-color="#6bb6d9"/><stop offset="0.352" stop-color="#5fb0d6"/><stop offset="0.430" stop-color="#5baed5"/><stop offset="0.516" stop-color="#5aaed5"/><stop offset="0.609" stop-color="#5aaed4"/><stop offset="0.719" stop-color="#5aaed4"/><stop offset="0.844" stop-color="#5aaed3"/><stop offset="0.984" stop-color="#5aaed2"/><stop offset="1.000" stop-color="#5aaed2"/></linearGradient><linearGradient id="w167" gradientUnits="userSpaceOnUse" x1="165.4" y1="391.5" x2="45.3" y2="434.0"><stop offset="0.000" stop-color="#ffffff"/><stop offset="0.024" stop-color="#fcfefe"/><stop offset="0.047" stop-color="#f4fafc"/><stop offset="0.078" stop-color="#e3f1f8"/><stop offset="0.118" stop-color="#c7e4f0"/><stop offset="0.165" stop-color="#a3d2e7"/><stop offset="0.220" stop-color="#81c1dd"/><stop offset="0.283" stop-color="#69b5d7"/><stop offset="0.353" stop-color="#5eb0d4"/><stop offset="0.432" stop-color="#5baed3"/><stop offset="0.518" stop-color="#5aaed3"/><stop offset="0.612" stop-color="#5aaed3"/><stop offset="0.722" stop-color="#5aaed2"/><stop offset="0.848" stop-color="#5aaed2"/><stop offset="0.989" stop-color="#5aaed1"/><stop offset="1.000" stop-color="#5aaed1"/></linearGradient><linearGradient id="w168" gradientUnits="userSpaceOnUse" x1="165.4" y1="391.5" x2="44.6" y2="430.7"><stop offset="0.000" stop-color="#ffffff"/><stop offset="0.024" stop-color="#fcfefe"/><stop offset="0.047" stop-color="#f4fafc"/><stop offset="0.079" stop-color="#e2f1f7"/><stop offset="0.118" stop-color="#c5e3ef"/><stop offset="0.165" stop-color="#a1d1e4"/><stop offset="0.221" stop-color="#7fc0db"/><stop offset="0.284" stop-color="#68b4d4"/><stop offset="0.354" stop-color="#5dafd1"/><stop offset="0.433" stop-color="#5aaed0"/><stop offset="0.520" stop-color="#5aaed0"/><stop offset="0.614" stop-color="#5aaed0"/><stop offset="0.725" stop-color="#5aaed0"/><stop offset="0.851" stop-color="#5aaed0"/><stop offset="0.992" stop-color="#5aaed0"/><stop offset="1.000" stop-color="#5aaed0"/></linearGradient><linearGradient id="w169" gradientUnits="userSpaceOnUse" x1="165.4" y1="391.5" x2="44.0" y2="427.5"><stop offset="0.000" stop-color="#ffffff"/><stop offset="0.024" stop-color="#fcfefe"/><stop offset="0.047" stop-color="#f4f9fc"/><stop offset="0.079" stop-color="#e1f0f6"/><stop offset="0.118" stop-color="#c3e2ed"/><stop offset="0.166" stop-color="#9ecfe2"/><stop offset="0.221" stop-color="#7cbfd8"/><stop offset="0.284" stop-color="#66b4d1"/><stop offset="0.355" stop-color="#5cafce"/><stop offset="0.434" stop-color="#5aaecd"/><stop offset="0.521" stop-color="#59adcd"/><stop offset="0.616" stop-color="#59adce"/><stop offset="0.727" stop-color="#5aaece"/><stop offset="0.853" stop-color="#5aaecf"/><stop offset="0.995" stop-color="#5aaecf"/><stop offset="1.000" stop-color="#5aaecf"/></linearGradient><linearGradient id="w170" gradientUnits="userSpaceOnUse" x1="165.4" y1="391.5" x2="43.4" y2="424.2"><stop offset="0.000" stop-color="#ffffff"/><stop offset="0.024" stop-color="#fcfdfe"/><stop offset="0.048" stop-color="#f3f9fb"/><stop offset="0.079" stop-color="#e0f0f5"/><stop offset="0.119" stop-color="#c1e1eb"/><stop offset="0.166" stop-color="#9ccee0"/><stop offset="0.222" stop-color="#7abdd5"/><stop offset="0.285" stop-color="#64b3ce"/><stop offset="0.356" stop-color="#5caecb"/><stop offset="0.435" stop-color="#59adcb"/><stop offset="0.523" stop-color="#59adcb"/><stop offset="0.618" stop-color="#59adcb"/><stop offset="0.728" stop-color="#5aaecc"/><stop offset="0.855" stop-color="#5aaecd"/><stop offset="0.998" stop-color="#5aaece"/><stop offset="1.000" stop-color="#5aaece"/></linearGradient><linearGradient id="w171" gradientUnits="userSpaceOnUse" x1="165.4" y1="391.5" x2="42.8" y2="420.9"><stop offset="0.000" stop-color="#ffffff"/><stop offset="0.024" stop-color="#fcfdfe"/><stop offset="0.048" stop-color="#f3f9fb"/><stop offset="0.079" stop-color="#dfeff4"/><stop offset="0.119" stop-color="#c0e0ea"/><stop offset="0.167" stop-color="#9acddd"/><stop offset="0.222" stop-color="#78bcd2"/><stop offset="0.285" stop-color="#63b2cb"/><stop offset="0.357" stop-color="#5baec8"/><stop offset="0.436" stop-color="#59adc8"/><stop offset="0.523" stop-color="#59adc8"/><stop offset="0.619" stop-color="#59adc9"/><stop offset="0.730" stop-color="#59adca"/><stop offset="0.856" stop-color="#5aaecb"/><stop offset="0.999" stop-color="#5aaecc"/><stop offset="1.000" stop-color="#5aaecc"/></linearGradient><linearGradient id="w172" gradientUnits="userSpaceOnUse" x1="165.4" y1="391.5" x2="42.2" y2="417.7"><stop offset="0.000" stop-color="#ffffff"/><stop offset="0.024" stop-color="#fcfdfe"/><stop offset="0.048" stop-color="#f3f9fb"/><stop offset="0.079" stop-color="#dfeff4"/><stop offset="0.119" stop-color="#bfdfe9"/><stop offset="0.167" stop-color="#99ccdb"/><stop offset="0.222" stop-color="#77bcd0"/><stop offset="0.286" stop-color="#63b1c8"/><stop offset="0.357" stop-color="#5badc6"/><stop offset="0.437" stop-color="#59adc5"/><stop offset="0.524" stop-color="#58acc5"/><stop offset="0.619" stop-color="#59adc6"/><stop offset="0.730" stop-color="#59adc8"/><stop offset="0.857" stop-color="#5aaeca"/><stop offset="1.000" stop-color="#5aaecb"/></linearGradient><linearGradient id="w173" gradientUnits="userSpaceOnUse" x1="165.4" y1="391.5" x2="41.6" y2="414.5"><stop offset="0.000" stop-color="#ffffff"/><stop offset="0.024" stop-color="#fcfdfe"/><stop offset="0.048" stop-color="#f2f9fa"/><stop offset="0.079" stop-color="#deeff3"/><stop offset="0.119" stop-color="#bedfe7"/><stop offset="0.167" stop-color="#97cbd9"/><stop offset="0.222" stop-color="#76bbcd"/><stop offset="0.286" stop-color="#62b1c5"/><stop offset="0.357" stop-color="#5aadc3"/><stop offset="0.437" stop-color="#58acc2"/><stop offset="0.524" stop-color="#58acc2"/><stop offset="0.619" stop-color="#59adc4"/><stop offset="0.730" stop-color="#59adc6"/><stop offset="0.857" stop-color="#5aaec8"/><stop offset="1.000" stop-color="#5aaeca"/></linearGradient><linearGradient id="w174" gradientUnits="userSpaceOnUse" x1="165.4" y1="391.5" x2="41.0" y2="411.2"><stop offset="0.000" stop-color="#ffffff"/><stop offset="0.024" stop-color="#fcfdfe"/><stop offset="0.048" stop-color="#f2f9fa"/><stop offset="0.079" stop-color="#ddeef2"/><stop offset="0.119" stop-color="#bcdee6"/><stop offset="0.167" stop-color="#96cbd7"/><stop offset="0.222" stop-color="#74baca"/><stop offset="0.286" stop-color="#61b0c3"/><stop offset="0.357" stop-color="#5aadc0"/><stop offset="0.437" stop-color="#58acbf"/><stop offset="0.524" stop-color="#58acbf"/><stop offset="0.619" stop-color="#58acc1"/><stop offset="0.730" stop-color="#59adc4"/><stop offset="0.857" stop-color="#5aaec7"/><stop offset="1.000" stop-color="#5aaec9"/></linearGradient><linearGradient id="w175" gradientUnits="userSpaceOnUse" x1="165.4" y1="391.5" x2="40.5" y2="407.9"><stop offset="0.000" stop-color="#ffffff"/><stop offset="0.024" stop-color="#fcfdfe"/><stop offset="0.048" stop-color="#f2f8fa"/><stop offset="0.079" stop-color="#dceef1"/><stop offset="0.119" stop-color="#bbdde4"/><stop offset="0.167" stop-color="#94cad4"/><stop offset="0.222" stop-color="#73b9c7"/><stop offset="0.286" stop-color="#60b0c0"/><stop offset="0.357" stop-color="#59acbd"/><stop offset="0.437" stop-color="#58acbc"/><stop offset="0.524" stop-color="#58acbc"/><stop offset="0.619" stop-color="#58acbf"/><stop offset="0.730" stop-color="#59adc2"/><stop offset="0.857" stop-color="#59adc5"/><stop offset="1.000" stop-color="#5aaec7"/></linearGradient><linearGradient id="w176" gradientUnits="userSpaceOnUse" x1="165.4" y1="391.5" x2="40.0" y2="404.7"><stop offset="0.000" stop-color="#ffffff"/><stop offset="0.024" stop-color="#fbfdfe"/><stop offset="0.048" stop-color="#f1f8f9"/><stop offset="0.079" stop-color="#dcedf0"/><stop offset="0.119" stop-color="#badce2"/><stop offset="0.167" stop-color="#92c9d2"/><stop offset="0.222" stop-color="#71b8c4"/><stop offset="0.286" stop-color="#5fafbd"/><stop offset="0.357" stop-color="#59acba"/><stop offset="0.436" stop-color="#57abb9"/><stop offset="0.524" stop-color="#57abba"/><stop offset="0.619" stop-color="#58acbc"/><stop offset="0.730" stop-color="#59acbf"/><stop offset="0.857" stop-color="#59adc3"/><stop offset="0.999" stop-color="#5aaec5"/><stop offset="1.000" stop-color="#5aaec5"/></linearGradient><linearGradient id="w177" gradientUnits="userSpaceOnUse" x1="165.4" y1="391.5" x2="39.6" y2="401.4"><stop offset="0.000" stop-color="#ffffff"/><stop offset="0.024" stop-color="#fbfdfd"/><stop offset="0.048" stop-color="#f1f8f9"/><stop offset="0.079" stop-color="#dbedef"/><stop offset="0.119" stop-color="#b8dce1"/><stop offset="0.166" stop-color="#91c8cf"/><stop offset="0.222" stop-color="#70b7c1"/><stop offset="0.285" stop-color="#5eafba"/><stop offset="0.357" stop-color="#58acb7"/><stop offset="0.436" stop-color="#57abb7"/><stop offset="0.523" stop-color="#57abb7"/><stop offset="0.618" stop-color="#58abb9"/><stop offset="0.729" stop-color="#58acbd"/><stop offset="0.856" stop-color="#59adc0"/><stop offset="0.998" stop-color="#5aadc2"/><stop offset="1.000" stop-color="#5aadc2"/></linearGradient><linearGradient id="w178" gradientUnits="userSpaceOnUse" x1="165.4" y1="391.5" x2="39.1" y2="398.1"><stop offset="0.000" stop-color="#ffffff"/><stop offset="0.024" stop-color="#fbfdfd"/><stop offset="0.047" stop-color="#f1f8f9"/><stop offset="0.079" stop-color="#daecee"/><stop offset="0.119" stop-color="#b7dbdf"/><stop offset="0.166" stop-color="#8fc7cd"/><stop offset="0.221" stop-color="#6fb7be"/><stop offset="0.285" stop-color="#5daeb7"/><stop offset="0.356" stop-color="#58abb4"/><stop offset="0.435" stop-color="#57abb4"/><stop offset="0.522" stop-color="#57abb4"/><stop offset="0.617" stop-color="#57abb7"/><stop offset="0.728" stop-color="#58acba"/><stop offset="0.854" stop-color="#59adbe"/><stop offset="0.996" stop-color="#5aadc0"/><stop offset="1.000" stop-color="#5aadc0"/></linearGradient><linearGradient id="w179" gradientUnits="userSpaceOnUse" x1="165.4" y1="391.5" x2="38.7" y2="394.8"><stop offset="0.000" stop-color="#ffffff"/><stop offset="0.024" stop-color="#fbfdfd"/><stop offset="0.047" stop-color="#f0f8f8"/><stop offset="0.079" stop-color="#d9eced"/><stop offset="0.118" stop-color="#b6dadd"/><stop offset="0.166" stop-color="#8dc6ca"/><stop offset="0.221" stop-color="#6db6bc"/><stop offset="0.284" stop-color="#5dadb4"/><stop offset="0.355" stop-color="#57abb1"/><stop offset="0.434" stop-color="#56aab1"/><stop offset="0.521" stop-color="#56aab1"/><stop offset="0.615" stop-color="#57abb4"/><stop offset="0.726" stop-color="#58abb7"/><stop offset="0.852" stop-color="#59acbb"/><stop offset="0.994" stop-color="#59adbe"/><stop offset="1.000" stop-color="#59adbe"/></linearGradient><linearGradient id="w180" gradientUnits="userSpaceOnUse" x1="165.4" y1="391.5" x2="38.3" y2="391.5"><stop offset="0.000" stop-color="#ffffff"/><stop offset="0.024" stop-color="#fbfdfd"/><stop offset="0.047" stop-color="#f0f7f8"/><stop offset="0.079" stop-color="#d8ecec"/><stop offset="0.118" stop-color="#b4d9db"/><stop offset="0.165" stop-color="#8cc5c8"/><stop offset="0.220" stop-color="#6cb5b9"/><stop offset="0.283" stop-color="#5cadb1"/><stop offset="0.354" stop-color="#57aaae"/><stop offset="0.433" stop-color="#56aaae"/><stop offset="0.519" stop-color="#56aaae"/><stop offset="0.614" stop-color="#57abb1"/><stop offset="0.724" stop-color="#58abb5"/><stop offset="0.850" stop-color="#59acb8"/><stop offset="0.991" stop-color="#59acbb"/><stop offset="1.000" stop-color="#59acbb"/></linearGradient><linearGradient id="w181" gradientUnits="userSpaceOnUse" x1="165.4" y1="391.5" x2="37.8" y2="388.2"><stop offset="0.000" stop-color="#ffffff"/><stop offset="0.024" stop-color="#fbfdfd"/><stop offset="0.047" stop-color="#f0f7f7"/><stop offset="0.078" stop-color="#d7ebec"/><stop offset="0.118" stop-color="#b3d9da"/><stop offset="0.165" stop-color="#8ac4c6"/><stop offset="0.219" stop-color="#6bb4b7"/><stop offset="0.282" stop-color="#5badaf"/><stop offset="0.353" stop-color="#57aaad"/><stop offset="0.431" stop-color="#56aaad"/><stop offset="0.517" stop-color="#56aaad"/><stop offset="0.611" stop-color="#57aaaf"/><stop offset="0.721" stop-color="#58abb3"/><stop offset="0.846" stop-color="#58acb6"/><stop offset="0.987" stop-color="#59acb9"/><stop offset="1.000" stop-color="#59acb9"/></linearGradient><linearGradient id="w182" gradientUnits="userSpaceOnUse" x1="165.4" y1="391.5" x2="37.4" y2="384.8"><stop offset="0.000" stop-color="#ffffff"/><stop offset="0.023" stop-color="#fbfdfd"/><stop offset="0.047" stop-color="#eff7f7"/><stop offset="0.078" stop-color="#d7ebeb"/><stop offset="0.117" stop-color="#b1d8d9"/><stop offset="0.164" stop-color="#89c3c4"/><stop offset="0.218" stop-color="#6ab4b5"/><stop offset="0.281" stop-color="#5bacae"/><stop offset="0.351" stop-color="#57aaac"/><stop offset="0.429" stop-color="#56aaab"/><stop offset="0.515" stop-color="#56aaab"/><stop offset="0.608" stop-color="#57aaae"/><stop offset="0.718" stop-color="#58abb1"/><stop offset="0.842" stop-color="#58abb4"/><stop offset="0.983" stop-color="#59acb6"/><stop offset="1.000" stop-color="#59acb6"/></linearGradient><linearGradient id="w183" gradientUnits="userSpaceOnUse" x1="165.4" y1="391.5" x2="37.0" y2="381.4"><stop offset="0.000" stop-color="#ffffff"/><stop offset="0.023" stop-color="#fbfdfd"/><stop offset="0.047" stop-color="#eff7f7"/><stop offset="0.078" stop-color="#d6eaea"/><stop offset="0.116" stop-color="#b0d7d7"/><stop offset="0.163" stop-color="#87c3c3"/><stop offset="0.217" stop-color="#69b3b3"/><stop offset="0.279" stop-color="#5bacac"/><stop offset="0.349" stop-color="#57aaaa"/><stop offset="0.427" stop-color="#57aaaa"/><stop offset="0.512" stop-color="#57aaaa"/><stop offset="0.606" stop-color="#57aaac"/><stop offset="0.714" stop-color="#58abaf"/><stop offset="0.838" stop-color="#58abb2"/><stop offset="0.978" stop-color="#59acb4"/><stop offset="1.000" stop-color="#59acb4"/></linearGradient><linearGradient id="w184" gradientUnits="userSpaceOnUse" x1="165.4" y1="391.5" x2="36.5" y2="378.0"><stop offset="0.000" stop-color="#ffffff"/><stop offset="0.023" stop-color="#fbfdfd"/><stop offset="0.046" stop-color="#eef7f7"/><stop offset="0.077" stop-color="#d5eae9"/><stop offset="0.116" stop-color="#afd6d6"/><stop offset="0.162" stop-color="#86c2c1"/><stop offset="0.216" stop-color="#68b3b2"/><stop offset="0.278" stop-color="#5bacab"/><stop offset="0.347" stop-color="#57aaa9"/><stop offset="0.424" stop-color="#57aaa9"/><stop offset="0.509" stop-color="#57aaa9"/><stop offset="0.602" stop-color="#57aaaa"/><stop offset="0.710" stop-color="#58abad"/><stop offset="0.833" stop-color="#58abaf"/><stop offset="0.972" stop-color="#59abb2"/><stop offset="1.000" stop-color="#59abb2"/></linearGradient><linearGradient id="w185" gradientUnits="userSpaceOnUse" x1="165.4" y1="391.5" x2="36.1" y2="374.5"><stop offset="0.000" stop-color="#ffffff"/><stop offset="0.023" stop-color="#fbfdfd"/><stop offset="0.046" stop-color="#eef6f6"/><stop offset="0.077" stop-color="#d4e9e9"/><stop offset="0.115" stop-color="#add6d4"/><stop offset="0.161" stop-color="#85c1bf"/><stop offset="0.215" stop-color="#67b2b0"/><stop offset="0.276" stop-color="#5aaca9"/><stop offset="0.345" stop-color="#57aaa8"/><stop offset="0.422" stop-color="#57aaa7"/><stop offset="0.506" stop-color="#57aaa7"/><stop offset="0.598" stop-color="#57aaa9"/><stop offset="0.706" stop-color="#58aaab"/><stop offset="0.828" stop-color="#58abad"/><stop offset="0.966" stop-color="#58abaf"/><stop offset="1.000" stop-color="#58abaf"/></linearGradient><linearGradient id="w186" gradientUnits="userSpaceOnUse" x1="165.4" y1="391.5" x2="35.7" y2="371.0"><stop offset="0.000" stop-color="#ffffff"/><stop offset="0.023" stop-color="#fafdfd"/><stop offset="0.046" stop-color="#eef6f6"/><stop offset="0.076" stop-color="#d3e9e8"/><stop offset="0.114" stop-color="#acd5d3"/><stop offset="0.160" stop-color="#83c0bd"/><stop offset="0.213" stop-color="#67b2ae"/><stop offset="0.274" stop-color="#5aaca8"/><stop offset="0.343" stop-color="#57aaa6"/><stop offset="0.419" stop-color="#57aaa6"/><stop offset="0.502" stop-color="#57aaa6"/><stop offset="0.594" stop-color="#57aaa7"/><stop offset="0.700" stop-color="#58aaa9"/><stop offset="0.822" stop-color="#58aaab"/><stop offset="0.959" stop-color="#58abad"/><stop offset="1.000" stop-color="#58abad"/></linearGradient><linearGradient id="w187" gradientUnits="userSpaceOnUse" x1="165.4" y1="391.5" x2="35.2" y2="367.4"><stop offset="0.000" stop-color="#ffffff"/><stop offset="0.023" stop-color="#fafdfd"/><stop offset="0.045" stop-color="#edf6f6"/><stop offset="0.076" stop-color="#d2e8e7"/><stop offset="0.113" stop-color="#abd4d2"/><stop offset="0.159" stop-color="#82c0bc"/><stop offset="0.211" stop-color="#66b2ad"/><stop offset="0.272" stop-color="#5aaca6"/><stop offset="0.340" stop-color="#57aaa5"/><stop offset="0.415" stop-color="#57aaa5"/><stop offset="0.498" stop-color="#57aaa5"/><stop offset="0.589" stop-color="#57aaa6"/><stop offset="0.695" stop-color="#58aaa7"/><stop offset="0.815" stop-color="#58aaa9"/><stop offset="0.951" stop-color="#58aaaa"/><stop offset="1.000" stop-color="#58aaaa"/></linearGradient><linearGradient id="w188" gradientUnits="userSpaceOnUse" x1="165.4" y1="391.5" x2="34.7" y2="363.7"><stop offset="0.000" stop-color="#ffffff"/><stop offset="0.022" stop-color="#fafdfc"/><stop offset="0.045" stop-color="#edf6f5"/><stop offset="0.075" stop-color="#d2e8e7"/><stop offset="0.112" stop-color="#abd4d1"/><stop offset="0.157" stop-color="#82c0bb"/><stop offset="0.210" stop-color="#66b2ab"/><stop offset="0.269" stop-color="#5aaca5"/><stop offset="0.337" stop-color="#58aaa4"/><stop offset="0.412" stop-color="#57aaa3"/><stop offset="0.494" stop-color="#57aaa3"/><stop offset="0.584" stop-color="#57aaa4"/><stop offset="0.689" stop-color="#58aaa5"/><stop offset="0.808" stop-color="#58aaa7"/><stop offset="0.943" stop-color="#58aaa8"/><stop offset="1.000" stop-color="#58aaa8"/></linearGradient><linearGradient id="w189" gradientUnits="userSpaceOnUse" x1="165.4" y1="391.5" x2="34.3" y2="360.0"><stop offset="0.000" stop-color="#ffffff"/><stop offset="0.022" stop-color="#fafdfc"/><stop offset="0.044" stop-color="#edf6f5"/><stop offset="0.074" stop-color="#d3e8e6"/><stop offset="0.111" stop-color="#abd4d0"/><stop offset="0.156" stop-color="#82c0ba"/><stop offset="0.208" stop-color="#66b2aa"/><stop offset="0.267" stop-color="#5baca4"/><stop offset="0.334" stop-color="#58aaa2"/><stop offset="0.408" stop-color="#58aaa2"/><stop offset="0.489" stop-color="#58aaa2"/><stop offset="0.578" stop-color="#58aaa3"/><stop offset="0.682" stop-color="#58aaa4"/><stop offset="0.801" stop-color="#58aaa5"/><stop offset="0.934" stop-color="#58aaa6"/><stop offset="1.000" stop-color="#58aaa6"/></linearGradient><linearGradient id="w190" gradientUnits="userSpaceOnUse" x1="165.4" y1="391.5" x2="33.9" y2="356.3"><stop offset="0.000" stop-color="#ffffff"/><stop offset="0.022" stop-color="#fafdfc"/><stop offset="0.044" stop-color="#edf6f5"/><stop offset="0.073" stop-color="#d3e8e6"/><stop offset="0.110" stop-color="#abd4d0"/><stop offset="0.154" stop-color="#83c0b9"/><stop offset="0.206" stop-color="#67b2a9"/><stop offset="0.264" stop-color="#5baca2"/><stop offset="0.330" stop-color="#58aaa1"/><stop offset="0.404" stop-color="#58aaa1"/><stop offset="0.485" stop-color="#58aaa1"/><stop offset="0.573" stop-color="#58aaa1"/><stop offset="0.676" stop-color="#58aaa2"/><stop offset="0.793" stop-color="#58aaa3"/><stop offset="0.925" stop-color="#58aaa4"/><stop offset="1.000" stop-color="#58aaa4"/></linearGradient><linearGradient id="w191" gradientUnits="userSpaceOnUse" x1="165.4" y1="391.5" x2="33.5" y2="352.4"><stop offset="0.000" stop-color="#ffffff"/><stop offset="0.022" stop-color="#fafdfc"/><stop offset="0.044" stop-color="#edf6f5"/><stop offset="0.073" stop-color="#d3e8e6"/><stop offset="0.109" stop-color="#abd4cf"/><stop offset="0.153" stop-color="#83c0b8"/><stop offset="0.203" stop-color="#67b2a8"/><stop offset="0.262" stop-color="#5baca1"/><stop offset="0.327" stop-color="#58aaa0"/><stop offset="0.400" stop-color="#58aa9f"/><stop offset="0.480" stop-color="#58aa9f"/><stop offset="0.567" stop-color="#58aaa0"/><stop offset="0.669" stop-color="#58aaa0"/><stop offset="0.785" stop-color="#58aaa1"/><stop offset="0.916" stop-color="#57aaa2"/><stop offset="1.000" stop-color="#57a9a2"/></linearGradient><linearGradient id="w192" gradientUnits="userSpaceOnUse" x1="165.4" y1="391.5" x2="32.9" y2="348.4"><stop offset="0.000" stop-color="#ffffff"/><stop offset="0.022" stop-color="#fafdfc"/><stop offset="0.043" stop-color="#edf6f5"/><stop offset="0.072" stop-color="#d3e8e5"/><stop offset="0.108" stop-color="#abd4ce"/><stop offset="0.151" stop-color="#83c0b7"/><stop offset="0.201" stop-color="#67b2a7"/><stop offset="0.258" stop-color="#5baca0"/><stop offset="0.323" stop-color="#58aa9e"/><stop offset="0.395" stop-color="#58aa9e"/><stop offset="0.474" stop-color="#58aa9e"/><stop offset="0.560" stop-color="#58aa9e"/><stop offset="0.660" stop-color="#58aa9f"/><stop offset="0.775" stop-color="#58aa9f"/><stop offset="0.904" stop-color="#57a99f"/><stop offset="1.000" stop-color="#57a9a0"/></linearGradient><linearGradient id="w193" gradientUnits="userSpaceOnUse" x1="165.4" y1="391.5" x2="32.6" y2="344.5"><stop offset="0.000" stop-color="#ffffff"/><stop offset="0.021" stop-color="#fafdfc"/><stop offset="0.043" stop-color="#edf6f5"/><stop offset="0.071" stop-color="#d3e8e5"/><stop offset="0.106" stop-color="#abd4ce"/><stop offset="0.149" stop-color="#83c0b6"/><stop offset="0.199" stop-color="#67b1a5"/><stop offset="0.255" stop-color="#5bab9e"/><stop offset="0.319" stop-color="#58aa9d"/><stop offset="0.390" stop-color="#58aa9d"/><stop offset="0.468" stop-color="#58aa9d"/><stop offset="0.554" stop-color="#58aa9d"/><stop offset="0.653" stop-color="#58aa9d"/><stop offset="0.766" stop-color="#57a99d"/><stop offset="0.894" stop-color="#57a99d"/><stop offset="1.000" stop-color="#57a99d"/></linearGradient><linearGradient id="w194" gradientUnits="userSpaceOnUse" x1="165.4" y1="391.5" x2="32.1" y2="340.3"><stop offset="0.000" stop-color="#ffffff"/><stop offset="0.021" stop-color="#fafdfc"/><stop offset="0.042" stop-color="#edf6f4"/><stop offset="0.070" stop-color="#d3e8e4"/><stop offset="0.105" stop-color="#abd4cd"/><stop offset="0.147" stop-color="#82bfb5"/><stop offset="0.196" stop-color="#66b1a4"/><stop offset="0.252" stop-color="#5bab9d"/><stop offset="0.315" stop-color="#58aa9b"/><stop offset="0.385" stop-color="#58aa9b"/><stop offset="0.462" stop-color="#58aa9b"/><stop offset="0.546" stop-color="#57a99b"/><stop offset="0.644" stop-color="#57a99b"/><stop offset="0.756" stop-color="#57a99b"/><stop offset="0.882" stop-color="#57a99b"/><stop offset="1.000" stop-color="#57a99b"/></linearGradient><linearGradient id="w195" gradientUnits="userSpaceOnUse" x1="165.4" y1="391.5" x2="31.7" y2="336.1"><stop offset="0.000" stop-color="#ffffff"/><stop offset="0.021" stop-color="#fafdfc"/><stop offset="0.041" stop-color="#edf6f4"/><stop offset="0.069" stop-color="#d2e8e4"/><stop offset="0.104" stop-color="#abd4cc"/><stop offset="0.145" stop-color="#82bfb4"/><stop offset="0.193" stop-color="#66b1a3"/><stop offset="0.249" stop-color="#5aab9b"/><stop offset="0.311" stop-color="#58a99a"/><stop offset="0.380" stop-color="#57a99a"/><stop offset="0.456" stop-color="#57a99a"/><stop offset="0.539" stop-color="#57a999"/><stop offset="0.636" stop-color="#57a999"/><stop offset="0.746" stop-color="#57a999"/><stop offset="0.871" stop-color="#57a999"/><stop offset="1.000" stop-color="#57a999"/></linearGradient><linearGradient id="w196" gradientUnits="userSpaceOnUse" x1="165.4" y1="391.5" x2="31.5" y2="331.9"><stop offset="0.000" stop-color="#ffffff"/><stop offset="0.020" stop-color="#fafdfc"/><stop offset="0.041" stop-color="#edf6f4"/><stop offset="0.068" stop-color="#d2e8e4"/><stop offset="0.102" stop-color="#abd4cb"/><stop offset="0.143" stop-color="#82bfb2"/><stop offset="0.191" stop-color="#66b1a1"/><stop offset="0.246" stop-color="#5aab9a"/><stop offset="0.307" stop-color="#57a998"/><stop offset="0.375" stop-color="#57a998"/><stop offset="0.450" stop-color="#57a998"/><stop offset="0.532" stop-color="#57a998"/><stop offset="0.627" stop-color="#57a998"/><stop offset="0.737" stop-color="#57a998"/><stop offset="0.859" stop-color="#57a997"/><stop offset="0.996" stop-color="#57a997"/><stop offset="1.000" stop-color="#57a997"/></linearGradient><linearGradient id="w197" gradientUnits="userSpaceOnUse" x1="165.4" y1="391.5" x2="31.0" y2="327.4"><stop offset="0.000" stop-color="#ffffff"/><stop offset="0.020" stop-color="#fafdfc"/><stop offset="0.040" stop-color="#edf6f4"/><stop offset="0.067" stop-color="#d2e8e3"/><stop offset="0.101" stop-color="#abd4cb"/><stop offset="0.141" stop-color="#82bfb1"/><stop offset="0.188" stop-color="#66b0a0"/><stop offset="0.242" stop-color="#5aaa98"/><stop offset="0.302" stop-color="#57a997"/><stop offset="0.369" stop-color="#57a997"/><stop offset="0.443" stop-color="#57a997"/><stop offset="0.524" stop-color="#57a996"/><stop offset="0.618" stop-color="#57a996"/><stop offset="0.725" stop-color="#57a996"/><stop offset="0.846" stop-color="#56a895"/><stop offset="0.981" stop-color="#56a895"/><stop offset="1.000" stop-color="#56a895"/></linearGradient><linearGradient id="w198" gradientUnits="userSpaceOnUse" x1="165.4" y1="391.5" x2="30.9" y2="323.0"><stop offset="0.000" stop-color="#ffffff"/><stop offset="0.020" stop-color="#fafdfc"/><stop offset="0.040" stop-color="#edf6f4"/><stop offset="0.066" stop-color="#d2e8e3"/><stop offset="0.099" stop-color="#abd4ca"/><stop offset="0.139" stop-color="#82bfb0"/><stop offset="0.185" stop-color="#65b09e"/><stop offset="0.238" stop-color="#5aaa97"/><stop offset="0.298" stop-color="#57a995"/><stop offset="0.364" stop-color="#57a995"/><stop offset="0.437" stop-color="#57a995"/><stop offset="0.517" stop-color="#57a995"/><stop offset="0.609" stop-color="#56a895"/><stop offset="0.715" stop-color="#56a894"/><stop offset="0.835" stop-color="#56a893"/><stop offset="0.967" stop-color="#56a893"/><stop offset="1.000" stop-color="#56a893"/></linearGradient><linearGradient id="w199" gradientUnits="userSpaceOnUse" x1="165.4" y1="391.5" x2="30.6" y2="318.3"><stop offset="0.000" stop-color="#ffffff"/><stop offset="0.020" stop-color="#fafdfc"/><stop offset="0.039" stop-color="#edf6f4"/><stop offset="0.065" stop-color="#d2e8e2"/><stop offset="0.098" stop-color="#abd4c9"/><stop offset="0.137" stop-color="#82beaf"/><stop offset="0.183" stop-color="#65b09d"/><stop offset="0.235" stop-color="#59aa95"/><stop offset="0.293" stop-color="#57a894"/><stop offset="0.358" stop-color="#56a894"/><stop offset="0.430" stop-color="#56a894"/><stop offset="0.508" stop-color="#56a894"/><stop offset="0.600" stop-color="#56a893"/><stop offset="0.704" stop-color="#56a892"/><stop offset="0.821" stop-color="#56a892"/><stop offset="0.952" stop-color="#56a891"/><stop offset="1.000" stop-color="#56a891"/></linearGradient><linearGradient id="w200" gradientUnits="userSpaceOnUse" x1="165.4" y1="391.5" x2="30.1" y2="313.4"><stop offset="0.000" stop-color="#ffffff"/><stop offset="0.019" stop-color="#fafdfc"/><stop offset="0.038" stop-color="#edf6f4"/><stop offset="0.064" stop-color="#d2e8e2"/><stop offset="0.096" stop-color="#aad3c8"/><stop offset="0.134" stop-color="#81beae"/><stop offset="0.179" stop-color="#65b09c"/><stop offset="0.230" stop-color="#59aa94"/><stop offset="0.288" stop-color="#56a892"/><stop offset="0.352" stop-color="#56a892"/><stop offset="0.422" stop-color="#56a892"/><stop offset="0.499" stop-color="#56a892"/><stop offset="0.589" stop-color="#56a891"/><stop offset="0.691" stop-color="#56a890"/><stop offset="0.806" stop-color="#56a88e"/><stop offset="0.934" stop-color="#56a88d"/><stop offset="1.000" stop-color="#56a88d"/></linearGradient><linearGradient id="w201" gradientUnits="userSpaceOnUse" x1="165.4" y1="391.5" x2="29.9" y2="308.5"><stop offset="0.000" stop-color="#ffffff"/><stop offset="0.019" stop-color="#fafdfc"/><stop offset="0.038" stop-color="#edf6f4"/><stop offset="0.063" stop-color="#d2e8e2"/><stop offset="0.094" stop-color="#aad3c8"/><stop offset="0.132" stop-color="#81beae"/><stop offset="0.176" stop-color="#65b09b"/><stop offset="0.227" stop-color="#59aa94"/><stop offset="0.283" stop-color="#56a892"/><stop offset="0.346" stop-color="#56a891"/><stop offset="0.415" stop-color="#56a891"/><stop offset="0.491" stop-color="#56a891"/><stop offset="0.579" stop-color="#56a88f"/><stop offset="0.680" stop-color="#56a78d"/><stop offset="0.793" stop-color="#56a78b"/><stop offset="0.919" stop-color="#56a788"/><stop offset="1.000" stop-color="#56a788"/></linearGradient><linearGradient id="w202" gradientUnits="userSpaceOnUse" x1="165.4" y1="391.5" x2="29.6" y2="303.3"><stop offset="0.000" stop-color="#ffffff"/><stop offset="0.019" stop-color="#fafdfc"/><stop offset="0.037" stop-color="#edf6f3"/><stop offset="0.062" stop-color="#d2e8e2"/><stop offset="0.093" stop-color="#aad3c8"/><stop offset="0.130" stop-color="#81beae"/><stop offset="0.173" stop-color="#65b09b"/><stop offset="0.222" stop-color="#59aa93"/><stop offset="0.278" stop-color="#56a891"/><stop offset="0.340" stop-color="#56a891"/><stop offset="0.407" stop-color="#56a890"/><stop offset="0.482" stop-color="#56a890"/><stop offset="0.568" stop-color="#56a78e"/><stop offset="0.667" stop-color="#56a78b"/><stop offset="0.778" stop-color="#56a788"/><stop offset="0.901" stop-color="#57a784"/><stop offset="1.000" stop-color="#57a682"/></linearGradient><linearGradient id="w203" gradientUnits="userSpaceOnUse" x1="165.4" y1="391.5" x2="29.1" y2="297.8"><stop offset="0.000" stop-color="#ffffff"/><stop offset="0.018" stop-color="#fafdfc"/><stop offset="0.036" stop-color="#edf6f3"/><stop offset="0.060" stop-color="#d2e8e2"/><stop offset="0.091" stop-color="#aad3c8"/><stop offset="0.127" stop-color="#81bead"/><stop offset="0.169" stop-color="#65b09b"/><stop offset="0.218" stop-color="#59aa93"/><stop offset="0.272" stop-color="#56a891"/><stop offset="0.332" stop-color="#56a890"/><stop offset="0.399" stop-color="#56a88f"/><stop offset="0.471" stop-color="#56a78f"/><stop offset="0.556" stop-color="#56a78d"/><stop offset="0.653" stop-color="#56a789"/><stop offset="0.762" stop-color="#57a685"/><stop offset="0.883" stop-color="#57a680"/><stop offset="1.000" stop-color="#57a67d"/></linearGradient><linearGradient id="w204" gradientUnits="userSpaceOnUse" x1="165.4" y1="391.5" x2="28.7" y2="292.2"><stop offset="0.000" stop-color="#ffffff"/><stop offset="0.018" stop-color="#fafdfc"/><stop offset="0.035" stop-color="#eef6f4"/><stop offset="0.059" stop-color="#d3e8e2"/><stop offset="0.089" stop-color="#abd4c9"/><stop offset="0.124" stop-color="#82bfae"/><stop offset="0.166" stop-color="#66b09b"/><stop offset="0.213" stop-color="#59aa93"/><stop offset="0.266" stop-color="#56a891"/><stop offset="0.325" stop-color="#56a890"/><stop offset="0.390" stop-color="#56a78f"/><stop offset="0.461" stop-color="#56a78d"/><stop offset="0.544" stop-color="#56a78c"/><stop offset="0.639" stop-color="#56a687"/><stop offset="0.745" stop-color="#57a682"/><stop offset="0.864" stop-color="#57a67c"/><stop offset="1.000" stop-color="#57a578"/></linearGradient><linearGradient id="w205" gradientUnits="userSpaceOnUse" x1="165.4" y1="391.5" x2="28.4" y2="286.4"><stop offset="0.000" stop-color="#ffffff"/><stop offset="0.017" stop-color="#fbfdfc"/><stop offset="0.035" stop-color="#eef6f4"/><stop offset="0.058" stop-color="#d4e9e3"/><stop offset="0.087" stop-color="#add5c9"/><stop offset="0.122" stop-color="#84c0af"/><stop offset="0.162" stop-color="#67b19c"/><stop offset="0.208" stop-color="#5aaa93"/><stop offset="0.261" stop-color="#56a890"/><stop offset="0.318" stop-color="#56a88f"/><stop offset="0.382" stop-color="#56a78e"/><stop offset="0.452" stop-color="#56a78d"/><stop offset="0.533" stop-color="#56a78b"/><stop offset="0.625" stop-color="#56a686"/><stop offset="0.730" stop-color="#57a680"/><stop offset="0.845" stop-color="#57a579"/><stop offset="0.984" stop-color="#58a573"/><stop offset="1.000" stop-color="#58a573"/></linearGradient><linearGradient id="w206" gradientUnits="userSpaceOnUse" x1="165.4" y1="391.5" x2="28.0" y2="280.2"><stop offset="0.000" stop-color="#ffffff"/><stop offset="0.017" stop-color="#fbfdfc"/><stop offset="0.034" stop-color="#eef6f4"/><stop offset="0.057" stop-color="#d5e9e3"/><stop offset="0.085" stop-color="#aed6ca"/><stop offset="0.119" stop-color="#85c0af"/><stop offset="0.158" stop-color="#68b19c"/><stop offset="0.204" stop-color="#5aaa93"/><stop offset="0.254" stop-color="#56a890"/><stop offset="0.311" stop-color="#56a88f"/><stop offset="0.373" stop-color="#56a78d"/><stop offset="0.441" stop-color="#56a78c"/><stop offset="0.520" stop-color="#56a68a"/><stop offset="0.611" stop-color="#56a684"/><stop offset="0.712" stop-color="#57a57e"/><stop offset="0.826" stop-color="#57a576"/><stop offset="0.961" stop-color="#58a46e"/><stop offset="1.000" stop-color="#58a46e"/></linearGradient><linearGradient id="w207" gradientUnits="userSpaceOnUse" x1="165.4" y1="391.5" x2="27.4" y2="273.7"><stop offset="0.000" stop-color="#ffffff"/><stop offset="0.017" stop-color="#fbfdfc"/><stop offset="0.033" stop-color="#eff7f4"/><stop offset="0.055" stop-color="#d6eae4"/><stop offset="0.083" stop-color="#b0d6cb"/><stop offset="0.116" stop-color="#87c1b0"/><stop offset="0.154" stop-color="#69b29c"/><stop offset="0.198" stop-color="#5aaa93"/><stop offset="0.248" stop-color="#57a890"/><stop offset="0.303" stop-color="#56a88e"/><stop offset="0.364" stop-color="#56a78d"/><stop offset="0.430" stop-color="#56a78b"/><stop offset="0.507" stop-color="#56a689"/><stop offset="0.595" stop-color="#56a683"/><stop offset="0.694" stop-color="#57a57c"/><stop offset="0.805" stop-color="#57a474"/><stop offset="0.937" stop-color="#58a46a"/><stop offset="1.000" stop-color="#58a369"/></linearGradient><linearGradient id="w208" gradientUnits="userSpaceOnUse" x1="165.4" y1="391.5" x2="27.0" y2="266.9"><stop offset="0.000" stop-color="#ffffff"/><stop offset="0.016" stop-color="#fbfdfc"/><stop offset="0.032" stop-color="#eff7f5"/><stop offset="0.054" stop-color="#d7eae4"/><stop offset="0.081" stop-color="#b1d7cc"/><stop offset="0.113" stop-color="#89c2b1"/><stop offset="0.150" stop-color="#6ab29d"/><stop offset="0.193" stop-color="#5bab93"/><stop offset="0.242" stop-color="#57a890"/><stop offset="0.295" stop-color="#56a88e"/><stop offset="0.354" stop-color="#56a78c"/><stop offset="0.419" stop-color="#56a78a"/><stop offset="0.494" stop-color="#56a687"/><stop offset="0.580" stop-color="#56a582"/><stop offset="0.677" stop-color="#57a57a"/><stop offset="0.784" stop-color="#58a471"/><stop offset="0.913" stop-color="#58a367"/><stop offset="1.000" stop-color="#59a364"/></linearGradient><linearGradient id="w209" gradientUnits="userSpaceOnUse" x1="165.4" y1="391.5" x2="26.7" y2="259.8"><stop offset="0.000" stop-color="#ffffff"/><stop offset="0.016" stop-color="#fbfdfc"/><stop offset="0.031" stop-color="#f0f7f5"/><stop offset="0.052" stop-color="#d7ebe5"/><stop offset="0.078" stop-color="#b3d8cd"/><stop offset="0.110" stop-color="#8ac3b2"/><stop offset="0.146" stop-color="#6bb39e"/><stop offset="0.188" stop-color="#5bab93"/><stop offset="0.235" stop-color="#57a890"/><stop offset="0.288" stop-color="#56a88e"/><stop offset="0.345" stop-color="#56a78b"/><stop offset="0.408" stop-color="#56a788"/><stop offset="0.481" stop-color="#56a685"/><stop offset="0.565" stop-color="#57a57f"/><stop offset="0.659" stop-color="#57a578"/><stop offset="0.763" stop-color="#58a46f"/><stop offset="0.889" stop-color="#59a364"/><stop offset="1.000" stop-color="#59a25f"/></linearGradient><linearGradient id="w210" gradientUnits="userSpaceOnUse" x1="165.4" y1="391.5" x2="26.6" y2="252.7"><stop offset="0.000" stop-color="#ffffff"/><stop offset="0.015" stop-color="#fbfdfc"/><stop offset="0.031" stop-color="#f0f7f5"/><stop offset="0.051" stop-color="#d8ebe6"/><stop offset="0.076" stop-color="#b4d8ce"/><stop offset="0.107" stop-color="#8cc4b3"/><stop offset="0.143" stop-color="#6cb39e"/><stop offset="0.183" stop-color="#5cab94"/><stop offset="0.229" stop-color="#57a891"/><stop offset="0.280" stop-color="#56a88e"/><stop offset="0.336" stop-color="#56a78a"/><stop offset="0.397" stop-color="#56a787"/><stop offset="0.469" stop-color="#57a683"/><stop offset="0.550" stop-color="#57a57d"/><stop offset="0.642" stop-color="#57a475"/><stop offset="0.744" stop-color="#58a36c"/><stop offset="0.866" stop-color="#59a262"/><stop offset="1.000" stop-color="#59a25a"/></linearGradient><linearGradient id="w211" gradientUnits="userSpaceOnUse" x1="165.4" y1="391.5" x2="26.5" y2="245.1"><stop offset="0.000" stop-color="#ffffff"/><stop offset="0.015" stop-color="#fbfdfc"/><stop offset="0.030" stop-color="#f0f7f5"/><stop offset="0.050" stop-color="#d9ebe6"/><stop offset="0.074" stop-color="#b5d9cf"/><stop offset="0.104" stop-color="#8dc4b4"/><stop offset="0.139" stop-color="#6db49f"/><stop offset="0.178" stop-color="#5cab94"/><stop offset="0.223" stop-color="#57a991"/><stop offset="0.273" stop-color="#56a88e"/><stop offset="0.327" stop-color="#56a78a"/><stop offset="0.386" stop-color="#57a686"/><stop offset="0.456" stop-color="#57a681"/><stop offset="0.535" stop-color="#57a57b"/><stop offset="0.624" stop-color="#58a473"/><stop offset="0.723" stop-color="#58a36a"/><stop offset="0.842" stop-color="#59a25f"/><stop offset="0.991" stop-color="#5aa154"/><stop offset="1.000" stop-color="#5aa154"/></linearGradient><linearGradient id="w212" gradientUnits="userSpaceOnUse" x1="165.4" y1="391.5" x2="26.6" y2="237.3"><stop offset="0.000" stop-color="#ffffff"/><stop offset="0.014" stop-color="#fbfdfd"/><stop offset="0.029" stop-color="#f1f8f6"/><stop offset="0.048" stop-color="#daece7"/><stop offset="0.072" stop-color="#b7dad0"/><stop offset="0.101" stop-color="#8fc5b5"/><stop offset="0.135" stop-color="#6eb4a0"/><stop offset="0.174" stop-color="#5dab94"/><stop offset="0.217" stop-color="#57a991"/><stop offset="0.265" stop-color="#56a88e"/><stop offset="0.318" stop-color="#56a78a"/><stop offset="0.376" stop-color="#57a685"/><stop offset="0.443" stop-color="#57a680"/><stop offset="0.521" stop-color="#57a579"/><stop offset="0.607" stop-color="#58a471"/><stop offset="0.704" stop-color="#58a368"/><stop offset="0.819" stop-color="#59a25d"/><stop offset="0.964" stop-color="#5aa04f"/><stop offset="1.000" stop-color="#5aa04f"/></linearGradient><linearGradient id="w213" gradientUnits="userSpaceOnUse" x1="165.4" y1="391.5" x2="26.4" y2="228.7"><stop offset="0.000" stop-color="#ffffff"/><stop offset="0.014" stop-color="#fbfdfd"/><stop offset="0.028" stop-color="#f1f8f6"/><stop offset="0.047" stop-color="#dbece7"/><stop offset="0.070" stop-color="#b8dad0"/><stop offset="0.098" stop-color="#90c6b6"/><stop offset="0.131" stop-color="#6fb5a1"/><stop offset="0.168" stop-color="#5dac95"/><stop offset="0.210" stop-color="#57a991"/><stop offset="0.257" stop-color="#56a88f"/><stop offset="0.308" stop-color="#56a78a"/><stop offset="0.364" stop-color="#57a685"/><stop offset="0.430" stop-color="#57a67f"/><stop offset="0.505" stop-color="#57a578"/><stop offset="0.589" stop-color="#58a470"/><stop offset="0.682" stop-color="#59a367"/><stop offset="0.794" stop-color="#59a25c"/><stop offset="0.934" stop-color="#5aa14e"/><stop offset="1.000" stop-color="#5aa04b"/></linearGradient><linearGradient id="w214" gradientUnits="userSpaceOnUse" x1="165.4" y1="391.5" x2="26.2" y2="219.7"><stop offset="0.000" stop-color="#ffffff"/><stop offset="0.014" stop-color="#fbfdfd"/><stop offset="0.027" stop-color="#f1f8f6"/><stop offset="0.045" stop-color="#dbede8"/><stop offset="0.068" stop-color="#b9dbd1"/><stop offset="0.095" stop-color="#92c7b7"/><stop offset="0.127" stop-color="#70b6a1"/><stop offset="0.163" stop-color="#5eac95"/><stop offset="0.204" stop-color="#57a991"/><stop offset="0.249" stop-color="#56a88f"/><stop offset="0.298" stop-color="#56a78a"/><stop offset="0.353" stop-color="#57a784"/><stop offset="0.416" stop-color="#57a67e"/><stop offset="0.488" stop-color="#58a576"/><stop offset="0.570" stop-color="#58a46e"/><stop offset="0.660" stop-color="#59a366"/><stop offset="0.769" stop-color="#5aa25c"/><stop offset="0.904" stop-color="#5ba14f"/><stop offset="1.000" stop-color="#5ba14a"/></linearGradient><linearGradient id="w215" gradientUnits="userSpaceOnUse" x1="165.4" y1="391.5" x2="26.4" y2="210.3"><stop offset="0.000" stop-color="#ffffff"/><stop offset="0.013" stop-color="#fcfdfd"/><stop offset="0.026" stop-color="#f2f8f6"/><stop offset="0.044" stop-color="#dcede8"/><stop offset="0.066" stop-color="#badcd2"/><stop offset="0.092" stop-color="#93c7b8"/><stop offset="0.123" stop-color="#72b6a2"/><stop offset="0.158" stop-color="#5eac96"/><stop offset="0.197" stop-color="#58a991"/><stop offset="0.241" stop-color="#56a890"/><stop offset="0.289" stop-color="#56a78a"/><stop offset="0.342" stop-color="#57a784"/><stop offset="0.403" stop-color="#57a67d"/><stop offset="0.473" stop-color="#58a575"/><stop offset="0.552" stop-color="#58a46d"/><stop offset="0.639" stop-color="#59a365"/><stop offset="0.744" stop-color="#5aa35b"/><stop offset="0.876" stop-color="#5ba250"/><stop offset="1.000" stop-color="#5ca248"/></linearGradient><linearGradient id="w216" gradientUnits="userSpaceOnUse" x1="165.4" y1="391.5" x2="26.1" y2="199.8"><stop offset="0.000" stop-color="#ffffff"/><stop offset="0.013" stop-color="#fcfdfd"/><stop offset="0.025" stop-color="#f2f8f6"/><stop offset="0.042" stop-color="#ddede9"/><stop offset="0.063" stop-color="#bcdcd3"/><stop offset="0.089" stop-color="#94c8b9"/><stop offset="0.118" stop-color="#73b7a3"/><stop offset="0.152" stop-color="#5fad96"/><stop offset="0.190" stop-color="#58a991"/><stop offset="0.232" stop-color="#56a890"/><stop offset="0.279" stop-color="#56a78b"/><stop offset="0.329" stop-color="#57a785"/><stop offset="0.388" stop-color="#57a67d"/><stop offset="0.456" stop-color="#58a574"/><stop offset="0.532" stop-color="#58a36a"/><stop offset="0.616" stop-color="#59a363"/><stop offset="0.717" stop-color="#5aa35b"/><stop offset="0.844" stop-color="#5ca350"/><stop offset="0.992" stop-color="#5da246"/><stop offset="1.000" stop-color="#5da246"/></linearGradient><linearGradient id="w217" gradientUnits="userSpaceOnUse" x1="165.4" y1="391.5" x2="26.6" y2="189.6"><stop offset="0.000" stop-color="#ffffff"/><stop offset="0.012" stop-color="#fcfdfd"/><stop offset="0.024" stop-color="#f2f8f7"/><stop offset="0.041" stop-color="#deeee9"/><stop offset="0.061" stop-color="#bdddd4"/><stop offset="0.086" stop-color="#96c9ba"/><stop offset="0.114" stop-color="#74b7a4"/><stop offset="0.147" stop-color="#60ad96"/><stop offset="0.184" stop-color="#58a991"/><stop offset="0.224" stop-color="#56a890"/><stop offset="0.269" stop-color="#56a88c"/><stop offset="0.318" stop-color="#57a785"/><stop offset="0.376" stop-color="#57a67c"/><stop offset="0.441" stop-color="#58a473"/><stop offset="0.514" stop-color="#58a368"/><stop offset="0.596" stop-color="#59a361"/><stop offset="0.694" stop-color="#5ba359"/><stop offset="0.816" stop-color="#5ca350"/><stop offset="0.959" stop-color="#5ea345"/><stop offset="1.000" stop-color="#5ea344"/></linearGradient><linearGradient id="w218" gradientUnits="userSpaceOnUse" x1="165.4" y1="391.5" x2="27.5" y2="179.1"><stop offset="0.000" stop-color="#ffffff"/><stop offset="0.012" stop-color="#fcfdfd"/><stop offset="0.024" stop-color="#f2f8f7"/><stop offset="0.039" stop-color="#deeee9"/><stop offset="0.059" stop-color="#beded4"/><stop offset="0.083" stop-color="#97cabb"/><stop offset="0.111" stop-color="#75b8a4"/><stop offset="0.142" stop-color="#60ad97"/><stop offset="0.178" stop-color="#58a991"/><stop offset="0.217" stop-color="#56a890"/><stop offset="0.261" stop-color="#56a88d"/><stop offset="0.308" stop-color="#57a785"/><stop offset="0.363" stop-color="#57a67c"/><stop offset="0.426" stop-color="#58a472"/><stop offset="0.498" stop-color="#58a367"/><stop offset="0.577" stop-color="#59a25e"/><stop offset="0.671" stop-color="#5ba357"/><stop offset="0.790" stop-color="#5da34f"/><stop offset="0.928" stop-color="#5fa445"/><stop offset="1.000" stop-color="#5fa442"/></linearGradient><linearGradient id="w219" gradientUnits="userSpaceOnUse" x1="165.4" y1="391.5" x2="28.5" y2="168.0"><stop offset="0.000" stop-color="#ffffff"/><stop offset="0.011" stop-color="#fcfdfd"/><stop offset="0.023" stop-color="#f3f9f7"/><stop offset="0.038" stop-color="#dfeeea"/><stop offset="0.057" stop-color="#bfded5"/><stop offset="0.080" stop-color="#99cabc"/><stop offset="0.107" stop-color="#76b9a5"/><stop offset="0.137" stop-color="#61ae97"/><stop offset="0.172" stop-color="#58a992"/><stop offset="0.210" stop-color="#56a890"/><stop offset="0.252" stop-color="#56a88e"/><stop offset="0.298" stop-color="#57a786"/><stop offset="0.351" stop-color="#57a67d"/><stop offset="0.412" stop-color="#58a472"/><stop offset="0.481" stop-color="#59a366"/><stop offset="0.557" stop-color="#59a25b"/><stop offset="0.649" stop-color="#5ba355"/><stop offset="0.763" stop-color="#5da34e"/><stop offset="0.897" stop-color="#5fa445"/><stop offset="1.000" stop-color="#60a540"/></linearGradient><linearGradient id="w220" gradientUnits="userSpaceOnUse" x1="165.4" y1="391.5" x2="29.7" y2="156.4"><stop offset="0.000" stop-color="#ffffff"/><stop offset="0.011" stop-color="#fcfdfd"/><stop offset="0.022" stop-color="#f3f9f7"/><stop offset="0.037" stop-color="#dfefea"/><stop offset="0.055" stop-color="#c0dfd6"/><stop offset="0.077" stop-color="#9acbbd"/><stop offset="0.103" stop-color="#77b9a6"/><stop offset="0.133" stop-color="#62ae98"/><stop offset="0.166" stop-color="#59a992"/><stop offset="0.203" stop-color="#56a890"/><stop offset="0.243" stop-color="#56a890"/><stop offset="0.287" stop-color="#57a787"/><stop offset="0.339" stop-color="#57a67d"/><stop offset="0.398" stop-color="#58a472"/><stop offset="0.464" stop-color="#59a365"/><stop offset="0.538" stop-color="#59a158"/><stop offset="0.626" stop-color="#5ba253"/><stop offset="0.737" stop-color="#5da34c"/><stop offset="0.866" stop-color="#5fa445"/><stop offset="1.000" stop-color="#61a53e"/></linearGradient><linearGradient id="w221" gradientUnits="userSpaceOnUse" x1="165.4" y1="391.5" x2="30.9" y2="143.8"><stop offset="0.000" stop-color="#ffffff"/><stop offset="0.011" stop-color="#fcfdfd"/><stop offset="0.021" stop-color="#f4f9f7"/><stop offset="0.035" stop-color="#e1efeb"/><stop offset="0.053" stop-color="#c3e0d7"/><stop offset="0.075" stop-color="#9dcdbe"/><stop offset="0.099" stop-color="#7bbba7"/><stop offset="0.128" stop-color="#64af97"/><stop offset="0.160" stop-color="#5aa991"/><stop offset="0.195" stop-color="#57a88f"/><stop offset="0.234" stop-color="#56a88f"/><stop offset="0.277" stop-color="#57a788"/><stop offset="0.326" stop-color="#57a67e"/><stop offset="0.383" stop-color="#58a472"/><stop offset="0.447" stop-color="#59a365"/><stop offset="0.518" stop-color="#59a157"/><stop offset="0.603" stop-color="#5ba250"/><stop offset="0.710" stop-color="#5da34a"/><stop offset="0.834" stop-color="#60a444"/><stop offset="0.976" stop-color="#62a63d"/><stop offset="1.000" stop-color="#62a63d"/></linearGradient><linearGradient id="w222" gradientUnits="userSpaceOnUse" x1="165.4" y1="391.5" x2="33.2" y2="132.0"><stop offset="0.000" stop-color="#ffffff"/><stop offset="0.010" stop-color="#fcfefd"/><stop offset="0.021" stop-color="#f4f9f8"/><stop offset="0.034" stop-color="#e2f0ec"/><stop offset="0.052" stop-color="#c5e1d8"/><stop offset="0.072" stop-color="#a1cebf"/><stop offset="0.096" stop-color="#7ebca8"/><stop offset="0.124" stop-color="#66af97"/><stop offset="0.155" stop-color="#5ba990"/><stop offset="0.189" stop-color="#57a88d"/><stop offset="0.227" stop-color="#57a78d"/><stop offset="0.268" stop-color="#57a788"/><stop offset="0.316" stop-color="#57a67e"/><stop offset="0.371" stop-color="#58a472"/><stop offset="0.433" stop-color="#59a365"/><stop offset="0.501" stop-color="#59a156"/><stop offset="0.584" stop-color="#5ba14d"/><stop offset="0.687" stop-color="#5da348"/><stop offset="0.807" stop-color="#60a442"/><stop offset="0.944" stop-color="#63a63c"/><stop offset="1.000" stop-color="#63a73b"/></linearGradient><linearGradient id="w223" gradientUnits="userSpaceOnUse" x1="165.4" y1="391.5" x2="36.7" y2="121.7"><stop offset="0.000" stop-color="#ffffff"/><stop offset="0.010" stop-color="#fcfefd"/><stop offset="0.020" stop-color="#f5faf8"/><stop offset="0.033" stop-color="#e4f1ec"/><stop offset="0.050" stop-color="#c8e2d9"/><stop offset="0.070" stop-color="#a4cfc1"/><stop offset="0.094" stop-color="#81bda8"/><stop offset="0.120" stop-color="#68b097"/><stop offset="0.151" stop-color="#5caa8f"/><stop offset="0.184" stop-color="#58a88c"/><stop offset="0.221" stop-color="#57a78c"/><stop offset="0.261" stop-color="#57a788"/><stop offset="0.308" stop-color="#58a67d"/><stop offset="0.361" stop-color="#58a472"/><stop offset="0.421" stop-color="#59a364"/><stop offset="0.488" stop-color="#5aa156"/><stop offset="0.569" stop-color="#5ba04a"/><stop offset="0.669" stop-color="#5da246"/><stop offset="0.786" stop-color="#60a441"/><stop offset="0.920" stop-color="#63a63b"/><stop offset="1.000" stop-color="#64a739"/></linearGradient><linearGradient id="w224" gradientUnits="userSpaceOnUse" x1="165.4" y1="391.5" x2="40.3" y2="110.4"><stop offset="0.000" stop-color="#ffffff"/><stop offset="0.010" stop-color="#fcfefd"/><stop offset="0.020" stop-color="#f5faf8"/><stop offset="0.033" stop-color="#e5f1ed"/><stop offset="0.049" stop-color="#cae3da"/><stop offset="0.068" stop-color="#a7d1c2"/><stop offset="0.091" stop-color="#84bea9"/><stop offset="0.117" stop-color="#6ab197"/><stop offset="0.146" stop-color="#5daa8e"/><stop offset="0.179" stop-color="#58a78b"/><stop offset="0.215" stop-color="#57a78a"/><stop offset="0.254" stop-color="#57a788"/><stop offset="0.299" stop-color="#58a57e"/><stop offset="0.351" stop-color="#58a473"/><stop offset="0.410" stop-color="#59a366"/><stop offset="0.475" stop-color="#59a158"/><stop offset="0.553" stop-color="#5aa04a"/><stop offset="0.650" stop-color="#5da245"/><stop offset="0.764" stop-color="#60a440"/><stop offset="0.894" stop-color="#63a73a"/><stop offset="1.000" stop-color="#65a837"/></linearGradient><linearGradient id="w225" gradientUnits="userSpaceOnUse" x1="165.4" y1="391.5" x2="44.9" y2="100.5"><stop offset="0.000" stop-color="#ffffff"/><stop offset="0.010" stop-color="#fdfefd"/><stop offset="0.019" stop-color="#f6faf8"/><stop offset="0.032" stop-color="#e6f2ed"/><stop offset="0.048" stop-color="#cce4db"/><stop offset="0.067" stop-color="#aad2c3"/><stop offset="0.089" stop-color="#87c0aa"/><stop offset="0.114" stop-color="#6db297"/><stop offset="0.143" stop-color="#5eaa8d"/><stop offset="0.175" stop-color="#59a789"/><stop offset="0.210" stop-color="#58a789"/><stop offset="0.248" stop-color="#58a688"/><stop offset="0.292" stop-color="#58a57e"/><stop offset="0.343" stop-color="#58a473"/><stop offset="0.400" stop-color="#59a367"/><stop offset="0.464" stop-color="#59a159"/><stop offset="0.540" stop-color="#5aa049"/><stop offset="0.635" stop-color="#5da245"/><stop offset="0.746" stop-color="#60a43f"/><stop offset="0.873" stop-color="#63a73a"/><stop offset="1.000" stop-color="#66a935"/></linearGradient><linearGradient id="w226" gradientUnits="userSpaceOnUse" x1="165.4" y1="391.5" x2="51.6" y2="95.0"><stop offset="0.000" stop-color="#ffffff"/><stop offset="0.009" stop-color="#fdfefd"/><stop offset="0.019" stop-color="#f6faf9"/><stop offset="0.031" stop-color="#e7f2ee"/><stop offset="0.047" stop-color="#cee5dc"/><stop offset="0.066" stop-color="#add4c4"/><stop offset="0.088" stop-color="#8ac1ab"/><stop offset="0.113" stop-color="#6fb298"/><stop offset="0.142" stop-color="#5faa8c"/><stop offset="0.173" stop-color="#59a788"/><stop offset="0.208" stop-color="#58a687"/><stop offset="0.246" stop-color="#58a687"/><stop offset="0.290" stop-color="#58a57d"/><stop offset="0.340" stop-color="#59a472"/><stop offset="0.397" stop-color="#59a366"/><stop offset="0.460" stop-color="#59a158"/><stop offset="0.535" stop-color="#5a9f48"/><stop offset="0.630" stop-color="#5da143"/><stop offset="0.740" stop-color="#60a43e"/><stop offset="0.866" stop-color="#64a738"/><stop offset="1.000" stop-color="#67aa33"/></linearGradient><linearGradient id="w227" gradientUnits="userSpaceOnUse" x1="165.4" y1="391.5" x2="58.5" y2="89.6"><stop offset="0.000" stop-color="#ffffff"/><stop offset="0.009" stop-color="#fdfefd"/><stop offset="0.019" stop-color="#f6faf9"/><stop offset="0.031" stop-color="#e8f3ef"/><stop offset="0.047" stop-color="#d0e6dd"/><stop offset="0.066" stop-color="#b0d5c5"/><stop offset="0.087" stop-color="#8dc2ac"/><stop offset="0.112" stop-color="#71b398"/><stop offset="0.140" stop-color="#61ab8c"/><stop offset="0.172" stop-color="#5aa787"/><stop offset="0.206" stop-color="#58a686"/><stop offset="0.244" stop-color="#58a686"/><stop offset="0.287" stop-color="#58a57c"/><stop offset="0.337" stop-color="#59a471"/><stop offset="0.393" stop-color="#59a265"/><stop offset="0.456" stop-color="#59a158"/><stop offset="0.531" stop-color="#5a9f48"/><stop offset="0.624" stop-color="#5da142"/><stop offset="0.734" stop-color="#60a43d"/><stop offset="0.859" stop-color="#64a737"/><stop offset="0.999" stop-color="#68aa32"/><stop offset="1.000" stop-color="#68aa32"/></linearGradient><linearGradient id="w228" gradientUnits="userSpaceOnUse" x1="165.4" y1="391.5" x2="67.9" y2="91.5"><stop offset="0.000" stop-color="#ffffff"/><stop offset="0.010" stop-color="#fdfefd"/><stop offset="0.019" stop-color="#f7fbf9"/><stop offset="0.032" stop-color="#e9f3ef"/><stop offset="0.048" stop-color="#d2e7de"/><stop offset="0.067" stop-color="#b3d6c7"/><stop offset="0.089" stop-color="#90c4ad"/><stop offset="0.114" stop-color="#74b498"/><stop offset="0.143" stop-color="#62ab8b"/><stop offset="0.174" stop-color="#5ba786"/><stop offset="0.209" stop-color="#59a684"/><stop offset="0.247" stop-color="#58a683"/><stop offset="0.292" stop-color="#59a47a"/><stop offset="0.342" stop-color="#59a36f"/><stop offset="0.399" stop-color="#59a263"/><stop offset="0.463" stop-color="#5aa155"/><stop offset="0.539" stop-color="#5a9f45"/><stop offset="0.634" stop-color="#5da141"/><stop offset="0.745" stop-color="#60a43c"/><stop offset="0.872" stop-color="#64a736"/><stop offset="1.000" stop-color="#68aa32"/></linearGradient><linearGradient id="w229" gradientUnits="userSpaceOnUse" x1="165.4" y1="391.5" x2="77.3" y2="94.2"><stop offset="0.000" stop-color="#ffffff"/><stop offset="0.010" stop-color="#fdfefe"/><stop offset="0.019" stop-color="#f7fbf9"/><stop offset="0.032" stop-color="#eaf4ef"/><stop offset="0.048" stop-color="#d4e8df"/><stop offset="0.068" stop-color="#b5d7c8"/><stop offset="0.090" stop-color="#93c5ae"/><stop offset="0.116" stop-color="#76b599"/><stop offset="0.145" stop-color="#64ab8b"/><stop offset="0.177" stop-color="#5ca785"/><stop offset="0.213" stop-color="#59a683"/><stop offset="0.252" stop-color="#59a581"/><stop offset="0.297" stop-color="#59a477"/><stop offset="0.348" stop-color="#59a36c"/><stop offset="0.406" stop-color="#59a260"/><stop offset="0.471" stop-color="#5aa052"/><stop offset="0.548" stop-color="#5a9f43"/><stop offset="0.645" stop-color="#5da13f"/><stop offset="0.758" stop-color="#61a43b"/><stop offset="0.887" stop-color="#65a736"/><stop offset="1.000" stop-color="#67a932"/></linearGradient><linearGradient id="w230" gradientUnits="userSpaceOnUse" x1="165.4" y1="391.5" x2="87.5" y2="100.9"><stop offset="0.000" stop-color="#ffffff"/><stop offset="0.010" stop-color="#fdfefe"/><stop offset="0.020" stop-color="#f8fbf9"/><stop offset="0.033" stop-color="#ebf4f0"/><stop offset="0.050" stop-color="#d6e9e0"/><stop offset="0.070" stop-color="#b8d8c9"/><stop offset="0.093" stop-color="#96c6af"/><stop offset="0.120" stop-color="#79b699"/><stop offset="0.150" stop-color="#66ac8b"/><stop offset="0.183" stop-color="#5da784"/><stop offset="0.219" stop-color="#5aa581"/><stop offset="0.259" stop-color="#59a57e"/><stop offset="0.306" stop-color="#59a474"/><stop offset="0.359" stop-color="#59a268"/><stop offset="0.419" stop-color="#5aa15c"/><stop offset="0.485" stop-color="#5aa04d"/><stop offset="0.565" stop-color="#5b9f41"/><stop offset="0.665" stop-color="#5ea13e"/><stop offset="0.781" stop-color="#61a439"/><stop offset="0.914" stop-color="#65a734"/><stop offset="1.000" stop-color="#67a932"/></linearGradient><linearGradient id="w231" gradientUnits="userSpaceOnUse" x1="165.4" y1="391.5" x2="97.2" y2="107.6"><stop offset="0.000" stop-color="#ffffff"/><stop offset="0.010" stop-color="#fdfefe"/><stop offset="0.021" stop-color="#f8fbfa"/><stop offset="0.034" stop-color="#ecf5f0"/><stop offset="0.051" stop-color="#d7e9e0"/><stop offset="0.072" stop-color="#bad9ca"/><stop offset="0.096" stop-color="#99c7b0"/><stop offset="0.123" stop-color="#7bb79a"/><stop offset="0.154" stop-color="#67ac8a"/><stop offset="0.188" stop-color="#5da783"/><stop offset="0.226" stop-color="#5aa580"/><stop offset="0.267" stop-color="#59a47a"/><stop offset="0.315" stop-color="#59a370"/><stop offset="0.370" stop-color="#5aa264"/><stop offset="0.432" stop-color="#5aa157"/><stop offset="0.500" stop-color="#5a9f49"/><stop offset="0.582" stop-color="#5b9f40"/><stop offset="0.685" stop-color="#5ea23c"/><stop offset="0.805" stop-color="#62a438"/><stop offset="0.942" stop-color="#66a833"/><stop offset="1.000" stop-color="#66a832"/></linearGradient><linearGradient id="w232" gradientUnits="userSpaceOnUse" x1="165.4" y1="391.5" x2="106.7" y2="115.4"><stop offset="0.000" stop-color="#ffffff"/><stop offset="0.011" stop-color="#fdfefe"/><stop offset="0.021" stop-color="#f8fbfa"/><stop offset="0.035" stop-color="#edf5f1"/><stop offset="0.053" stop-color="#d9eae1"/><stop offset="0.074" stop-color="#bcdacb"/><stop offset="0.099" stop-color="#9cc9b1"/><stop offset="0.128" stop-color="#7eb89a"/><stop offset="0.159" stop-color="#69ad8a"/><stop offset="0.195" stop-color="#5ea782"/><stop offset="0.234" stop-color="#5ba57f"/><stop offset="0.276" stop-color="#5aa477"/><stop offset="0.326" stop-color="#5aa36c"/><stop offset="0.383" stop-color="#5aa160"/><stop offset="0.446" stop-color="#5aa053"/><stop offset="0.517" stop-color="#5a9e44"/><stop offset="0.602" stop-color="#5ca03e"/><stop offset="0.709" stop-color="#5fa23a"/><stop offset="0.833" stop-color="#62a536"/><stop offset="0.974" stop-color="#66a832"/><stop offset="1.000" stop-color="#66a832"/></linearGradient><linearGradient id="w233" gradientUnits="userSpaceOnUse" x1="165.4" y1="391.5" x2="115.7" y2="123.5"><stop offset="0.000" stop-color="#ffffff"/><stop offset="0.011" stop-color="#fdfefe"/><stop offset="0.022" stop-color="#f8fbfa"/><stop offset="0.037" stop-color="#edf5f1"/><stop offset="0.055" stop-color="#daebe2"/><stop offset="0.077" stop-color="#bedbcc"/><stop offset="0.103" stop-color="#9ecab2"/><stop offset="0.132" stop-color="#80b99b"/><stop offset="0.165" stop-color="#6bad8a"/><stop offset="0.202" stop-color="#5fa781"/><stop offset="0.242" stop-color="#5ba57d"/><stop offset="0.286" stop-color="#5aa374"/><stop offset="0.338" stop-color="#5aa269"/><stop offset="0.396" stop-color="#5aa15c"/><stop offset="0.462" stop-color="#5a9f4e"/><stop offset="0.536" stop-color="#5a9e3f"/><stop offset="0.624" stop-color="#5ca03d"/><stop offset="0.734" stop-color="#5fa339"/><stop offset="0.862" stop-color="#63a635"/><stop offset="1.000" stop-color="#66a832"/></linearGradient><linearGradient id="w234" gradientUnits="userSpaceOnUse" x1="165.4" y1="391.5" x2="124.2" y2="131.6"><stop offset="0.000" stop-color="#ffffff"/><stop offset="0.011" stop-color="#fdfefe"/><stop offset="0.023" stop-color="#f9fbfa"/><stop offset="0.038" stop-color="#eef6f1"/><stop offset="0.057" stop-color="#dbebe2"/><stop offset="0.080" stop-color="#c0dccb"/><stop offset="0.106" stop-color="#a0cbb1"/><stop offset="0.137" stop-color="#82ba99"/><stop offset="0.171" stop-color="#6dae87"/><stop offset="0.209" stop-color="#61a77d"/><stop offset="0.251" stop-color="#5ca578"/><stop offset="0.296" stop-color="#5ba36e"/><stop offset="0.350" stop-color="#5ba263"/><stop offset="0.410" stop-color="#5aa157"/><stop offset="0.479" stop-color="#5a9f4a"/><stop offset="0.555" stop-color="#5b9e3e"/><stop offset="0.646" stop-color="#5da13c"/><stop offset="0.760" stop-color="#60a338"/><stop offset="0.893" stop-color="#64a634"/><stop offset="1.000" stop-color="#66a832"/></linearGradient><linearGradient id="w235" gradientUnits="userSpaceOnUse" x1="165.4" y1="391.5" x2="132.2" y2="139.6"><stop offset="0.000" stop-color="#ffffff"/><stop offset="0.012" stop-color="#fdfefe"/><stop offset="0.024" stop-color="#f9fcfa"/><stop offset="0.039" stop-color="#eef6f1"/><stop offset="0.059" stop-color="#dcebe1"/><stop offset="0.083" stop-color="#c1ddca"/><stop offset="0.110" stop-color="#a2cbaf"/><stop offset="0.142" stop-color="#84bb96"/><stop offset="0.177" stop-color="#6eae83"/><stop offset="0.216" stop-color="#62a878"/><stop offset="0.260" stop-color="#5da471"/><stop offset="0.307" stop-color="#5ca367"/><stop offset="0.362" stop-color="#5ba25d"/><stop offset="0.425" stop-color="#5ba052"/><stop offset="0.496" stop-color="#5a9f45"/><stop offset="0.575" stop-color="#5b9f3d"/><stop offset="0.669" stop-color="#5ea13b"/><stop offset="0.787" stop-color="#61a437"/><stop offset="0.925" stop-color="#65a733"/><stop offset="1.000" stop-color="#66a832"/></linearGradient><linearGradient id="w236" gradientUnits="userSpaceOnUse" x1="165.4" y1="391.5" x2="139.8" y2="147.9"><stop offset="0.000" stop-color="#ffffff"/><stop offset="0.012" stop-color="#fdfefe"/><stop offset="0.024" stop-color="#f9fcfa"/><stop offset="0.041" stop-color="#eff6f0"/><stop offset="0.061" stop-color="#ddece0"/><stop offset="0.086" stop-color="#c3ddc9"/><stop offset="0.114" stop-color="#a4ccad"/><stop offset="0.147" stop-color="#86bb93"/><stop offset="0.184" stop-color="#70af7f"/><stop offset="0.225" stop-color="#64a874"/><stop offset="0.269" stop-color="#5fa46b"/><stop offset="0.318" stop-color="#5da361"/><stop offset="0.376" stop-color="#5ca158"/><stop offset="0.441" stop-color="#5ba04d"/><stop offset="0.514" stop-color="#5a9e41"/><stop offset="0.596" stop-color="#5c9f3c"/><stop offset="0.694" stop-color="#5ea23a"/><stop offset="0.817" stop-color="#62a536"/><stop offset="0.960" stop-color="#66a832"/><stop offset="1.000" stop-color="#66a832"/></linearGradient><linearGradient id="w237" gradientUnits="userSpaceOnUse" x1="165.4" y1="391.5" x2="146.8" y2="155.5"><stop offset="0.000" stop-color="#ffffff"/><stop offset="0.013" stop-color="#fefefe"/><stop offset="0.025" stop-color="#f9fcf9"/><stop offset="0.042" stop-color="#eff6f0"/><stop offset="0.063" stop-color="#deece0"/><stop offset="0.089" stop-color="#c4dec8"/><stop offset="0.118" stop-color="#a6ccab"/><stop offset="0.152" stop-color="#88bc90"/><stop offset="0.190" stop-color="#72af7b"/><stop offset="0.232" stop-color="#65a86f"/><stop offset="0.279" stop-color="#60a464"/><stop offset="0.330" stop-color="#5da25c"/><stop offset="0.389" stop-color="#5ca153"/><stop offset="0.456" stop-color="#5ba049"/><stop offset="0.532" stop-color="#5a9e3d"/><stop offset="0.617" stop-color="#5ca03b"/><stop offset="0.718" stop-color="#5fa239"/><stop offset="0.845" stop-color="#63a535"/><stop offset="0.993" stop-color="#66a832"/><stop offset="1.000" stop-color="#66a832"/></linearGradient><linearGradient id="w238" gradientUnits="userSpaceOnUse" x1="165.4" y1="391.5" x2="153.4" y2="163.3"><stop offset="0.000" stop-color="#ffffff"/><stop offset="0.013" stop-color="#fefefe"/><stop offset="0.026" stop-color="#f9fcf9"/><stop offset="0.044" stop-color="#f0f6f0"/><stop offset="0.066" stop-color="#deecdf"/><stop offset="0.092" stop-color="#c6dec7"/><stop offset="0.123" stop-color="#a8cda9"/><stop offset="0.158" stop-color="#8abc8d"/><stop offset="0.197" stop-color="#74b077"/><stop offset="0.241" stop-color="#67a86a"/><stop offset="0.289" stop-color="#61a45f"/><stop offset="0.341" stop-color="#5ea256"/><stop offset="0.403" stop-color="#5da14e"/><stop offset="0.473" stop-color="#5b9f45"/><stop offset="0.551" stop-color="#5b9e3c"/><stop offset="0.639" stop-color="#5da03a"/><stop offset="0.744" stop-color="#60a338"/><stop offset="0.875" stop-color="#64a634"/><stop offset="1.000" stop-color="#66a832"/></linearGradient><linearGradient id="w239" gradientUnits="userSpaceOnUse" x1="165.4" y1="391.5" x2="159.6" y2="170.2"><stop offset="0.000" stop-color="#ffffff"/><stop offset="0.014" stop-color="#fefefe"/><stop offset="0.027" stop-color="#f9fcf9"/><stop offset="0.045" stop-color="#f0f6f0"/><stop offset="0.068" stop-color="#dfeddf"/><stop offset="0.095" stop-color="#c7dfc6"/><stop offset="0.126" stop-color="#a9cea7"/><stop offset="0.163" stop-color="#8cbd8a"/><stop offset="0.203" stop-color="#76b073"/><stop offset="0.248" stop-color="#68a865"/><stop offset="0.298" stop-color="#62a459"/><stop offset="0.352" stop-color="#5fa251"/><stop offset="0.416" stop-color="#5da04a"/><stop offset="0.488" stop-color="#5b9f41"/><stop offset="0.569" stop-color="#5b9f3c"/><stop offset="0.660" stop-color="#5ea139"/><stop offset="0.768" stop-color="#61a337"/><stop offset="0.904" stop-color="#64a733"/><stop offset="1.000" stop-color="#66a832"/></linearGradient></defs><g clip-path="url(#loc)"><g filter="url(#bl)"><g shape-rendering="crispEdges"><path d="M165.4 391.5L160.3 175.3L170.5 175.3Z" fill="url(#w0)"/><path d="M165.4 391.5L165.9 181.5L175.8 181.8Z" fill="url(#w1)"/><path d="M165.4 391.5L171.3 187.7L180.9 188.2Z" fill="url(#w2)"/><path d="M165.4 391.5L176.3 193.2L185.6 194.0Z" fill="url(#w3)"/><path d="M165.4 391.5L181.1 198.8L190.1 199.7Z" fill="url(#w4)"/><path d="M165.4 391.5L185.6 204.2L194.4 205.4Z" fill="url(#w5)"/><path d="M165.4 391.5L189.9 209.0L198.5 210.4Z" fill="url(#w6)"/><path d="M165.4 391.5L194.0 214.1L202.3 215.6Z" fill="url(#w7)"/><path d="M165.4 391.5L197.9 218.4L206.1 220.2Z" fill="url(#w8)"/><path d="M165.4 391.5L201.7 222.8L209.6 224.7Z" fill="url(#w9)"/><path d="M165.4 391.5L205.3 227.1L213.0 229.2Z" fill="url(#w10)"/><path d="M165.4 391.5L208.8 231.2L216.3 233.4Z" fill="url(#w11)"/><path d="M165.4 391.5L212.1 235.2L219.5 237.6Z" fill="url(#w12)"/><path d="M165.4 391.5L215.3 239.2L222.5 241.7Z" fill="url(#w13)"/><path d="M165.4 391.5L218.5 242.9L225.4 245.5Z" fill="url(#w14)"/><path d="M165.4 391.5L221.6 246.3L228.4 249.1Z" fill="url(#w15)"/><path d="M165.4 391.5L224.5 249.8L231.1 252.8Z" fill="url(#w16)"/><path d="M165.4 391.5L227.4 253.2L233.9 256.3Z" fill="url(#w17)"/><path d="M165.4 391.5L230.1 256.7L236.4 259.9Z" fill="url(#w18)"/><path d="M165.4 391.5L232.9 259.9L239.0 263.3Z" fill="url(#w19)"/><path d="M165.4 391.5L235.6 263.0L241.6 266.4Z" fill="url(#w20)"/><path d="M165.4 391.5L238.2 266.2L244.0 269.7Z" fill="url(#w21)"/><path d="M165.4 391.5L240.7 269.3L246.4 273.0Z" fill="url(#w22)"/><path d="M165.4 391.5L243.2 272.3L248.8 276.1Z" fill="url(#w23)"/><path d="M165.4 391.5L245.7 275.3L251.1 279.2Z" fill="url(#w24)"/><path d="M165.4 391.5L248.1 278.3L253.4 282.3Z" fill="url(#w25)"/><path d="M165.4 391.5L250.5 281.2L255.6 285.3Z" fill="url(#w26)"/><path d="M165.4 391.5L252.9 284.1L257.8 288.3Z" fill="url(#w27)"/><path d="M165.4 391.5L255.2 286.9L260.1 291.2Z" fill="url(#w28)"/><path d="M165.4 391.5L257.5 289.7L262.2 294.2Z" fill="url(#w29)"/><path d="M165.4 391.5L259.8 292.6L264.3 297.1Z" fill="url(#w30)"/><path d="M165.4 391.5L262.1 295.3L266.5 300.0Z" fill="url(#w31)"/><path d="M165.4 391.5L264.3 298.2L268.6 302.9Z" fill="url(#w32)"/><path d="M165.4 391.5L266.5 300.9L270.7 305.8Z" fill="url(#w33)"/><path d="M165.4 391.5L268.7 303.7L272.8 308.7Z" fill="url(#w34)"/><path d="M165.4 391.5L270.9 306.5L274.8 311.6Z" fill="url(#w35)"/><path d="M165.4 391.5L273.1 309.3L276.9 314.4Z" fill="url(#w36)"/><path d="M165.4 391.5L275.3 312.1L279.0 317.3Z" fill="url(#w37)"/><path d="M165.4 391.5L277.6 314.8L281.0 320.2Z" fill="url(#w38)"/><path d="M165.4 391.5L279.7 317.7L283.1 323.1Z" fill="url(#w39)"/><path d="M165.4 391.5L282.0 320.5L285.2 326.1Z" fill="url(#w40)"/><path d="M165.4 391.5L284.2 323.3L287.2 329.0Z" fill="url(#w41)"/><path d="M165.4 391.5L286.4 326.2L289.4 332.0Z" fill="url(#w42)"/><path d="M165.4 391.5L288.6 329.1L291.4 335.0Z" fill="url(#w43)"/><path d="M165.4 391.5L290.8 332.1L293.5 338.0Z" fill="url(#w44)"/><path d="M165.4 391.5L293.1 335.0L295.6 341.1Z" fill="url(#w45)"/><path d="M165.4 391.5L295.4 338.1L297.8 344.2Z" fill="url(#w46)"/><path d="M165.4 391.5L297.7 341.1L299.9 347.4Z" fill="url(#w47)"/><path d="M165.4 391.5L300.1 344.2L302.2 350.6Z" fill="url(#w48)"/><path d="M165.4 391.5L302.5 347.3L304.4 353.9Z" fill="url(#w49)"/><path d="M165.4 391.5L304.9 350.6L306.6 357.2Z" fill="url(#w50)"/><path d="M165.4 391.5L307.4 353.8L309.0 360.6Z" fill="url(#w51)"/><path d="M165.4 391.5L309.8 357.2L311.2 364.1Z" fill="url(#w52)"/><path d="M165.4 391.5L312.4 360.7L313.7 367.6Z" fill="url(#w53)"/><path d="M165.4 391.5L315.0 364.2L316.1 371.3Z" fill="url(#w54)"/><path d="M165.4 391.5L317.8 367.8L318.8 375.0Z" fill="url(#w55)"/><path d="M165.4 391.5L320.4 371.5L321.2 378.8Z" fill="url(#w56)"/><path d="M165.4 391.5L323.3 375.3L323.9 382.8Z" fill="url(#w57)"/><path d="M165.4 391.5L326.5 379.2L326.9 386.8Z" fill="url(#w58)"/><path d="M165.4 391.5L329.4 383.3L329.6 391.1Z" fill="url(#w59)"/><path d="M165.4 391.5L332.6 387.6L332.6 395.4Z" fill="url(#w60)"/><path d="M165.4 391.5L335.8 391.9L335.6 400.0Z" fill="url(#w61)"/><path d="M165.4 391.5L339.3 396.5L338.9 404.7Z" fill="url(#w62)"/><path d="M165.4 391.5L342.8 401.3L342.1 409.6Z" fill="url(#w63)"/><path d="M165.4 391.5L346.6 406.2L345.7 414.8Z" fill="url(#w64)"/><path d="M165.4 391.5L350.3 411.4L349.2 420.1Z" fill="url(#w65)"/><path d="M165.4 391.5L354.3 416.9L352.9 425.7Z" fill="url(#w66)"/><path d="M165.4 391.5L358.7 422.6L357.0 431.7Z" fill="url(#w67)"/><path d="M165.4 391.5L358.7 427.9L356.8 436.9Z" fill="url(#w68)"/><path d="M165.4 391.5L352.8 431.8L350.7 440.6Z" fill="url(#w69)"/><path d="M165.4 391.5L347.2 435.7L345.0 444.2Z" fill="url(#w70)"/><path d="M165.4 391.5L341.7 439.2L339.3 447.5Z" fill="url(#w71)"/><path d="M165.4 391.5L336.6 442.7L334.0 450.7Z" fill="url(#w72)"/><path d="M165.4 391.5L331.9 446.1L329.1 453.8Z" fill="url(#w73)"/><path d="M165.4 391.5L327.2 449.3L324.3 456.8Z" fill="url(#w74)"/><path d="M165.4 391.5L322.5 452.3L319.5 459.6Z" fill="url(#w75)"/><path d="M165.4 391.5L318.2 455.3L315.0 462.4Z" fill="url(#w76)"/><path d="M165.4 391.5L313.9 458.1L310.6 465.0Z" fill="url(#w77)"/><path d="M165.4 391.5L309.9 460.9L306.5 467.6Z" fill="url(#w78)"/><path d="M165.4 391.5L306.0 463.6L302.5 470.2Z" fill="url(#w79)"/><path d="M165.4 391.5L302.1 466.2L298.5 472.6Z" fill="url(#w80)"/><path d="M165.4 391.5L298.5 468.8L294.7 475.0Z" fill="url(#w81)"/><path d="M165.4 391.5L294.7 471.2L290.8 477.2Z" fill="url(#w82)"/><path d="M165.4 391.5L291.2 473.7L287.2 479.5Z" fill="url(#w83)"/><path d="M165.4 391.5L287.7 476.0L283.6 481.7Z" fill="url(#w84)"/><path d="M165.4 391.5L284.2 478.3L280.0 483.8Z" fill="url(#w85)"/><path d="M165.4 391.5L280.9 480.6L276.6 486.0Z" fill="url(#w86)"/><path d="M165.4 391.5L277.6 482.8L273.1 488.0Z" fill="url(#w87)"/><path d="M165.4 391.5L274.3 485.0L269.8 490.1Z" fill="url(#w88)"/><path d="M165.4 391.5L271.1 487.2L266.5 492.1Z" fill="url(#w89)"/><path d="M165.4 391.5L267.9 489.2L263.1 494.0Z" fill="url(#w90)"/><path d="M165.4 391.5L264.7 491.3L259.9 495.9Z" fill="url(#w91)"/><path d="M165.4 391.5L261.6 493.4L256.7 497.8Z" fill="url(#w92)"/><path d="M165.4 391.5L258.5 495.5L253.5 499.8Z" fill="url(#w93)"/><path d="M165.4 391.5L255.5 497.5L250.4 501.6Z" fill="url(#w94)"/><path d="M165.4 391.5L252.4 499.5L247.2 503.5Z" fill="url(#w95)"/><path d="M165.4 391.5L249.3 501.5L244.0 505.3Z" fill="url(#w96)"/><path d="M165.4 391.5L246.3 503.4L240.9 507.1Z" fill="url(#w97)"/><path d="M165.4 391.5L243.2 505.4L237.8 508.9Z" fill="url(#w98)"/><path d="M165.4 391.5L240.2 507.3L234.7 510.7Z" fill="url(#w99)"/><path d="M165.4 391.5L237.2 509.3L231.5 512.5Z" fill="url(#w100)"/><path d="M165.4 391.5L234.1 511.2L228.4 514.3Z" fill="url(#w101)"/><path d="M165.4 391.5L231.1 513.2L225.2 516.1Z" fill="url(#w102)"/><path d="M165.4 391.5L228.0 515.1L222.1 517.9Z" fill="url(#w103)"/><path d="M165.4 391.5L224.9 517.1L218.9 519.7Z" fill="url(#w104)"/><path d="M165.4 391.5L221.8 519.0L215.7 521.5Z" fill="url(#w105)"/><path d="M165.4 391.5L218.6 520.9L212.5 523.3Z" fill="url(#w106)"/><path d="M165.4 391.5L215.5 522.9L209.2 525.1Z" fill="url(#w107)"/><path d="M165.4 391.5L212.2 524.9L205.9 526.9Z" fill="url(#w108)"/><path d="M165.4 391.5L209.0 526.9L202.6 528.8Z" fill="url(#w109)"/><path d="M165.4 391.5L205.7 529.0L199.2 530.7Z" fill="url(#w110)"/><path d="M165.4 391.5L202.4 531.0L195.8 532.6Z" fill="url(#w111)"/><path d="M165.4 391.5L199.0 533.0L192.3 534.4Z" fill="url(#w112)"/><path d="M165.4 391.5L195.5 535.2L188.7 536.4Z" fill="url(#w113)"/><path d="M165.4 391.5L192.0 537.4L185.1 538.4Z" fill="url(#w114)"/><path d="M165.4 391.5L188.5 539.6L181.5 540.5Z" fill="url(#w115)"/><path d="M165.4 391.5L184.8 541.8L177.7 542.5Z" fill="url(#w116)"/><path d="M165.4 391.5L181.0 544.0L173.8 544.5Z" fill="url(#w117)"/><path d="M165.4 391.5L177.2 546.4L169.9 546.8Z" fill="url(#w118)"/><path d="M165.4 391.5L173.2 548.6L165.8 548.8Z" fill="url(#w119)"/><path d="M165.4 391.5L169.2 551.0L161.6 551.0Z" fill="url(#w120)"/><path d="M165.4 391.5L165.0 553.7L157.3 553.5Z" fill="url(#w121)"/><path d="M165.4 391.5L160.7 556.1L152.9 555.7Z" fill="url(#w122)"/><path d="M165.4 391.5L156.2 558.8L148.3 558.2Z" fill="url(#w123)"/><path d="M165.4 391.5L151.5 561.8L143.5 560.9Z" fill="url(#w124)"/><path d="M165.4 391.5L146.8 564.4L138.6 563.4Z" fill="url(#w125)"/><path d="M165.4 391.5L141.7 567.7L133.5 566.4Z" fill="url(#w126)"/><path d="M165.4 391.5L136.6 570.6L128.2 569.0Z" fill="url(#w127)"/><path d="M165.4 391.5L131.1 574.1L122.5 572.2Z" fill="url(#w128)"/><path d="M165.4 391.5L125.4 577.5L116.6 575.4Z" fill="url(#w129)"/><path d="M165.4 391.5L119.4 580.9L110.5 578.5Z" fill="url(#w130)"/><path d="M165.4 391.5L113.0 584.9L104.0 582.3Z" fill="url(#w131)"/><path d="M165.4 391.5L106.4 588.9L97.1 585.9Z" fill="url(#w132)"/><path d="M165.4 391.5L101.8 585.5L92.7 582.3Z" fill="url(#w133)"/><path d="M165.4 391.5L97.7 581.1L88.8 577.7Z" fill="url(#w134)"/><path d="M165.4 391.5L93.8 576.6L85.1 573.0Z" fill="url(#w135)"/><path d="M165.4 391.5L90.2 571.8L81.7 568.1Z" fill="url(#w136)"/><path d="M165.4 391.5L86.8 566.7L78.7 562.8Z" fill="url(#w137)"/><path d="M165.4 391.5L83.9 561.3L76.0 557.2Z" fill="url(#w138)"/><path d="M165.4 391.5L81.2 555.7L73.6 551.5Z" fill="url(#w139)"/><path d="M165.4 391.5L78.8 549.9L71.5 545.7Z" fill="url(#w140)"/><path d="M165.4 391.5L76.5 544.6L69.4 540.2Z" fill="url(#w141)"/><path d="M165.4 391.5L74.2 539.5L67.3 535.0Z" fill="url(#w142)"/><path d="M165.4 391.5L72.3 534.1L65.7 529.5Z" fill="url(#w143)"/><path d="M165.4 391.5L70.5 528.8L64.2 524.2Z" fill="url(#w144)"/><path d="M165.4 391.5L68.7 523.8L62.6 519.1Z" fill="url(#w145)"/><path d="M165.4 391.5L66.9 519.2L61.0 514.4Z" fill="url(#w146)"/><path d="M165.4 391.5L65.4 514.4L59.7 509.5Z" fill="url(#w147)"/><path d="M165.4 391.5L63.9 509.8L58.4 504.9Z" fill="url(#w148)"/><path d="M165.4 391.5L62.5 505.2L57.2 500.3Z" fill="url(#w149)"/><path d="M165.4 391.5L61.2 500.8L56.1 495.7Z" fill="url(#w150)"/><path d="M165.4 391.5L59.8 496.6L54.9 491.5Z" fill="url(#w151)"/><path d="M165.4 391.5L58.5 492.5L53.8 487.3Z" fill="url(#w152)"/><path d="M165.4 391.5L57.2 488.4L52.8 483.2Z" fill="url(#w153)"/><path d="M165.4 391.5L56.1 484.4L51.8 479.1Z" fill="url(#w154)"/><path d="M165.4 391.5L54.9 480.5L50.9 475.2Z" fill="url(#w155)"/><path d="M165.4 391.5L53.7 476.7L49.8 471.4Z" fill="url(#w156)"/><path d="M165.4 391.5L52.6 473.0L48.9 467.6Z" fill="url(#w157)"/><path d="M165.4 391.5L51.8 469.2L48.2 463.7Z" fill="url(#w158)"/><path d="M165.4 391.5L50.9 465.5L47.5 460.0Z" fill="url(#w159)"/><path d="M165.4 391.5L50.0 461.8L46.8 456.3Z" fill="url(#w160)"/><path d="M165.4 391.5L49.2 458.2L46.2 452.6Z" fill="url(#w161)"/><path d="M165.4 391.5L48.3 454.7L45.4 449.1Z" fill="url(#w162)"/><path d="M165.4 391.5L47.5 451.2L44.8 445.6Z" fill="url(#w163)"/><path d="M165.4 391.5L46.7 447.7L44.2 442.1Z" fill="url(#w164)"/><path d="M165.4 391.5L45.9 444.3L43.6 438.6Z" fill="url(#w165)"/><path d="M165.4 391.5L45.1 440.9L42.9 435.2Z" fill="url(#w166)"/><path d="M165.4 391.5L44.4 437.6L42.4 431.8Z" fill="url(#w167)"/><path d="M165.4 391.5L43.7 434.2L41.8 428.5Z" fill="url(#w168)"/><path d="M165.4 391.5L42.9 430.9L41.2 425.1Z" fill="url(#w169)"/><path d="M165.4 391.5L42.3 427.6L40.7 421.8Z" fill="url(#w170)"/><path d="M165.4 391.5L41.5 424.3L40.1 418.5Z" fill="url(#w171)"/><path d="M165.4 391.5L40.8 421.1L39.6 415.2Z" fill="url(#w172)"/><path d="M165.4 391.5L40.1 417.8L39.0 411.9Z" fill="url(#w173)"/><path d="M165.4 391.5L39.5 414.5L38.5 408.5Z" fill="url(#w174)"/><path d="M165.4 391.5L38.9 411.2L38.1 405.2Z" fill="url(#w175)"/><path d="M165.4 391.5L38.3 407.9L37.7 401.9Z" fill="url(#w176)"/><path d="M165.4 391.5L37.8 404.6L37.3 398.5Z" fill="url(#w177)"/><path d="M165.4 391.5L37.3 401.2L37.0 395.2Z" fill="url(#w178)"/><path d="M165.4 391.5L36.8 397.9L36.6 391.8Z" fill="url(#w179)"/><path d="M165.4 391.5L36.3 394.5L36.3 388.5Z" fill="url(#w180)"/><path d="M165.4 391.5L35.7 391.2L35.9 385.1Z" fill="url(#w181)"/><path d="M165.4 391.5L35.2 387.8L35.5 381.6Z" fill="url(#w182)"/><path d="M165.4 391.5L34.8 384.3L35.2 378.2Z" fill="url(#w183)"/><path d="M165.4 391.5L34.2 380.8L34.8 374.7Z" fill="url(#w184)"/><path d="M165.4 391.5L33.7 377.3L34.6 371.1Z" fill="url(#w185)"/><path d="M165.4 391.5L33.2 373.7L34.2 367.5Z" fill="url(#w186)"/><path d="M165.4 391.5L32.6 370.1L33.8 363.9Z" fill="url(#w187)"/><path d="M165.4 391.5L32.1 366.4L33.4 360.2Z" fill="url(#w188)"/><path d="M165.4 391.5L31.6 362.7L33.1 356.4Z" fill="url(#w189)"/><path d="M165.4 391.5L31.1 358.9L32.8 352.6Z" fill="url(#w190)"/><path d="M165.4 391.5L30.6 355.0L32.5 348.7Z" fill="url(#w191)"/><path d="M165.4 391.5L30.0 351.0L32.0 344.7Z" fill="url(#w192)"/><path d="M165.4 391.5L29.6 347.0L31.8 340.6Z" fill="url(#w193)"/><path d="M165.4 391.5L29.0 342.8L31.4 336.4Z" fill="url(#w194)"/><path d="M165.4 391.5L28.5 338.6L31.2 332.2Z" fill="url(#w195)"/><path d="M165.4 391.5L28.2 334.2L31.1 327.9Z" fill="url(#w196)"/><path d="M165.4 391.5L27.7 329.8L30.8 323.3Z" fill="url(#w197)"/><path d="M165.4 391.5L27.5 325.3L30.7 318.8Z" fill="url(#w198)"/><path d="M165.4 391.5L27.1 320.6L30.6 314.1Z" fill="url(#w199)"/><path d="M165.4 391.5L26.5 315.6L30.2 309.1Z" fill="url(#w200)"/><path d="M165.4 391.5L26.2 310.7L30.2 304.2Z" fill="url(#w201)"/><path d="M165.4 391.5L25.8 305.4L30.0 299.0Z" fill="url(#w202)"/><path d="M165.4 391.5L25.2 299.9L29.6 293.4Z" fill="url(#w203)"/><path d="M165.4 391.5L24.7 294.2L29.4 287.7Z" fill="url(#w204)"/><path d="M165.4 391.5L24.3 288.4L29.3 281.9Z" fill="url(#w205)"/><path d="M165.4 391.5L23.8 282.2L29.1 275.7Z" fill="url(#w206)"/><path d="M165.4 391.5L23.1 275.6L28.7 269.1Z" fill="url(#w207)"/><path d="M165.4 391.5L22.6 268.9L28.5 262.3Z" fill="url(#w208)"/><path d="M165.4 391.5L22.1 261.8L28.3 255.2Z" fill="url(#w209)"/><path d="M165.4 391.5L21.9 254.6L28.5 248.0Z" fill="url(#w210)"/><path d="M165.4 391.5L21.6 247.0L28.6 240.3Z" fill="url(#w211)"/><path d="M165.4 391.5L21.6 239.1L28.9 232.5Z" fill="url(#w212)"/><path d="M165.4 391.5L21.2 230.5L29.0 223.9Z" fill="url(#w213)"/><path d="M165.4 391.5L20.9 221.4L29.1 214.8Z" fill="url(#w214)"/><path d="M165.4 391.5L20.9 212.1L29.5 205.4Z" fill="url(#w215)"/><path d="M165.4 391.5L20.4 201.5L29.5 194.9Z" fill="url(#w216)"/><path d="M165.4 391.5L20.7 191.2L30.3 184.6Z" fill="url(#w217)"/><path d="M165.4 391.5L21.3 180.7L31.4 174.2Z" fill="url(#w218)"/><path d="M165.4 391.5L22.1 169.6L32.7 163.1Z" fill="url(#w219)"/><path d="M165.4 391.5L23.1 157.9L34.2 151.4Z" fill="url(#w220)"/><path d="M165.4 391.5L24.1 145.2L35.8 138.8Z" fill="url(#w221)"/><path d="M165.4 391.5L26.1 133.4L38.4 127.1Z" fill="url(#w222)"/><path d="M165.4 391.5L29.4 122.9L42.2 116.8Z" fill="url(#w223)"/><path d="M165.4 391.5L32.8 111.6L46.1 105.6Z" fill="url(#w224)"/><path d="M165.4 391.5L37.2 101.5L51.0 95.8Z" fill="url(#w225)"/><path d="M165.4 391.5L43.8 95.8L57.9 90.4Z" fill="url(#w226)"/><path d="M165.4 391.5L50.7 90.2L65.0 85.2Z" fill="url(#w227)"/><path d="M165.4 391.5L60.2 91.9L74.4 87.3Z" fill="url(#w228)"/><path d="M165.4 391.5L69.7 94.3L83.8 90.2Z" fill="url(#w229)"/><path d="M165.4 391.5L80.1 100.8L93.9 97.1Z" fill="url(#w230)"/><path d="M165.4 391.5L90.0 107.3L103.5 104.0Z" fill="url(#w231)"/><path d="M165.4 391.5L99.7 114.8L112.9 112.1Z" fill="url(#w232)"/><path d="M165.4 391.5L109.0 122.8L121.7 120.4Z" fill="url(#w233)"/><path d="M165.4 391.5L117.7 130.6L130.1 128.6Z" fill="url(#w234)"/><path d="M165.4 391.5L126.0 138.4L138.0 136.8Z" fill="url(#w235)"/><path d="M165.4 391.5L133.8 146.5L145.4 145.3Z" fill="url(#w236)"/><path d="M165.4 391.5L141.1 154.0L152.3 153.1Z" fill="url(#w237)"/><path d="M165.4 391.5L147.9 161.6L158.8 161.0Z" fill="url(#w238)"/><path d="M165.4 391.5L154.3 168.4L164.8 168.1Z" fill="url(#w239)"/></g></g></g></svg>
<svg class="abs" style="left:605px;top:82px" width="469" height="602" viewBox="0 0 469 602">
<style>.ax{font-family:'Liberation Sans';font-size:12px;fill:#f4f4f4;stroke:#f4f4f4;stroke-width:0.25} .wl{font-family:'Liberation Sans';font-size:12.5px;fill:#3b5eae;stroke:#3b5eae;stroke-width:0.3}</style>
<g stroke="rgba(255,255,255,0.5)" stroke-width="1.1" fill="none"><line x1="72.6" y1="58.4" x2="72.6" y2="580.8"/><line x1="29.0" y1="522.8" x2="421.2" y2="522.8"/><line x1="116.2" y1="58.4" x2="116.2" y2="580.8"/><line x1="29.0" y1="464.7" x2="421.2" y2="464.7"/><line x1="159.7" y1="58.4" x2="159.7" y2="580.8"/><line x1="29.0" y1="406.7" x2="421.2" y2="406.7"/><line x1="203.3" y1="58.4" x2="203.3" y2="580.8"/><line x1="29.0" y1="348.6" x2="421.2" y2="348.6"/><line x1="246.9" y1="58.4" x2="246.9" y2="580.8"/><line x1="29.0" y1="290.6" x2="421.2" y2="290.6"/><line x1="290.5" y1="58.4" x2="290.5" y2="580.8"/><line x1="29.0" y1="232.6" x2="421.2" y2="232.6"/><line x1="334.1" y1="58.4" x2="334.1" y2="580.8"/><line x1="29.0" y1="174.5" x2="421.2" y2="174.5"/><line x1="377.6" y1="58.4" x2="377.6" y2="580.8"/><line x1="29.0" y1="116.5" x2="421.2" y2="116.5"/></g>
<rect x="29.0" y="58.4" width="392.2" height="522.4" fill="none" stroke="rgba(255,255,255,0.55)" stroke-width="1.4"/>
<g stroke="#3b5eae" stroke-width="1"><line x1="60.0" y1="95.5" x2="60.0" y2="90.0"/><line x1="128.8" y1="140.7" x2="132.1" y2="135.1"/><line x1="190.5" y1="217.0" x2="194.0" y2="212.0"/><line x1="252.0" y1="298.0" x2="257.0" y2="291.0"/><line x1="302.0" y1="363.2" x2="306.6" y2="359.4"/><line x1="332.0" y1="399.0" x2="336.0" y2="394.0"/><line x1="351.0" y1="428.0" x2="356.0" y2="422.0"/><line x1="28.0" y1="267.0" x2="33.0" y2="267.0"/><line x1="44.0" y1="409.8" x2="47.5" y2="408.2"/><line x1="63.8" y1="504.0" x2="68.5" y2="502.5"/><line x1="78.5" y1="550.0" x2="83.0" y2="546.0"/><line x1="87.5" y1="567.5" x2="91.0" y2="563.0"/><line x1="104.0" y1="583.0" x2="104.5" y2="578.5"/></g>
<text x="8.9" y="585.0" textLength="14.5" lengthAdjust="spacingAndGlyphs" class="ax">0.0</text><text x="22.0" y="598.6" textLength="14.0" lengthAdjust="spacingAndGlyphs" class="ax">0.0</text><text x="8.9" y="527.0" textLength="14.5" lengthAdjust="spacingAndGlyphs" class="ax">0.1</text><text x="65.6" y="598.6" textLength="14.0" lengthAdjust="spacingAndGlyphs" class="ax">0.1</text><text x="8.9" y="468.9" textLength="14.5" lengthAdjust="spacingAndGlyphs" class="ax">0.2</text><text x="109.2" y="598.6" textLength="14.0" lengthAdjust="spacingAndGlyphs" class="ax">0.2</text><text x="8.9" y="410.9" textLength="14.5" lengthAdjust="spacingAndGlyphs" class="ax">0.3</text><text x="152.7" y="598.6" textLength="14.0" lengthAdjust="spacingAndGlyphs" class="ax">0.3</text><text x="8.9" y="352.8" textLength="14.5" lengthAdjust="spacingAndGlyphs" class="ax">0.4</text><text x="196.3" y="598.6" textLength="14.0" lengthAdjust="spacingAndGlyphs" class="ax">0.4</text><text x="8.9" y="294.8" textLength="14.5" lengthAdjust="spacingAndGlyphs" class="ax">0.5</text><text x="239.9" y="598.6" textLength="14.0" lengthAdjust="spacingAndGlyphs" class="ax">0.5</text><text x="8.9" y="236.8" textLength="14.5" lengthAdjust="spacingAndGlyphs" class="ax">0.6</text><text x="283.5" y="598.6" textLength="14.0" lengthAdjust="spacingAndGlyphs" class="ax">0.6</text><text x="8.9" y="178.7" textLength="14.5" lengthAdjust="spacingAndGlyphs" class="ax">0.7</text><text x="327.1" y="598.6" textLength="14.0" lengthAdjust="spacingAndGlyphs" class="ax">0.7</text><text x="8.9" y="120.7" textLength="14.5" lengthAdjust="spacingAndGlyphs" class="ax">0.8</text><text x="370.6" y="598.6" textLength="14.0" lengthAdjust="spacingAndGlyphs" class="ax">0.8</text><text x="8.9" y="62.6" textLength="14.5" lengthAdjust="spacingAndGlyphs" class="ax">0.9</text><text x="414.2" y="598.6" textLength="14.0" lengthAdjust="spacingAndGlyphs" class="ax">0.9</text><text x="17.5" y="38.0" textLength="5.5" lengthAdjust="spacingAndGlyphs" class="ax">y</text><text x="439.4" y="584.2" textLength="5.2" lengthAdjust="spacingAndGlyphs" class="ax">x</text><text x="50.8" y="84.5" textLength="17.6" lengthAdjust="spacingAndGlyphs" class="wl">520</text><text x="131.3" y="132.4" textLength="17.6" lengthAdjust="spacingAndGlyphs" class="wl">540</text><text x="184.1" y="207.8" textLength="17.6" lengthAdjust="spacingAndGlyphs" class="wl">560</text><text x="255.0" y="288.5" textLength="17.6" lengthAdjust="spacingAndGlyphs" class="wl">580</text><text x="312.4" y="360.6" textLength="17.6" lengthAdjust="spacingAndGlyphs" class="wl">600</text><text x="337.8" y="395.2" textLength="17.6" lengthAdjust="spacingAndGlyphs" class="wl">620</text><text x="357.7" y="420.4" textLength="17.6" lengthAdjust="spacingAndGlyphs" class="wl">700</text><text x="8.9" y="271.9" textLength="17.6" lengthAdjust="spacingAndGlyphs" class="wl">500</text><text x="31.1" y="422.4" textLength="17.6" lengthAdjust="spacingAndGlyphs" class="wl">490</text><text x="40.7" y="512.6" textLength="17.6" lengthAdjust="spacingAndGlyphs" class="wl">480</text><text x="53.3" y="557.0" textLength="17.6" lengthAdjust="spacingAndGlyphs" class="wl">470</text><text x="74.0" y="579.3" textLength="17.6" lengthAdjust="spacingAndGlyphs" class="wl">460</text><text x="87.2" y="594.1" textLength="17.6" lengthAdjust="spacingAndGlyphs" class="wl">380</text><g stroke="#000" stroke-width="1.1" fill="none"><circle cx="165.89999999999998" cy="391.6" r="3.7"/><line x1="162.2" y1="391.6" x2="169.59999999999997" y2="391.6"/><line x1="165.89999999999998" y1="387.90000000000003" x2="165.89999999999998" y2="395.3"/></g>
</svg>
<div class="abs" style="left:811px;top:687px;font-size:11px;line-height:13px;color:#6e6e6e">Luminance:</div><div class="abs" style="left:874px;top:687px;font-size:11px;line-height:13px;color:#6e6e6e">Native</div>
<div class="abs" style="left:811px;top:707px;font-size:11px;line-height:13px;color:#6e6e6e">White Point:</div><div class="abs" style="left:874px;top:707px;font-size:11px;line-height:13px;color:#6e6e6e">Native</div>
<svg class="abs" style="left:1168px;top:79px" width="20" height="37" viewBox="0 0 20 37">
<defs><linearGradient id="rs" x1="0" y1="0" x2="0" y2="1"><stop offset="0" stop-color="#dcdcdc"/><stop offset="0.45" stop-color="#8c8c8c"/><stop offset="1" stop-color="#b4b4b4"/></linearGradient>
<linearGradient id="ru" x1="0" y1="0" x2="0" y2="1"><stop offset="0" stop-color="#e8e8e8"/><stop offset="0.5" stop-color="#c4c4c4"/><stop offset="1" stop-color="#d0d0d0"/></linearGradient></defs>
<circle cx="9.8" cy="10" r="7.2" fill="url(#rs)" stroke="#141414" stroke-width="1"/>
<circle cx="9.8" cy="10" r="2.4" fill="#1a1a1a"/>
<circle cx="9.8" cy="27" r="7.2" fill="url(#ru)" stroke="#141414" stroke-width="1"/>
</svg>
<div class="abs" style="left:1189px;top:82px;font-size:11px;line-height:13px;color:#fff">xy</div>
<div class="abs" style="left:1189px;top:99px;font-size:11px;line-height:13px;color:#fff">u'v'</div>
</body></html>
